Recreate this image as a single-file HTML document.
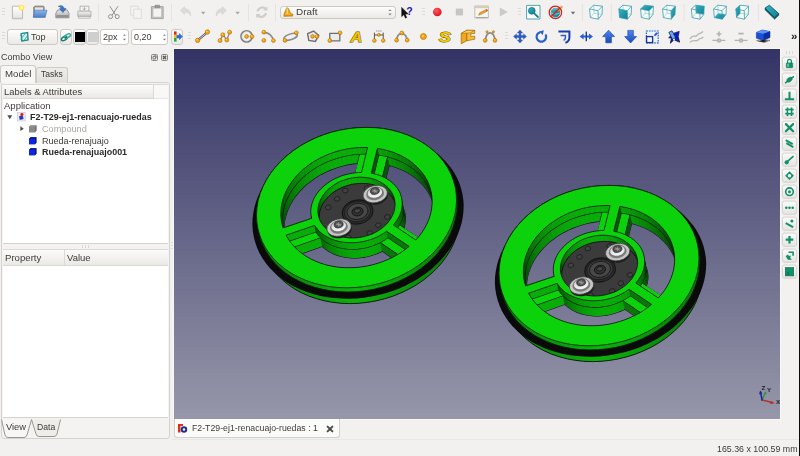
<!DOCTYPE html><html><head><meta charset="utf-8"><title>FreeCAD</title><style>
*{box-sizing:border-box;margin:0;padding:0}
html,body{width:800px;height:456px;overflow:hidden;background:#f2f1f0;font-family:"Liberation Sans", "DejaVu Sans", sans-serif;font-size:11px;color:#3c3c3c}
.abs{position:absolute}
#root{position:relative;width:800px;height:456px;background:#f2f1f0;overflow:hidden}
.t{position:absolute;white-space:nowrap;line-height:14px;font-size:11px;color:#3c3b37;filter:blur(.28px)}
.btn{position:absolute;border:1px solid #cdc9c3;border-radius:3px;background:linear-gradient(#fdfdfc,#ebe9e6)}
.field{position:absolute;border:1px solid #cdc9c3;border-radius:3px;background:#fff}
.hdl{position:absolute;width:3px}
.hdl i{display:block;width:3px;height:1px;background:#dedbd7;margin-bottom:2px}
.vhdl{position:absolute;height:3px;display:flex}
.vhdl i{display:block;width:1px;height:3px;background:#dcd9d5;margin-right:2px}
</style></head><body><div id="root">
<div class="hdl" style="left:2px;top:8px"><i></i><i></i><i></i></div>
<div class="hdl" style="left:421.5px;top:8px"><i></i><i></i><i></i></div>
<div class="hdl" style="left:518px;top:8px"><i></i><i></i><i></i></div>
<div class="hdl" style="left:2px;top:32px"><i></i><i></i><i></i></div>
<div class="hdl" style="left:187.5px;top:32px"><i></i><i></i><i></i></div>
<div class="hdl" style="left:505px;top:32px"><i></i><i></i><i></i></div>
<div class="abs" style="left:98px;top:4px;width:1px;height:17px;background:#e6e3df"></div>
<div class="abs" style="left:171px;top:4px;width:1px;height:17px;background:#e6e3df"></div>
<div class="abs" style="left:248px;top:4px;width:1px;height:17px;background:#e6e3df"></div>
<div class="btn" style="left:280px;top:5.500px;width:115.500px;height:13.200px;"></div>
<svg class="abs" style="left:0;top:0" width="800" height="26" viewBox="0 0 800 26">
<defs>
<linearGradient id="tealg" x1="0" y1="0" x2="1" y2="1"><stop offset="0" stop-color="#35b3c4"/><stop offset="1" stop-color="#0f7f92"/></linearGradient>
<linearGradient id="blueg" x1="0" y1="0" x2="0" y2="1"><stop offset="0" stop-color="#8db6e8"/><stop offset="1" stop-color="#4a7ec6"/></linearGradient>
<linearGradient id="grayg" x1="0" y1="0" x2="0" y2="1"><stop offset="0" stop-color="#e8e8e8"/><stop offset="1" stop-color="#a8a8a8"/></linearGradient>
<linearGradient id="lgrayg" x1="0" y1="0" x2="0" y2="1"><stop offset="0" stop-color="#f4f4f3"/><stop offset="1" stop-color="#c4c4c2"/></linearGradient>
<linearGradient id="pageg" x1="0" y1="0" x2="0" y2="1"><stop offset="0" stop-color="#ffffff"/><stop offset="1" stop-color="#e4e4e2"/></linearGradient>
<radialGradient id="redg" cx=".4" cy=".35" r=".7"><stop offset="0" stop-color="#ff5a5a"/><stop offset="1" stop-color="#d80f1f"/></radialGradient>
</defs>
<path d="M12.4 6.2h10.2v12.2h-10.2z" fill="url(#pageg)" stroke="#a9a9a6" stroke-width=".8"/><path d="M12.5 18.9h10.2" stroke="#c9c9c6" stroke-width=".8"/>
<circle cx="21.6" cy="7.6" r="2.9" fill="#ffe94a"/><circle cx="21.6" cy="7.6" r="1.5" fill="#fff9b0"/>
<path d="M33.6 7.2l1.2-1.2h8.6l.8 1v9.6h-10.6z" fill="#9b9b98" stroke="#6e6e6c" stroke-width=".6"/><path d="M35 7.4h8v6h-8z" fill="#e6e6e4"/>
<path d="M33.2 17.4l1.6-7.2h12.2l-1.8 7.2z" fill="url(#blueg)" stroke="#4673b4" stroke-width=".6"/>
<path d="M55.8 13.4l1.8-3.4h9.6l1.8 3.4v4.4h-13.2z" fill="url(#grayg)" stroke="#77777a" stroke-width=".7"/><path d="M56.6 15.2h11.6v1.6h-11.6z" fill="#8a8a8c"/>
<path d="M58.2 6.4c3-1.6 5.4-.6 6 2.2h1.9l-3.2 4-3.4-4h1.9c-.3-1.4-1.6-2-3.2-2.200z" fill="#3a76c8" stroke="#24509a" stroke-width=".5"/>
<path d="M80 6.2h8.8v5h-8.800z" fill="#f4f4f2" stroke="#9a9a98" stroke-width=".7"/><path d="M84.400 7.200v2.600m-1.300-1.200l1.300 1.400 1.300-1.400" stroke="#8a8a8a" stroke-width=".7" fill="none"/>
<path d="M77.8 11.2h13.200v5.200h-13.200z" fill="url(#lgrayg)" stroke="#a2a2a0" stroke-width=".7"/><path d="M78.600 16.400h11.600v1.800h-11.600z" fill="#f2f2f0" stroke="#9a9a98" stroke-width=".6"/>
<g stroke="#8a8a88" fill="none" stroke-width=".95"><path d="M109.800 6.200l5.800 8.800M118 6.200l-5.800 8.800"/><circle cx="110.600" cy="16.600" r="2"/><circle cx="117.200" cy="16.600" r="2"/></g>
<g stroke="#d9d8d5" fill="#f4f3f1" stroke-width=".8"><path d="M130.600 6.200h7.400v9h-7.400z"/><path d="M133.600 9.200h7.800v9.200h-7.800z"/></g>
<path d="M151.400 6.600h11.800v12h-11.800z" fill="#c6c6c3" stroke="#989895" stroke-width=".8"/><path d="M153 8.200h8.600v9h-8.600z" fill="#f3f3f1" stroke="#a5a5a2" stroke-width=".5"/><path d="M155 5.200h4.600v2.400h-4.600z" fill="#9a9a98" stroke="#7a7a78" stroke-width=".5"/>
<path d="M180.400 10.400l4.200-4v2.400c4 0 6.200 2.200 6 7.400-1-3-2.800-4-6-4v2.400z" fill="#dcdbd8" stroke="#d0cfcc" stroke-width=".5"/>
<path d="M201 11.8 l4.4 0 l-2.2 2.8z" fill="#a9a7a3"/>
<path d="M226.400 10.400l-4.200-4v2.400c-4 0-6.200 2.200-6 7.400 1-3 2.800-4 6-4v2.400z" fill="#dcdbd8" stroke="#d0cfcc" stroke-width=".5"/>
<path d="M235.4 11.8 l4.4 0 l-2.2 2.8z" fill="#a9a7a3"/>
<g fill="none" stroke="#cfcecb" stroke-width="2.2"><path d="M257.600 11.400a4.800 4.800 0 0 1 8-2.600"/><path d="M266 13a4.800 4.800 0 0 1-8 2.600"/></g><path d="M267.400 6.200v4.200h-4.200z M256.200 18.200v-4.200h4.200z" fill="#cfcecb"/>
<path d="M275.500 4v17" stroke="#e6e3df" stroke-width="1"/>
<path d="M284 14.600l2.600-6.800 1.600.4 2.600 5.600 2 .4v1.400l-8.800.6z" fill="#f2b01c" stroke="#8a5c00" stroke-width=".6"/><path d="M283.600 15.200h9.400v1.200h-9.400z" fill="#d88a10"/><path d="M287 8l.4 6" stroke="#fff0a0" stroke-width=".8"/>
<path d="M401.600 7.200l0 9.600 2.200-2 1.600 3.400 1.500-.7-1.600-3.300 3-.2z" fill="#111" stroke="#000" stroke-width=".3"/>
<text x="406.200" y="15.200" font-family="'Liberation Sans',sans-serif" font-weight="bold" font-size="10.500" fill="#1a22b8">?</text>
<circle cx="437.300" cy="12" r="4.300" fill="url(#redg)"/>
<rect x="455.800" y="8.600" width="7.200" height="6.800" fill="#c6c5c2"/>
<path d="M474.800 6h13.600v12h-13.600z" fill="#f6f5f1" stroke="#b4b2aa" stroke-width=".8"/><path d="M474.800 6h13.600v2.200h-13.600z" fill="#d6cfae"/><path d="M476 17.600h11.600" stroke="#9c9a94" stroke-width=".9"/><path d="M478.600 15.200l1-2.400 6.800-3.400 1 1.600-6.800 3.600z" fill="#f0a030" stroke="#a86414" stroke-width=".5"/><path d="M486.400 9.400l1 1.600" stroke="#d83a3a" stroke-width="1.2"/>
<path d="M499.800 7.600v9l8-4.500z" fill="#cbcac7"/>
<path d="M526.600 5.400h11l2.400 0v13.600h-13.400z" fill="#fbfdfd" stroke="#2e8f9c" stroke-width=".8"/><circle cx="531.800" cy="10.800" r="3.400" fill="url(#tealg)" stroke="#11707e" stroke-width=".7"/><path d="M534.200 13.400l3.800 3.600" stroke="#1a7f8e" stroke-width="1.800" stroke-linecap="round"/>
<circle cx="555.400" cy="12.600" r="4.800" fill="url(#tealg)"/><path d="M552.600 9.600c1.800-1 3.800-1 5.600 0M551 13c3 1.400 6 1.400 8.800 0" stroke="#9fe0e8" stroke-width=".7" fill="none"/><path d="M556.800 10.600l4.800-4.600 1 1-4.600 4.800z" fill="#f4b030" stroke="#a87010" stroke-width=".4"/><circle cx="555.400" cy="12.400" r="6.200" fill="none" stroke="#d8201c" stroke-width="1.300"/><path d="M551 16.800l8.800-8.800" stroke="#d8201c" stroke-width="1.300"/>
<path d="M570.8 11.8 l4.4 0 l-2.2 2.8z" fill="#6e6c68"/>
<path d="M582.400 4v17M611.300 4v17M684.200 4v17M758.400 4v17" stroke="#e6e3df" stroke-width="1"/>
<g transform="translate(589.6,5.2)" stroke="#2f98a8" stroke-width=".75" fill="none" stroke-linejoin="round"><path d="M0 3.7 L4.1 0 L12.8 1 L12.4 9.2 L8.7 14 L0.8 12.4Z" fill="#f7fbfc" stroke="none"/><path d="M4.1 0 L4.5 8.1 L12.4 9.2 M4.5 8.1 L0.8 12.4" stroke="#7fc2cc" stroke-width=".6"/><path d="M0 3.7 L8.4 5.5 L8.7 14 L0.8 12.4Z M0 3.7 L4.1 0 L12.8 1 L8.4 5.5 M12.8 1 L12.4 9.2 L8.7 14"/></g>
<g transform="translate(618.8,5.2)" stroke="#2f98a8" stroke-width=".75" fill="none" stroke-linejoin="round"><path d="M0 3.7 L4.1 0 L12.8 1 L12.4 9.2 L8.7 14 L0.8 12.4Z" fill="#f7fbfc" stroke="none"/><path d="M4.1 0 L4.5 8.1 L12.4 9.2 M4.5 8.1 L0.8 12.4" stroke="#7fc2cc" stroke-width=".6"/><path d="M0 3.7 L8.4 5.5 L8.7 14 L0.8 12.4Z" fill="url(#tealg)" stroke="none"/><path d="M0 3.7 L8.4 5.5 L8.7 14 L0.8 12.4Z M0 3.7 L4.1 0 L12.8 1 L8.4 5.5 M12.8 1 L12.4 9.2 L8.7 14"/></g>
<g transform="translate(640.6,5.2)" stroke="#2f98a8" stroke-width=".75" fill="none" stroke-linejoin="round"><path d="M0 3.7 L4.1 0 L12.8 1 L12.4 9.2 L8.7 14 L0.8 12.4Z" fill="#f7fbfc" stroke="none"/><path d="M4.1 0 L4.5 8.1 L12.4 9.2 M4.5 8.1 L0.8 12.4" stroke="#7fc2cc" stroke-width=".6"/><path d="M0 3.7 L8.4 5.5 L12.8 1 L4.1 0Z" fill="url(#tealg)" stroke="none"/><path d="M0 3.7 L8.4 5.5 L8.7 14 L0.8 12.4Z M0 3.7 L4.1 0 L12.8 1 L8.4 5.5 M12.8 1 L12.4 9.2 L8.7 14"/></g>
<g transform="translate(662.6,5.2)" stroke="#2f98a8" stroke-width=".75" fill="none" stroke-linejoin="round"><path d="M0 3.7 L4.1 0 L12.8 1 L12.4 9.2 L8.7 14 L0.8 12.4Z" fill="#f7fbfc" stroke="none"/><path d="M4.1 0 L4.5 8.1 L12.4 9.2 M4.5 8.1 L0.8 12.4" stroke="#7fc2cc" stroke-width=".6"/><path d="M8.4 5.5 L12.8 1 L12.4 9.2 L8.7 14Z" fill="url(#tealg)" stroke="none"/><path d="M0 3.7 L8.4 5.5 L8.7 14 L0.8 12.4Z M0 3.7 L4.1 0 L12.8 1 L8.4 5.5 M12.8 1 L12.4 9.2 L8.7 14"/></g>
<g transform="translate(691.4,5.2)" stroke="#2f98a8" stroke-width=".75" fill="none" stroke-linejoin="round"><path d="M0 3.7 L4.1 0 L12.8 1 L12.4 9.2 L8.7 14 L0.8 12.4Z" fill="#f7fbfc" stroke="none"/><path d="M4.1 0 L12.8 1 L12.4 9.2 L4.5 8.1Z" fill="url(#tealg)" stroke="none"/><path d="M4.1 0 L4.5 8.1 L12.4 9.2 M4.5 8.1 L0.8 12.4" stroke="#7fc2cc" stroke-width=".6"/><path d="M0 3.7 L8.4 5.5 L8.7 14 L0.8 12.4Z M0 3.7 L4.1 0 L12.8 1 L8.4 5.5 M12.8 1 L12.4 9.2 L8.7 14"/></g>
<g transform="translate(713.6,5.2)" stroke="#2f98a8" stroke-width=".75" fill="none" stroke-linejoin="round"><path d="M0 3.7 L4.1 0 L12.8 1 L12.4 9.2 L8.7 14 L0.8 12.4Z" fill="#f7fbfc" stroke="none"/><path d="M0.8 12.4 L8.7 14 L12.4 9.2 L4.5 8.1Z" fill="url(#tealg)" stroke="none"/><path d="M4.1 0 L4.5 8.1 L12.4 9.2 M4.5 8.1 L0.8 12.4" stroke="#7fc2cc" stroke-width=".6"/><path d="M0 3.7 L8.4 5.5 L8.7 14 L0.8 12.4Z M0 3.7 L4.1 0 L12.8 1 L8.4 5.5 M12.8 1 L12.4 9.2 L8.7 14"/></g>
<g transform="translate(735.8,5.2)" stroke="#2f98a8" stroke-width=".75" fill="none" stroke-linejoin="round"><path d="M0 3.7 L4.1 0 L12.8 1 L12.4 9.2 L8.7 14 L0.8 12.4Z" fill="#f7fbfc" stroke="none"/><path d="M0 3.7 L4.1 0 L4.5 8.1 L0.8 12.4Z" fill="url(#tealg)" stroke="none"/><path d="M4.1 0 L4.5 8.1 L12.4 9.2 M4.5 8.1 L0.8 12.4" stroke="#7fc2cc" stroke-width=".6"/><path d="M0 3.7 L8.4 5.5 L8.7 14 L0.8 12.4Z M0 3.7 L4.1 0 L12.8 1 L8.4 5.5 M12.8 1 L12.4 9.2 L8.7 14"/></g>
<path d="M765 8l4.400-2.800 9.400 8.400-4.200 4z" fill="url(#tealg)" stroke="#0c5060" stroke-width=".8" stroke-linejoin="round"/><path d="M765 8l0 1.800 9.600 9.400 4.200-4 0-1.600-4.200 4z" fill="#0b5c6c" stroke="#0a4858" stroke-width=".5" stroke-linejoin="round"/>
</svg>
<div class="t" style="left:295.7px;top:5.04px;font-size:9.7px;color:#3c3b37;transform-origin:0 0;transform:scaleX(1.0229);">Draft</div>
<svg class="abs" style="left:385.500px;top:6px" width="8" height="13" viewBox="0 0 8 13"><path d="M2.300 5 L4 3.200 L5.700 5 Z M2.300 7.600 L4 9.400 L5.700 7.600 Z" fill="#8a8884"/></svg>
<div class="btn" style="left:7px;top:29px;width:51px;height:16px;"></div>
<div class="t" style="left:31px;top:29.94px;font-size:9.7px;color:#3c3b37;transform-origin:0 0;transform:scaleX(0.9336);">Top</div>
<div class="btn" style="left:60px;top:29px;width:12px;height:16px;"></div>
<div class="btn" style="left:73px;top:29px;width:13px;height:16px;"></div><div class="abs" style="left:74.5px;top:32px;width:10px;height:10px;background:#000"></div>
<div class="btn" style="left:86px;top:29px;width:13px;height:16px;"></div><div class="abs" style="left:87.5px;top:32px;width:10px;height:10px;background:#cfcfcf"></div>
<div class="field" style="left:100px;top:29px;width:29px;height:16px;"></div>
<div class="t" style="left:103.3px;top:30.14px;font-size:9.7px;color:#3c3b37;transform-origin:0 0;transform:scaleX(0.9272);">2px</div>
<div class="field" style="left:130.500px;top:29px;width:37.500px;height:16px;"></div>
<div class="t" style="left:134.3px;top:30.14px;font-size:9.7px;color:#3c3b37;transform-origin:0 0;transform:scaleX(0.9270);">0,20</div>
<svg class="abs" style="left:121px;top:31px" width="7" height="12" viewBox="0 0 7 12"><path d="M2 4.800 L3.500 3.200 L5 4.800 Z M2 7.800 L3.500 9.400 L5 7.800 Z" fill="#77756f"/></svg>
<svg class="abs" style="left:160.5px;top:31px" width="7" height="12" viewBox="0 0 7 12"><path d="M2 4.800 L3.500 3.200 L5 4.800 Z M2 7.800 L3.500 9.400 L5 7.800 Z" fill="#77756f"/></svg>
<div class="btn" style="left:170.500px;top:29px;width:12.500px;height:15.500px;"></div>
<svg class="abs" style="left:0;top:26px" width="800" height="24" viewBox="0 26 800 24">
<g><path d="M21.200 33.600l6.400-1 .4 7.400-6.200 1z" fill="#d9eef0" stroke="#1f8d8a" stroke-width="1.400"/><path d="M20.200 36l2.600-3.400M20.600 39.600l5-6.600M23.200 41.400l4.800-6.400M26.400 41.200l2-2.800" stroke="#26a39c" stroke-width=".8"/></g>
<g fill="none"><ellipse cx="64.400" cy="38.400" rx="3.300" ry="1.700" transform="rotate(-32 64.400 38.400)" stroke="#14806e" stroke-width="1.500"/><ellipse cx="67.600" cy="36" rx="3.300" ry="1.700" transform="rotate(-32 67.600 36)" stroke="#35a898" stroke-width="1.400" fill="#dff3ef"/><path d="M64.800 38.200l2.400-1.800" stroke="#0e6a5a" stroke-width="1.400"/></g>
<rect x="174" y="31.400" width="2.600" height="3.400" fill="#e02818"/><rect x="174" y="34.800" width="2.600" height="3.200" fill="#f0c020"/><rect x="174" y="38" width="2.600" height="3.600" fill="#28a838"/><path d="M176.800 35.200h2.600v-1.800l3 3.200-3 3.200v-1.800h-2.600z" fill="#2a6fe0" stroke="#1848a8" stroke-width=".4"/>
<path d="M197.600 40.400l10-8.400" stroke="#4a4a4a" stroke-width="2.200"/><path d="M197.600 40.400l10-8.400" stroke="#d8d8d8" stroke-width="1"/><circle cx="197.6" cy="40.4" r="2.2" fill="#f6a40c" stroke="#a96b00" stroke-width=".6"/><circle cx="197.1" cy="39.8" r="0.77" fill="#ffd774"/><circle cx="207.4" cy="32" r="2.2" fill="#f6a40c" stroke="#a96b00" stroke-width=".6"/><circle cx="206.9" cy="31.4" r="0.77" fill="#ffd774"/>
<path d="M220 40.600l3-5.800 3.800 5.200 3-8" stroke="#8d8d8d" stroke-width="1.300" fill="none"/><circle cx="220" cy="40.6" r="2" fill="#f6a40c" stroke="#a96b00" stroke-width=".6"/><circle cx="219.5" cy="40.0" r="0.70" fill="#ffd774"/><circle cx="222.8" cy="34.8" r="2" fill="#f6a40c" stroke="#a96b00" stroke-width=".6"/><circle cx="222.3" cy="34.199999999999996" r="0.70" fill="#ffd774"/><circle cx="226.8" cy="40" r="2" fill="#f6a40c" stroke="#a96b00" stroke-width=".6"/><circle cx="226.3" cy="39.4" r="0.70" fill="#ffd774"/><circle cx="229.6" cy="32.2" r="2" fill="#f6a40c" stroke="#a96b00" stroke-width=".6"/><circle cx="229.1" cy="31.6" r="0.70" fill="#ffd774"/>
<circle cx="246.600" cy="36.400" r="5.600" fill="none" stroke="#7e7e7e" stroke-width="1.600"/><circle cx="246.600" cy="36.400" r="4.600" fill="none" stroke="#d6d6d6" stroke-width=".6"/><circle cx="246.6" cy="36.4" r="1.9" fill="#f6a40c" stroke="#a96b00" stroke-width=".6"/><circle cx="246.1" cy="35.8" r="0.66" fill="#ffd774"/><circle cx="252" cy="36.6" r="1.9" fill="#f6a40c" stroke="#a96b00" stroke-width=".6"/><circle cx="251.5" cy="36.0" r="0.66" fill="#ffd774"/>
<path d="M263.600 32.600c5-.4 9 3 9.600 8" stroke="#8d8d8d" stroke-width="1.800" fill="none"/><circle cx="263.8" cy="32.2" r="1.9" fill="#f6a40c" stroke="#a96b00" stroke-width=".6"/><circle cx="263.3" cy="31.6" r="0.66" fill="#ffd774"/><circle cx="263.8" cy="40.4" r="1.9" fill="#f6a40c" stroke="#a96b00" stroke-width=".6"/><circle cx="263.3" cy="39.8" r="0.66" fill="#ffd774"/><circle cx="273.4" cy="40.6" r="1.9" fill="#f6a40c" stroke="#a96b00" stroke-width=".6"/><circle cx="272.9" cy="40.0" r="0.66" fill="#ffd774"/>
<ellipse cx="290.600" cy="36.800" rx="7" ry="2.800" transform="rotate(-18 290.600 36.800)" fill="none" stroke="#8d8d8d" stroke-width="1.500"/><circle cx="285" cy="40.4" r="1.9" fill="#f6a40c" stroke="#a96b00" stroke-width=".6"/><circle cx="284.5" cy="39.8" r="0.66" fill="#ffd774"/><circle cx="296.4" cy="32.8" r="1.9" fill="#f6a40c" stroke="#a96b00" stroke-width=".6"/><circle cx="295.9" cy="32.199999999999996" r="0.66" fill="#ffd774"/>
<path d="M307.600 33.600l6-2.600 5.200 4.400-3.400 6-6.600-1z" fill="#e8e8e8" stroke="#707070" stroke-width="1.400"/><circle cx="312.6" cy="36.4" r="1.8" fill="#f6a40c" stroke="#a96b00" stroke-width=".6"/><circle cx="312.1" cy="35.8" r="0.63" fill="#ffd774"/><circle cx="317" cy="36.6" r="1.8" fill="#f6a40c" stroke="#a96b00" stroke-width=".6"/><circle cx="316.5" cy="36.0" r="0.63" fill="#ffd774"/>
<path d="M329.800 33.400h10v7.400h-10z" fill="#ececec" stroke="#707070" stroke-width="1.300"/><circle cx="329.8" cy="40.6" r="1.9" fill="#f6a40c" stroke="#a96b00" stroke-width=".6"/><circle cx="329.3" cy="40.0" r="0.66" fill="#ffd774"/><circle cx="340" cy="32.8" r="1.9" fill="#f6a40c" stroke="#a96b00" stroke-width=".6"/><circle cx="339.5" cy="32.199999999999996" r="0.66" fill="#ffd774"/>
<text x="350.600" y="42" font-family="'Liberation Sans',sans-serif" font-weight="bold" font-style="italic" font-size="14.500" fill="#f2c400" stroke="#6a5000" stroke-width=".9" paint-order="stroke" transform="translate(350.600 0) scale(1.12 1) translate(-350.600 0)">A</text>
<path d="M374.400 32.600v8M383.200 32.600v8M374.400 35h8.800" stroke="#555" stroke-width="1" fill="none"/><path d="M376.400 31h5" stroke="#999" stroke-width="1.400" stroke-dasharray="1 1"/><circle cx="374.4" cy="40.6" r="1.8" fill="#f6a40c" stroke="#a96b00" stroke-width=".6"/><circle cx="373.9" cy="40.0" r="0.63" fill="#ffd774"/><circle cx="383.2" cy="40.6" r="1.8" fill="#f6a40c" stroke="#a96b00" stroke-width=".6"/><circle cx="382.7" cy="40.0" r="0.63" fill="#ffd774"/><circle cx="378.8" cy="34.8" r="1.5" fill="#f6a40c" stroke="#a96b00" stroke-width=".6"/><circle cx="378.3" cy="34.199999999999996" r="0.52" fill="#ffd774"/>
<path d="M396.600 40.400c.6-9 9.400-9 10.600 0" stroke="#8d8d8d" stroke-width="1.800" fill="none"/><circle cx="396.6" cy="40.2" r="1.9" fill="#f6a40c" stroke="#a96b00" stroke-width=".6"/><circle cx="396.1" cy="39.6" r="0.66" fill="#ffd774"/><circle cx="401.8" cy="33" r="1.9" fill="#f6a40c" stroke="#a96b00" stroke-width=".6"/><circle cx="401.3" cy="32.4" r="0.66" fill="#ffd774"/><circle cx="407.2" cy="40.2" r="1.9" fill="#f6a40c" stroke="#a96b00" stroke-width=".6"/><circle cx="406.7" cy="39.6" r="0.66" fill="#ffd774"/>
<circle cx="423.4" cy="36.5" r="3" fill="#f6a40c" stroke="#a96b00" stroke-width=".6"/><circle cx="422.9" cy="35.9" r="1.05" fill="#ffd774"/>
<text x="438.800" y="42" font-family="'Liberation Sans',sans-serif" font-weight="bold" font-style="italic" font-size="14" fill="#f2cc00" stroke="#6a5000" stroke-width=".9" paint-order="stroke" transform="translate(438.800 0) scale(1.3 1) translate(-438.800 0)">S</text>
<path d="M461.200 33.400l5.600-3.200v10.600l-5.600 3z" fill="#f5a818" stroke="#8a5a00" stroke-width=".6"/><path d="M466.800 30.200l8 .2v3l-4 .4v2.600l4-.2v3l-8 1.600z" fill="#f8bc3c" stroke="#8a5a00" stroke-width=".6"/><path d="M461.200 33.400l5.600-3.200 8 .2-5 2.600z" fill="#fdd060" stroke="#8a5a00" stroke-width=".5"/>
<path d="M485.400 40.400c1-10 8.400-10 9.600 0" stroke="#8d8d8d" stroke-width="1.800" fill="none"/><circle cx="485.2" cy="40.4" r="1.9" fill="#f6a40c" stroke="#a96b00" stroke-width=".6"/><circle cx="484.7" cy="39.8" r="0.66" fill="#ffd774"/><circle cx="495" cy="40.4" r="1.9" fill="#f6a40c" stroke="#a96b00" stroke-width=".6"/><circle cx="494.5" cy="39.8" r="0.66" fill="#ffd774"/><circle cx="487" cy="31.8" r="1.1" fill="#f6a40c" stroke="#a96b00" stroke-width=".6"/><circle cx="486.5" cy="31.2" r="0.39" fill="#ffd774"/><circle cx="493.4" cy="31.8" r="1.1" fill="#f6a40c" stroke="#a96b00" stroke-width=".6"/><circle cx="492.9" cy="31.2" r="0.39" fill="#ffd774"/>
<g fill="#2a5fd0" stroke="#183c98" stroke-width=".4"><path d="M520 30l2.600 3h-1.700v2.600h2.600v-1.700l3 2.600-3 2.600v-1.700h-2.600v2.600h1.700l-2.600 3-2.600-3h1.700v-2.600h-2.600v1.700l-3-2.600 3-2.600v1.700h2.600v-2.600h-1.700z"/></g>
<path d="M545.600 34.600a4.800 4.800 0 1 1-5.400-2.400" fill="none" stroke="#2a5fd0" stroke-width="2.200"/><path d="M543.800 30.200l-4.600 1.400 3.600 3.400z" fill="#2a5fd0"/>
<path d="M558.400 31.400h11v6c0 2.400-1.400 4.400-4 5.400" fill="none" stroke="#1a3fa8" stroke-width="2"/><path d="M560.600 35.400h4.800v2.400c0 1.200-.6 2-1.800 2.600" fill="none" stroke="#2a5fd0" stroke-width="1.500"/>
<g fill="#2a5fd0"><path d="M579.600 36.400l4-3v2h2.400v2h-2.400v2z"/><path d="M593 36.400l-4-3v2h-2.400v2h2.400v2z"/><rect x="585.600" y="31.600" width="1.400" height="9.600" fill="#183c98"/></g>
<path d="M608.600 30.200l6 6.400h-3.200v6.200h-5.600v-6.200h-3.200z" fill="url(#blueg2)" stroke="#183c98" stroke-width=".6"/>
<path d="M630.600 43l6-6.400h-3.200v-6.200h-5.600v6.200h-3.200z" fill="url(#blueg2)" stroke="#183c98" stroke-width=".6"/>
<defs><linearGradient id="blueg2" x1="0" y1="0" x2="0" y2="1"><stop offset="0" stop-color="#4a8af0"/><stop offset="1" stop-color="#1a48c0"/></linearGradient></defs>
<rect x="646.400" y="31" width="11.800" height="11.800" fill="#eef2fc" stroke="#2a5fd0" stroke-width="1.200" stroke-dasharray="1.600 1"/><rect x="646.600" y="36.600" width="6" height="6" fill="#fff" stroke="#1a3a90" stroke-width="1.400"/><path d="M653.800 35l2.600-2.800 1.600 1.400-2.800 2.600z" fill="#2a5fd0"/>
<path d="M668.600 37.800l4.600-4.400 6-2 -1 5.200 1.400 5.600-5.600-2.400-3.600 3.400 1-5.200z" fill="#0a1ed0" stroke="#04083a" stroke-width=".7" stroke-linejoin="round"/><path d="M668.800 32.400l3.200-1.600 3.600 6.800-3.200 1.600z" fill="#6aa8e8" stroke="#0a1850" stroke-width=".7"/><circle cx="674" cy="39.400" r="1" fill="#fff"/>
<g fill="none" stroke="#b9b8b5" stroke-width="1.400"><path d="M690 39c3-6 5-.6 7-3.600s3.600-1 6-4"/><path d="M690 42.400c3-4 6 0 8-2.400s3-1 5.400-3"/></g>
<g stroke="#b4b3b0" stroke-width="1.300" fill="#c4c3c0"><path d="M712.400 40.400h13"/><circle cx="719" cy="40.400" r="1.600"/><path d="M719 31.600v4.800M716.600 34h4.800" stroke-width="1.600"/></g>
<g stroke="#b4b3b0" stroke-width="1.300" fill="#c4c3c0"><path d="M734.600 40.400h13"/><circle cx="741" cy="40.400" r="1.600"/><path d="M738.400 33.600h5.200" stroke-width="1.800"/></g>
<path d="M756.600 40.600l5.400-1.600 8 1.400-5.600 2z" fill="#f4f4f4" stroke="#555" stroke-width=".6"/><path d="M757.800 41.200l5-1.400 5.600 1-4.600 1.400z" fill="#222"/>
<path d="M756.400 32.400l6-2.400 7.600 1.600v6l-6.400 2.400-7.200-1.800z" fill="#1a50d8" stroke="#0a2070" stroke-width=".5"/><path d="M756.400 32.400l6-2.400 7.600 1.600-6.400 2.200z" fill="#5a94f4"/><path d="M763.600 33.800l6.400-2.200v6l-6.400 2.400z" fill="#0c30a0"/>
</svg>
<div class="t" style="left:790.500px;top:28.500px;font-size:11px;font-weight:bold;color:#1a1a1a;transform-origin:0 0;transform:scaleX(1.05)">»</div>
<div class="t" style="left:1.3px;top:50.39px;font-size:9.7px;color:#3c3b37;transform-origin:0 0;transform:scaleX(0.9359);">Combo View</div>
<svg class="abs" style="left:151px;top:53.500px" width="20" height="8" viewBox="0 0 20 8"><rect x=".5" y=".5" width="6" height="6" rx="1" fill="#e4e2de" stroke="#8a8884"/><path d="M2 2.500h2.500v2.500h-2.500z M3.200 1.800h2v2" stroke="#666" stroke-width=".7" fill="none"/><rect x="10.5" y=".5" width="6" height="6" rx="1" fill="#e4e2de" stroke="#8a8884"/><path d="M12 2 l3 3 M15 2 l-3 3" stroke="#555" stroke-width="1.2"/></svg>
<div class="abs" style="left:0.800px;top:82.300px;width:169.400px;height:357px;border:1.800px solid #d6d3cf;border-bottom-width:1px;border-top-width:1px;border-radius:3px;background:#f4f3f2"></div>
<div class="abs" style="left:36px;top:66.500px;width:31.600px;height:16px;border:1px solid #cfccc6;border-bottom:none;border-radius:3px 3px 0 0;background:linear-gradient(#efedea,#e3e0dc)"></div>
<div class="abs" style="left:0px;top:65px;width:36px;height:18px;border:1px solid #cfccc6;border-bottom:none;border-radius:3px 3px 0 0;background:#f7f6f5"></div>
<div class="t" style="left:5.2px;top:66.64px;font-size:9.7px;color:#3c3b37;transform-origin:0 0;transform:scaleX(0.9956);">Model</div>
<div class="t" style="left:41px;top:67.14px;font-size:9.7px;color:#3c3b37;transform-origin:0 0;transform:scaleX(0.8792);">Tasks</div>
<div class="abs" style="left:2.600px;top:84px;width:165.800px;height:160px;border-top:1px solid #dcd9d5;border-bottom:1px solid #d6d3ce;background:#fff"></div>
<div class="abs" style="left:2.5px;top:85px;width:151px;height:14px;background:linear-gradient(#fbfbfa,#ebe9e6);border-right:1px solid #dcd9d4;border-bottom:1px solid #dcd9d4"></div>
<div class="abs" style="left:153.500px;top:85px;width:14px;height:14px;background:#f9f8f7;border-bottom:1px solid #e6e4e0"></div>
<div class="t" style="left:4.4px;top:85.39px;font-size:9.7px;color:#3c3b37;transform-origin:0 0;transform:scaleX(0.9669);">Labels &amp; Attributes</div>
<div class="t" style="left:3.8px;top:98.64px;font-size:9.7px;color:#3c3b37;transform-origin:0 0;transform:scaleX(0.9821);">Application</div>
<svg class="abs" style="left:6.500px;top:114.800px" width="6" height="5" viewBox="0 0 6 5"><path d="M0.300 0.300 L5.300 0.300 L2.800 4.200 Z" fill="#4e4e4c"/></svg>
<div class="t" style="left:29.8px;top:110.39px;font-size:9.7px;color:#2a2a28;transform-origin:0 0;transform:scaleX(0.9223);font-weight:bold;">F2-T29-ej1-renacuajo-ruedas</div>
<svg class="abs" style="left:19.600px;top:126.300px" width="5" height="6" viewBox="0 0 5 6"><path d="M0.300 0.300 L0.300 5 L3.800 2.650 Z" fill="#4e4e4c"/></svg>
<div class="t" style="left:41.8px;top:121.89px;font-size:9.7px;color:#a9a7a3;transform-origin:0 0;transform:scaleX(0.9442);">Compound</div>
<div class="t" style="left:41.8px;top:133.64px;font-size:9.7px;color:#3c3b37;transform-origin:0 0;transform:scaleX(0.9314);">Rueda-renajuajo</div>
<div class="t" style="left:41.8px;top:145.39px;font-size:9.7px;color:#2a2a28;transform-origin:0 0;transform:scaleX(0.9243);font-weight:bold;">Rueda-renajuajo001</div>
<svg class="abs" style="left:16.500px;top:112px" width="9" height="10" viewBox="0 0 9 10"><rect x=".6" y=".6" width="7.600" height="8.400" fill="#ececf6" stroke="#c4c4d4" stroke-width=".6"/><path d="M2 4.200 L5.800 3.600 L6.600 7 L2.800 8 Z" fill="#2438c0"/><path d="M3.400 2.400 a1.600 1.500 0 0 1 3.200 .2 L5.800 3.800 L3.600 4 Z" fill="#e01c10"/></svg>
<svg class="abs" style="left:29.2px;top:124.7px" width="8" height="8" viewBox="0 0 8 8"><path d="M0.200 1.600 L1.600 0.200 L7.600 0.200 L7.600 5.600 L6.200 7.200 L0.200 7.200 Z" fill="#6a6a6a"/><path d="M0.200 1.600 L6.200 1.600 L6.200 7.200 L0.200 7.200 Z" fill="#8a8a8a"/><path d="M0.200 1.600 L1.600 0.200 L7.600 0.200 L6.200 1.600Z" fill="#a8a8a8"/></svg>
<svg class="abs" style="left:29.2px;top:136.5px" width="8" height="8" viewBox="0 0 8 8"><path d="M0.200 1.600 L1.600 0.200 L7.600 0.200 L7.600 5.600 L6.200 7.200 L0.200 7.200 Z" fill="#06127a"/><path d="M0.200 1.600 L6.200 1.600 L6.200 7.200 L0.200 7.200 Z" fill="#0c24e8"/><path d="M0.200 1.600 L1.600 0.200 L7.600 0.200 L6.200 1.600Z" fill="#0a1a9a"/></svg>
<svg class="abs" style="left:29.2px;top:148.4px" width="8" height="8" viewBox="0 0 8 8"><path d="M0.200 1.600 L1.600 0.200 L7.600 0.200 L7.600 5.600 L6.200 7.200 L0.200 7.200 Z" fill="#06127a"/><path d="M0.200 1.600 L6.200 1.600 L6.200 7.200 L0.200 7.200 Z" fill="#0c24e8"/><path d="M0.200 1.600 L1.600 0.200 L7.600 0.200 L6.200 1.600Z" fill="#0a1a9a"/></svg>
<div class="vhdl" style="left:82px;top:245px"><i></i><i></i><i></i></div>
<div class="hdl" style="left:170.800px;top:241.500px;width:2.400px"><i style="width:2.400px"></i><i style="width:2.400px"></i><i style="width:2.400px"></i></div>
<div class="abs" style="left:2.600px;top:249px;width:165.800px;height:169px;border-top:1px solid #dcd9d5;border-bottom:1px solid #d6d3ce;background:#fff"></div>
<div class="abs" style="left:2.500px;top:250px;width:62px;height:15.500px;background:linear-gradient(#fbfbfa,#ebe9e6);border-right:1px solid #dcd9d4;border-bottom:1px solid #dcd9d4"></div>
<div class="abs" style="left:64.500px;top:250px;width:103px;height:15.500px;background:linear-gradient(#fbfbfa,#ebe9e6);border-bottom:1px solid #dcd9d4"></div>
<div class="t" style="left:5.4px;top:250.89px;font-size:9.7px;color:#3c3b37;transform-origin:0 0;transform:scaleX(0.9930);">Property</div>
<div class="t" style="left:66.8px;top:250.89px;font-size:9.7px;color:#3c3b37;transform-origin:0 0;transform:scaleX(0.9797);">Value</div>
<svg class="abs" style="left:0px;top:418px" width="70" height="22" viewBox="0 0 70 22"><path d="M31.5 1.5 L36 16 Q36.8 18.5 39 18.5 L54 18.5 Q56.2 18.5 57 16 L60.5 1.5" fill="#efedea" stroke="#8f8c86" stroke-width=".9"/><path d="M1.5 1.5 L5 17 Q5.8 19.5 8 19.5 L24 19.5 Q26.2 19.5 27 17 L31.5 1.5" fill="#f7f6f5" stroke="#8f8c86" stroke-width=".9"/></svg>
<div class="t" style="left:6.4px;top:420.24px;font-size:9.7px;color:#3c3b37;transform-origin:0 0;transform:scaleX(0.9593);">View</div>
<div class="t" style="left:36.9px;top:420.14px;font-size:9.7px;color:#3c3b37;transform-origin:0 0;transform:scaleX(0.8932);">Data</div>
<div class="abs" style="left:174px;top:49px;width:606px;height:370px;background:linear-gradient(#333366,#9797aa);box-shadow:0 0 0 1px #f8f8f7"></div>
<svg class="abs" style="left:174px;top:49px" width="606" height="370" viewBox="174 49 606 370">
<defs><linearGradient id="bgfill" gradientUnits="userSpaceOnUse" x1="0" y1="49" x2="0" y2="419"><stop offset="0" stop-color="#333366"/><stop offset="1" stop-color="#9797aa"/></linearGradient>
<linearGradient id="sideA" gradientUnits="userSpaceOnUse" x1="-100" y1="0" x2="100" y2="0"><stop offset="0" stop-color="rgb(10,120,10)"/><stop offset=".5" stop-color="rgb(11,178,11)"/><stop offset="1" stop-color="rgb(10,120,10)"/></linearGradient>
<linearGradient id="sideB" gradientUnits="userSpaceOnUse" x1="-100" y1="0" x2="100" y2="0"><stop offset="0" stop-color="rgb(10,120,10)"/><stop offset=".5" stop-color="rgb(11,178,11)"/><stop offset="1" stop-color="rgb(10,120,10)"/></linearGradient>
<linearGradient id="domeA" x1="0" y1="0" x2="0" y2="1"><stop offset="0" stop-color="#bdbdbd"/><stop offset=".55" stop-color="#e6e6e6"/><stop offset="1" stop-color="#f6f6f6"/></linearGradient>
<linearGradient id="domeB" x1="0" y1="0" x2="0" y2="1"><stop offset="0" stop-color="#bdbdbd"/><stop offset=".55" stop-color="#e6e6e6"/><stop offset="1" stop-color="#f6f6f6"/></linearGradient>
</defs>
<g transform="translate(356.5,207.6)" stroke-linejoin="round">
<path d="M-97.8,17.0 L-97.4,10.0 L-96.1,3.0 L-94.1,-3.9 L-91.4,-10.7 L-88.0,-17.4 L-83.8,-23.8 L-79.0,-30.0 L-73.7,-35.9 L-67.7,-41.5 L-61.2,-46.6 L-54.2,-51.3 L-46.8,-55.6 L-39.0,-59.3 L-30.9,-62.5 L-22.5,-65.2 L-14.0,-67.3 L-5.3,-68.8 L3.4,-69.7 L12.1,-69.9 L20.7,-69.6 L29.2,-68.7 L37.5,-67.1 L45.5,-65.0 L53.2,-62.3 L60.5,-59.1 L67.4,-55.3 L73.7,-51.0 L79.5,-46.3 L84.8,-41.1 L89.4,-35.5 L93.3,-29.6 L96.5,-23.4 L99.0,-16.9 L100.8,-10.2 L102.0,-4.8 L103.0,2.1 L103.3,9.0 L102.8,16.0 L101.5,23.0 L99.5,29.9 L96.8,36.8 L93.4,43.4 L89.2,49.9 L84.5,56.1 L79.1,62.0 L73.1,67.5 L66.6,72.7 L59.6,77.4 L52.2,81.6 L44.4,85.3 L36.3,88.6 L27.9,91.2 L19.4,93.3 L10.7,94.8 L2.0,95.7 L-6.7,96.0 L-15.3,95.7 L-23.8,94.7 L-32.1,93.2 L-40.1,91.0 L-47.8,88.4 L-55.1,85.1 L-62.0,81.3 L-68.3,77.0 L-74.1,72.3 L-79.3,67.1 L-83.9,61.6 L-87.9,55.7 L-91.1,49.4 L-93.6,43.0 L-95.4,36.3 L-96.5,30.8 L-97.6,24.0Z" fill="url(#sideA)" stroke="#0a1a0a" stroke-width="1"/>
<path d="M102.4,-13.5 L103.3,-8.1 L103.7,-2.6 L103.5,3.0 L102.9,8.6 L101.8,14.2 L100.2,19.8 L98.2,25.2 L95.6,30.7 L92.6,36.0 L89.2,41.1 L85.3,46.1 L81.0,50.9 L76.3,55.5 L71.3,59.9 L65.9,64.0 L60.2,67.8 L54.3,71.3 L48.0,74.6 L41.6,77.5 L34.9,80.0 L28.1,82.2 L21.2,84.0 L14.1,85.5 L7.0,86.6 L-0.1,87.3 L-7.2,87.6 L-14.3,87.5 L-21.3,87.0 L-28.2,86.2 L-34.9,84.9 L-41.5,83.3 L-47.9,81.3 L-54.0,79.0 L-59.8,76.3 L-65.4,73.3 L-70.6,69.9 L-75.5,66.2 L-79.9,62.3 L-84.0,58.1 L-87.7,53.6 L-91.0,48.9 L-93.8,44.1 L-96.1,39.0 L-97.9,33.8 L-99.3,28.4 L-100.2,23.0 L-100.6,17.4 L-100.5,11.9 L-99.8,6.3 L-98.7,0.7 L-97.1,-4.9 L-95.1,-10.4 L-92.5,-15.8 L-89.5,-21.1 L-86.1,-26.2 L-82.2,-31.2 L-77.9,-36.0 L-73.2,-40.6 L-68.2,-45.0 L-62.8,-49.1 L-57.1,-52.9 L-51.2,-56.5 L-44.9,-59.7 L-38.5,-62.6 L-31.8,-65.1 L-25.0,-67.3 L-18.1,-69.2 L-11.0,-70.6 L-3.9,-71.7 L3.2,-72.4 L10.3,-72.7 L17.4,-72.6 L24.4,-72.2 L31.3,-71.3 L38.0,-70.1 L44.6,-68.4 L51.0,-66.5 L57.1,-64.1 L62.9,-61.4 L68.5,-58.4 L73.7,-55.0 L78.6,-51.4 L83.0,-47.4 L87.1,-43.2 L90.8,-38.7 L94.1,-34.1 L96.9,-29.2 L99.2,-24.1 L101.0,-18.9Z" fill="none" stroke="#0a0a0a" stroke-width="7"/>
<path d="M-100.0,6.8 L-99.5,-0.2 L-98.2,-7.2 L-96.3,-14.2 L-93.5,-21.0 L-90.1,-27.7 L-86.0,-34.1 L-81.2,-40.3 L-75.8,-46.2 L-69.8,-51.7 L-63.3,-56.9 L-56.3,-61.6 L-48.9,-65.8 L-41.1,-69.6 L-33.0,-72.8 L-24.7,-75.5 L-16.1,-77.5 L-7.5,-79.0 L1.2,-79.9 L10.0,-80.2 L18.6,-79.9 L27.1,-79.0 L35.4,-77.4 L43.4,-75.3 L51.1,-72.6 L58.4,-69.3 L65.2,-65.6 L71.6,-61.3 L77.4,-56.5 L82.6,-51.4 L87.2,-45.8 L91.2,-39.9 L94.4,-33.7 L96.9,-27.2 L98.7,-20.5 L99.6,-16.3 L100.6,-9.5 L100.9,-2.5 L100.4,4.5 L99.1,11.4 L97.1,18.4 L94.4,25.2 L91.0,31.9 L86.8,38.3 L82.1,44.5 L76.7,50.4 L70.7,56.0 L64.2,61.1 L57.2,65.8 L49.8,70.0 L42.0,73.8 L33.9,77.0 L25.5,79.7 L17.0,81.8 L8.3,83.2 L-0.4,84.1 L-9.1,84.4 L-17.7,84.1 L-26.2,83.2 L-34.5,81.6 L-42.5,79.5 L-50.2,76.8 L-57.5,73.5 L-64.4,69.8 L-70.7,65.5 L-76.5,60.8 L-81.8,55.6 L-86.3,50.0 L-90.3,44.1 L-93.5,37.9 L-96.0,31.4 L-97.8,24.7 L-98.7,20.5 L-99.7,13.7Z" fill="url(#sideA)" stroke="#0a1a0a" stroke-width="1"/>
<path d="M98.7,-20.5 L99.7,-13.7 L100.0,-6.8 L99.5,0.2 L98.3,7.2 L96.3,14.2 L93.5,21.0 L90.1,27.7 L86.0,34.1 L81.2,40.3 L75.8,46.2 L69.8,51.7 L63.3,56.9 L56.3,61.6 L48.9,65.8 L41.1,69.6 L33.0,72.8 L24.7,75.5 L16.1,77.5 L7.5,79.0 L-1.3,79.9 L-10.0,80.2 L-18.6,79.9 L-27.1,79.0 L-35.4,77.4 L-43.4,75.3 L-51.1,72.6 L-58.4,69.3 L-65.2,65.6 L-71.6,61.3 L-77.4,56.5 L-82.6,51.4 L-87.2,45.8 L-91.2,39.9 L-94.4,33.7 L-96.9,27.2 L-98.7,20.5 L-99.7,13.7 L-100.0,6.8 L-99.5,-0.2 L-98.3,-7.2 L-96.3,-14.2 L-93.5,-21.0 L-90.1,-27.7 L-86.0,-34.1 L-81.2,-40.3 L-75.8,-46.2 L-69.8,-51.7 L-63.3,-56.9 L-56.3,-61.6 L-48.9,-65.8 L-41.1,-69.6 L-33.0,-72.8 L-24.7,-75.5 L-16.1,-77.5 L-7.5,-79.0 L1.3,-79.9 L10.0,-80.2 L18.6,-79.9 L27.1,-79.0 L35.4,-77.4 L43.4,-75.3 L51.1,-72.6 L58.4,-69.3 L65.2,-65.6 L71.6,-61.3 L77.4,-56.5 L82.6,-51.4 L87.2,-45.8 L91.2,-39.9 L94.4,-33.7 L96.9,-27.2Z" fill="rgb(11,210,11)" stroke="#0a1a0a" stroke-width=".8"/>
<clipPath id="cA_0a"><path d="M20.9,-59.2 L25.9,-58.3 L30.8,-57.1 L35.6,-55.7 L40.2,-53.9 L44.6,-51.9 L48.7,-49.7 L52.7,-47.2 L56.3,-44.5 L59.7,-41.5 L62.8,-38.4 L65.6,-35.0 L68.1,-31.5 L70.3,-27.9 L72.1,-24.1 L73.5,-20.1 L74.6,-16.1 L75.3,-12.0 L75.6,-7.9 L75.6,-3.7 L75.2,0.5 L74.5,4.8 L73.3,8.9 L71.8,13.1 L70.0,17.2 L67.8,21.2 L65.3,25.1 L62.4,28.8 L59.3,32.4 L36.8,17.4 L38.6,15.3 L40.1,13.1 L41.5,10.9 L42.7,8.7 L43.7,6.4 L44.5,4.0 L45.1,1.7 L45.5,-0.7 L45.7,-3.0 L45.7,-5.3 L45.4,-7.7 L45.0,-9.9 L44.4,-12.2 L43.6,-14.4 L42.6,-16.5 L41.4,-18.5 L40.0,-20.5 L38.4,-22.3 L36.7,-24.1 L34.7,-25.8 L32.7,-27.3 L30.5,-28.7 L28.1,-30.0 L25.7,-31.2 L23.1,-32.2 L20.4,-33.1 L17.6,-33.8 L14.7,-34.4Z"/></clipPath>
<clipPath id="cA_0b"><path d="M22.2,-52.8 L27.2,-51.9 L32.1,-50.8 L36.9,-49.3 L41.5,-47.6 L45.9,-45.6 L50.1,-43.3 L54.0,-40.8 L57.7,-38.1 L61.1,-35.2 L64.2,-32.0 L67.0,-28.7 L69.4,-25.2 L71.6,-21.5 L73.4,-17.7 L74.8,-13.8 L75.9,-9.8 L76.6,-5.7 L77.0,-1.5 L76.9,2.7 L76.5,6.9 L75.8,11.1 L74.6,15.3 L73.2,19.5 L71.3,23.5 L69.1,27.5 L66.6,31.4 L63.8,35.2 L60.6,38.8 L38.2,23.7 L39.9,21.7 L41.5,19.5 L42.8,17.3 L44.0,15.0 L45.0,12.7 L45.8,10.4 L46.4,8.1 L46.8,5.7 L47.0,3.4 L47.0,1.0 L46.8,-1.3 L46.4,-3.6 L45.7,-5.8 L44.9,-8.0 L43.9,-10.1 L42.7,-12.1 L41.3,-14.1 L39.7,-16.0 L38.0,-17.7 L36.1,-19.4 L34.0,-20.9 L31.8,-22.4 L29.5,-23.7 L27.0,-24.8 L24.4,-25.8 L21.7,-26.7 L18.9,-27.4 L16.1,-28.0Z"/></clipPath>
<clipPath id="cA_0c"><path d="M30.7,-51.1 L35.0,-49.9 L39.1,-48.5 L43.0,-46.9 L46.8,-45.1 L50.5,-43.1 L53.9,-40.9 L57.2,-38.5 L60.2,-36.0 L63.0,-33.3 L65.6,-30.4 L67.9,-27.4 L70.0,-24.3 L71.8,-21.0 L73.4,-17.7 L74.7,-14.3 L75.7,-10.7 L76.4,-7.2 L76.8,-3.5 L77.0,0.1 L76.9,3.8 L76.5,7.5 L75.8,11.2 L74.8,14.9 L73.5,18.5 L72.0,22.1 L70.2,25.7 L68.1,29.1 L65.8,32.5 L42.8,17.3 L43.8,15.5 L44.6,13.7 L45.3,11.9 L45.9,10.1 L46.4,8.2 L46.7,6.4 L46.9,4.5 L47.0,2.7 L47.0,0.8 L46.8,-1.0 L46.5,-2.8 L46.1,-4.5 L45.6,-6.3 L44.9,-8.0 L44.1,-9.7 L43.2,-11.3 L42.2,-12.9 L41.1,-14.4 L39.8,-15.8 L38.5,-17.2 L37.1,-18.6 L35.5,-19.8 L33.9,-21.0 L32.1,-22.2 L30.3,-23.2 L28.4,-24.2 L26.5,-25.0 L24.4,-25.8Z"/></clipPath>
<clipPath id="cA_0d"><path d="M32.6,-42.3 L36.8,-41.1 L40.9,-39.7 L44.9,-38.1 L48.7,-36.3 L52.3,-34.3 L55.7,-32.1 L59.0,-29.7 L62.0,-27.1 L64.8,-24.4 L67.4,-21.6 L69.7,-18.6 L71.8,-15.5 L73.7,-12.2 L75.2,-8.9 L76.5,-5.4 L77.5,-1.9 L78.2,1.6 L78.7,5.3 L78.8,8.9 L78.7,12.6 L78.3,16.3 L77.6,20.0 L76.6,23.7 L75.4,27.3 L73.8,30.9 L72.0,34.5 L70.0,37.9 L67.6,41.3 L44.7,26.1 L45.6,24.3 L46.4,22.5 L47.2,20.7 L47.7,18.9 L48.2,17.0 L48.5,15.2 L48.8,13.3 L48.9,11.5 L48.8,9.7 L48.6,7.8 L48.4,6.0 L47.9,4.3 L47.4,2.5 L46.7,0.8 L46.0,-0.8 L45.1,-2.5 L44.0,-4.0 L42.9,-5.6 L41.7,-7.0 L40.3,-8.4 L38.9,-9.8 L37.3,-11.0 L35.7,-12.2 L34.0,-13.3 L32.2,-14.4 L30.3,-15.3 L28.3,-16.2 L26.2,-17.0Z"/></clipPath>
<g clip-path="url(#cA_0a)">
<path d="M20.9,-59.2 L25.9,-58.3 L30.8,-57.1 L35.6,-55.7 L40.2,-53.9 L44.6,-51.9 L48.7,-49.7 L52.7,-47.2 L56.3,-44.5 L59.7,-41.5 L62.8,-38.4 L65.6,-35.0 L68.1,-31.5 L70.3,-27.9 L72.1,-24.1 L73.5,-20.1 L74.6,-16.1 L75.3,-12.0 L75.6,-7.9 L75.6,-3.7 L75.2,0.5 L74.5,4.8 L73.3,8.9 L71.8,13.1 L70.0,17.2 L67.8,21.2 L65.3,25.1 L62.4,28.8 L59.3,32.4 L36.8,17.4 L38.6,15.3 L40.1,13.1 L41.5,10.9 L42.7,8.7 L43.7,6.4 L44.5,4.0 L45.1,1.7 L45.5,-0.7 L45.7,-3.0 L45.7,-5.3 L45.4,-7.7 L45.0,-9.9 L44.4,-12.2 L43.6,-14.4 L42.6,-16.5 L41.4,-18.5 L40.0,-20.5 L38.4,-22.3 L36.7,-24.1 L34.7,-25.8 L32.7,-27.3 L30.5,-28.7 L28.1,-30.0 L25.7,-31.2 L23.1,-32.2 L20.4,-33.1 L17.6,-33.8 L14.7,-34.4Z" fill="rgb(10,120,10)"/>
<path d="M20.9,-59.2 L25.9,-58.3 L27.2,-51.9 L22.2,-52.8Z" fill="rgb(10,159,10)" stroke="rgb(10,159,10)" stroke-width=".5"/>
<path d="M25.9,-58.3 L30.8,-57.1 L32.1,-50.8 L27.2,-51.9Z" fill="rgb(10,155,10)" stroke="rgb(10,155,10)" stroke-width=".5"/>
<path d="M30.8,-57.1 L35.6,-55.7 L36.9,-49.3 L32.1,-50.8Z" fill="rgb(10,150,10)" stroke="rgb(10,150,10)" stroke-width=".5"/>
<path d="M35.6,-55.7 L40.2,-53.9 L41.5,-47.6 L36.9,-49.3Z" fill="rgb(9,144,9)" stroke="rgb(9,144,9)" stroke-width=".5"/>
<path d="M40.2,-53.9 L44.6,-51.9 L45.9,-45.6 L41.5,-47.6Z" fill="rgb(9,138,9)" stroke="rgb(9,138,9)" stroke-width=".5"/>
<path d="M44.6,-51.9 L48.7,-49.7 L50.1,-43.3 L45.9,-45.6Z" fill="rgb(9,131,9)" stroke="rgb(9,131,9)" stroke-width=".5"/>
<path d="M48.7,-49.7 L52.7,-47.2 L54.0,-40.8 L50.1,-43.3Z" fill="rgb(9,124,9)" stroke="rgb(9,124,9)" stroke-width=".5"/>
<path d="M52.7,-47.2 L56.3,-44.5 L57.7,-38.1 L54.0,-40.8Z" fill="rgb(9,116,9)" stroke="rgb(9,116,9)" stroke-width=".5"/>
<path d="M56.3,-44.5 L59.7,-41.5 L61.1,-35.2 L57.7,-38.1Z" fill="rgb(9,108,9)" stroke="rgb(9,108,9)" stroke-width=".5"/>
<path d="M59.7,-41.5 L62.8,-38.4 L64.2,-32.0 L61.1,-35.2Z" fill="rgb(9,99,9)" stroke="rgb(9,99,9)" stroke-width=".5"/>
<path d="M62.8,-38.4 L65.6,-35.0 L67.0,-28.7 L64.2,-32.0Z" fill="rgb(8,91,8)" stroke="rgb(8,91,8)" stroke-width=".5"/>
<path d="M65.6,-35.0 L68.1,-31.5 L69.4,-25.2 L67.0,-28.7Z" fill="rgb(8,82,8)" stroke="rgb(8,82,8)" stroke-width=".5"/>
<path d="M68.1,-31.5 L70.3,-27.9 L71.6,-21.5 L69.4,-25.2Z" fill="rgb(8,72,8)" stroke="rgb(8,72,8)" stroke-width=".5"/>
<path d="M70.3,-27.9 L72.1,-24.1 L73.4,-17.7 L71.6,-21.5Z" fill="rgb(8,63,8)" stroke="rgb(8,63,8)" stroke-width=".5"/>
<path d="M72.1,-24.1 L73.5,-20.1 L74.8,-13.8 L73.4,-17.7Z" fill="rgb(8,53,8)" stroke="rgb(8,53,8)" stroke-width=".5"/>
<path d="M73.5,-20.1 L74.6,-16.1 L75.9,-9.8 L74.8,-13.8Z" fill="rgb(8,44,8)" stroke="rgb(8,44,8)" stroke-width=".5"/>
<path d="M36.8,17.4 L38.6,15.3 L39.9,21.7 L38.2,23.7Z" fill="rgb(9,133,9)" stroke="rgb(9,133,9)" stroke-width=".5"/>
<path d="M38.6,15.3 L40.1,13.1 L41.5,19.5 L39.9,21.7Z" fill="rgb(9,127,9)" stroke="rgb(9,127,9)" stroke-width=".5"/>
<path d="M40.1,13.1 L41.5,10.9 L42.8,17.3 L41.5,19.5Z" fill="rgb(9,119,9)" stroke="rgb(9,119,9)" stroke-width=".5"/>
<path d="M41.5,10.9 L42.7,8.7 L44.0,15.0 L42.8,17.3Z" fill="rgb(9,112,9)" stroke="rgb(9,112,9)" stroke-width=".5"/>
<path d="M42.7,8.7 L43.7,6.4 L45.0,12.7 L44.0,15.0Z" fill="rgb(9,104,9)" stroke="rgb(9,104,9)" stroke-width=".5"/>
<path d="M43.7,6.4 L44.5,4.0 L45.8,10.4 L45.0,12.7Z" fill="rgb(9,95,9)" stroke="rgb(9,95,9)" stroke-width=".5"/>
<path d="M44.5,4.0 L45.1,1.7 L46.4,8.1 L45.8,10.4Z" fill="rgb(8,87,8)" stroke="rgb(8,87,8)" stroke-width=".5"/>
<path d="M45.1,1.7 L45.5,-0.7 L46.8,5.7 L46.4,8.1Z" fill="rgb(8,78,8)" stroke="rgb(8,78,8)" stroke-width=".5"/>
<path d="M45.5,-0.7 L45.7,-3.0 L47.0,3.4 L46.8,5.7Z" fill="rgb(8,68,8)" stroke="rgb(8,68,8)" stroke-width=".5"/>
<path d="M45.7,-3.0 L45.7,-5.3 L47.0,1.0 L47.0,3.4Z" fill="rgb(8,59,8)" stroke="rgb(8,59,8)" stroke-width=".5"/>
<path d="M45.7,-5.3 L45.4,-7.7 L46.8,-1.3 L47.0,1.0Z" fill="rgb(8,50,8)" stroke="rgb(8,50,8)" stroke-width=".5"/>
<path d="M45.4,-7.7 L45.0,-9.9 L46.4,-3.6 L46.8,-1.3Z" fill="rgb(8,40,8)" stroke="rgb(8,40,8)" stroke-width=".5"/>
<path d="M14.7,-34.4 L20.9,-59.2 L22.2,-52.8 L16.1,-28.0Z" fill="rgb(8,86,8)" stroke="rgb(8,86,8)" stroke-width=".5"/>
<g clip-path="url(#cA_0b)">
<path d="M22.2,-52.8 L27.2,-51.9 L32.1,-50.8 L36.9,-49.3 L41.5,-47.6 L45.9,-45.6 L50.1,-43.3 L54.0,-40.8 L57.7,-38.1 L61.1,-35.2 L64.2,-32.0 L67.0,-28.7 L69.4,-25.2 L71.6,-21.5 L73.4,-17.7 L74.8,-13.8 L75.9,-9.8 L76.6,-5.7 L77.0,-1.5 L76.9,2.7 L76.5,6.9 L75.8,11.1 L74.6,15.3 L73.2,19.5 L71.3,23.5 L69.1,27.5 L66.6,31.4 L63.8,35.2 L60.6,38.8 L38.2,23.7 L39.9,21.7 L41.5,19.5 L42.8,17.3 L44.0,15.0 L45.0,12.7 L45.8,10.4 L46.4,8.1 L46.8,5.7 L47.0,3.4 L47.0,1.0 L46.8,-1.3 L46.4,-3.6 L45.7,-5.8 L44.9,-8.0 L43.9,-10.1 L42.7,-12.1 L41.3,-14.1 L39.7,-16.0 L38.0,-17.7 L36.1,-19.4 L34.0,-20.9 L31.8,-22.4 L29.5,-23.7 L27.0,-24.8 L24.4,-25.8 L21.7,-26.7 L18.9,-27.4 L16.1,-28.0Z" fill="rgb(11,210,11)" stroke="#0a1a0a" stroke-width="1.2"/>
<g clip-path="url(#cA_0c)">
<path d="M30.7,-51.1 L35.0,-49.9 L39.1,-48.5 L43.0,-46.9 L46.8,-45.1 L50.5,-43.1 L53.9,-40.9 L57.2,-38.5 L60.2,-36.0 L63.0,-33.3 L65.6,-30.4 L67.9,-27.4 L70.0,-24.3 L71.8,-21.0 L73.4,-17.7 L74.7,-14.3 L75.7,-10.7 L76.4,-7.2 L76.8,-3.5 L77.0,0.1 L76.9,3.8 L76.5,7.5 L75.8,11.2 L74.8,14.9 L73.5,18.5 L72.0,22.1 L70.2,25.7 L68.1,29.1 L65.8,32.5 L42.8,17.3 L43.8,15.5 L44.6,13.7 L45.3,11.9 L45.9,10.1 L46.4,8.2 L46.7,6.4 L46.9,4.5 L47.0,2.7 L47.0,0.8 L46.8,-1.0 L46.5,-2.8 L46.1,-4.5 L45.6,-6.3 L44.9,-8.0 L44.1,-9.7 L43.2,-11.3 L42.2,-12.9 L41.1,-14.4 L39.8,-15.8 L38.5,-17.2 L37.1,-18.6 L35.5,-19.8 L33.9,-21.0 L32.1,-22.2 L30.3,-23.2 L28.4,-24.2 L26.5,-25.0 L24.4,-25.8Z" fill="rgb(10,120,10)"/>
<path d="M30.7,-51.1 L35.0,-49.9 L36.8,-41.1 L32.6,-42.3Z" fill="rgb(10,151,10)" stroke="rgb(10,151,10)" stroke-width=".5"/>
<path d="M35.0,-49.9 L39.1,-48.5 L40.9,-39.7 L36.8,-41.1Z" fill="rgb(9,147,9)" stroke="rgb(9,147,9)" stroke-width=".5"/>
<path d="M39.1,-48.5 L43.0,-46.9 L44.9,-38.1 L40.9,-39.7Z" fill="rgb(9,141,9)" stroke="rgb(9,141,9)" stroke-width=".5"/>
<path d="M43.0,-46.9 L46.8,-45.1 L48.7,-36.3 L44.9,-38.1Z" fill="rgb(9,136,9)" stroke="rgb(9,136,9)" stroke-width=".5"/>
<path d="M46.8,-45.1 L50.5,-43.1 L52.3,-34.3 L48.7,-36.3Z" fill="rgb(9,130,9)" stroke="rgb(9,130,9)" stroke-width=".5"/>
<path d="M50.5,-43.1 L53.9,-40.9 L55.7,-32.1 L52.3,-34.3Z" fill="rgb(9,123,9)" stroke="rgb(9,123,9)" stroke-width=".5"/>
<path d="M53.9,-40.9 L57.2,-38.5 L59.0,-29.7 L55.7,-32.1Z" fill="rgb(9,117,9)" stroke="rgb(9,117,9)" stroke-width=".5"/>
<path d="M57.2,-38.5 L60.2,-36.0 L62.0,-27.1 L59.0,-29.7Z" fill="rgb(9,109,9)" stroke="rgb(9,109,9)" stroke-width=".5"/>
<path d="M60.2,-36.0 L63.0,-33.3 L64.8,-24.4 L62.0,-27.1Z" fill="rgb(9,102,9)" stroke="rgb(9,102,9)" stroke-width=".5"/>
<path d="M63.0,-33.3 L65.6,-30.4 L67.4,-21.6 L64.8,-24.4Z" fill="rgb(9,95,9)" stroke="rgb(9,95,9)" stroke-width=".5"/>
<path d="M65.6,-30.4 L67.9,-27.4 L69.7,-18.6 L67.4,-21.6Z" fill="rgb(8,87,8)" stroke="rgb(8,87,8)" stroke-width=".5"/>
<path d="M67.9,-27.4 L70.0,-24.3 L71.8,-15.5 L69.7,-18.6Z" fill="rgb(8,79,8)" stroke="rgb(8,79,8)" stroke-width=".5"/>
<path d="M70.0,-24.3 L71.8,-21.0 L73.7,-12.2 L71.8,-15.5Z" fill="rgb(8,71,8)" stroke="rgb(8,71,8)" stroke-width=".5"/>
<path d="M71.8,-21.0 L73.4,-17.7 L75.2,-8.9 L73.7,-12.2Z" fill="rgb(8,62,8)" stroke="rgb(8,62,8)" stroke-width=".5"/>
<path d="M73.4,-17.7 L74.7,-14.3 L76.5,-5.4 L75.2,-8.9Z" fill="rgb(8,54,8)" stroke="rgb(8,54,8)" stroke-width=".5"/>
<path d="M74.7,-14.3 L75.7,-10.7 L77.5,-1.9 L76.5,-5.4Z" fill="rgb(8,45,8)" stroke="rgb(8,45,8)" stroke-width=".5"/>
<path d="M42.8,17.3 L43.8,15.5 L45.6,24.3 L44.7,26.1Z" fill="rgb(9,113,9)" stroke="rgb(9,113,9)" stroke-width=".5"/>
<path d="M43.8,15.5 L44.6,13.7 L46.4,22.5 L45.6,24.3Z" fill="rgb(9,106,9)" stroke="rgb(9,106,9)" stroke-width=".5"/>
<path d="M44.6,13.7 L45.3,11.9 L47.2,20.7 L46.4,22.5Z" fill="rgb(9,100,9)" stroke="rgb(9,100,9)" stroke-width=".5"/>
<path d="M45.3,11.9 L45.9,10.1 L47.7,18.9 L47.2,20.7Z" fill="rgb(9,93,9)" stroke="rgb(9,93,9)" stroke-width=".5"/>
<path d="M45.9,10.1 L46.4,8.2 L48.2,17.0 L47.7,18.9Z" fill="rgb(8,86,8)" stroke="rgb(8,86,8)" stroke-width=".5"/>
<path d="M46.4,8.2 L46.7,6.4 L48.5,15.2 L48.2,17.0Z" fill="rgb(8,79,8)" stroke="rgb(8,79,8)" stroke-width=".5"/>
<path d="M46.7,6.4 L46.9,4.5 L48.8,13.3 L48.5,15.2Z" fill="rgb(8,72,8)" stroke="rgb(8,72,8)" stroke-width=".5"/>
<path d="M46.9,4.5 L47.0,2.7 L48.9,11.5 L48.8,13.3Z" fill="rgb(8,65,8)" stroke="rgb(8,65,8)" stroke-width=".5"/>
<path d="M47.0,2.7 L47.0,0.8 L48.8,9.7 L48.9,11.5Z" fill="rgb(8,57,8)" stroke="rgb(8,57,8)" stroke-width=".5"/>
<path d="M47.0,0.8 L46.8,-1.0 L48.6,7.8 L48.8,9.7Z" fill="rgb(8,50,8)" stroke="rgb(8,50,8)" stroke-width=".5"/>
<path d="M46.8,-1.0 L46.5,-2.8 L48.4,6.0 L48.6,7.8Z" fill="rgb(8,42,8)" stroke="rgb(8,42,8)" stroke-width=".5"/>
<path d="M24.4,-25.8 L30.7,-51.1 L32.6,-42.3 L26.2,-17.0Z" fill="rgb(8,86,8)" stroke="rgb(8,86,8)" stroke-width=".5"/>
<path d="M30.7,-51.1 L35.0,-49.9 L39.1,-48.5 L43.0,-46.9 L46.8,-45.1 L50.5,-43.1 L53.9,-40.9 L57.2,-38.5 L60.2,-36.0 L63.0,-33.3 L65.6,-30.4 L67.9,-27.4 L70.0,-24.3 L71.8,-21.0 L73.4,-17.7 L74.7,-14.3 L75.7,-10.7 L76.4,-7.2 L76.8,-3.5 L77.0,0.1 L76.9,3.8 L76.5,7.5 L75.8,11.2 L74.8,14.9 L73.5,18.5 L72.0,22.1 L70.2,25.7 L68.1,29.1 L65.8,32.5 L42.8,17.3 L43.8,15.5 L44.6,13.7 L45.3,11.9 L45.9,10.1 L46.4,8.2 L46.7,6.4 L46.9,4.5 L47.0,2.7 L47.0,0.8 L46.8,-1.0 L46.5,-2.8 L46.1,-4.5 L45.6,-6.3 L44.9,-8.0 L44.1,-9.7 L43.2,-11.3 L42.2,-12.9 L41.1,-14.4 L39.8,-15.8 L38.5,-17.2 L37.1,-18.6 L35.5,-19.8 L33.9,-21.0 L32.1,-22.2 L30.3,-23.2 L28.4,-24.2 L26.5,-25.0 L24.4,-25.8Z" fill="none" stroke="#0a1a0a" stroke-width="1.2"/>
<g clip-path="url(#cA_0d)">
<rect x="174" y="49" width="606" height="370" transform="translate(-356.5,-207.6)" fill="url(#bgfill)"/>
<path d="M32.6,-42.3 L36.8,-41.1 L40.9,-39.7 L44.9,-38.1 L48.7,-36.3 L52.3,-34.3 L55.7,-32.1 L59.0,-29.7 L62.0,-27.1 L64.8,-24.4 L67.4,-21.6 L69.7,-18.6 L71.8,-15.5 L73.7,-12.2 L75.2,-8.9 L76.5,-5.4 L77.5,-1.9 L78.2,1.6 L78.7,5.3 L78.8,8.9 L78.7,12.6 L78.3,16.3 L77.6,20.0 L76.6,23.7 L75.4,27.3 L73.8,30.9 L72.0,34.5 L70.0,37.9 L67.6,41.3 L44.7,26.1 L45.6,24.3 L46.4,22.5 L47.2,20.7 L47.7,18.9 L48.2,17.0 L48.5,15.2 L48.8,13.3 L48.9,11.5 L48.8,9.7 L48.6,7.8 L48.4,6.0 L47.9,4.3 L47.4,2.5 L46.7,0.8 L46.0,-0.8 L45.1,-2.5 L44.0,-4.0 L42.9,-5.6 L41.7,-7.0 L40.3,-8.4 L38.9,-9.8 L37.3,-11.0 L35.7,-12.2 L34.0,-13.3 L32.2,-14.4 L30.3,-15.3 L28.3,-16.2 L26.2,-17.0Z" fill="none" stroke="#0a1a0a" stroke-width="1.2"/>
</g></g></g>
</g>
<path d="M20.9,-59.2 L25.9,-58.3 L30.8,-57.1 L35.6,-55.7 L40.2,-53.9 L44.6,-51.9 L48.7,-49.7 L52.7,-47.2 L56.3,-44.5 L59.7,-41.5 L62.8,-38.4 L65.6,-35.0 L68.1,-31.5 L70.3,-27.9 L72.1,-24.1 L73.5,-20.1 L74.6,-16.1 L75.3,-12.0 L75.6,-7.9 L75.6,-3.7 L75.2,0.5 L74.5,4.8 L73.3,8.9 L71.8,13.1 L70.0,17.2 L67.8,21.2 L65.3,25.1 L62.4,28.8 L59.3,32.4 L36.8,17.4 L38.6,15.3 L40.1,13.1 L41.5,10.9 L42.7,8.7 L43.7,6.4 L44.5,4.0 L45.1,1.7 L45.5,-0.7 L45.7,-3.0 L45.7,-5.3 L45.4,-7.7 L45.0,-9.9 L44.4,-12.2 L43.6,-14.4 L42.6,-16.5 L41.4,-18.5 L40.0,-20.5 L38.4,-22.3 L36.7,-24.1 L34.7,-25.8 L32.7,-27.3 L30.5,-28.7 L28.1,-30.0 L25.7,-31.2 L23.1,-32.2 L20.4,-33.1 L17.6,-33.8 L14.7,-34.4Z" fill="none" stroke="#0a1a0a" stroke-width=".8"/>
<clipPath id="cA_1a"><path d="M52.6,38.8 L48.6,42.0 L44.5,44.9 L40.1,47.6 L35.5,50.0 L30.7,52.2 L25.8,54.2 L20.7,55.9 L15.6,57.3 L10.4,58.5 L5.1,59.3 L-0.2,59.9 L-5.5,60.1 L-10.8,60.1 L-16.0,59.8 L-21.1,59.2 L-26.2,58.2 L-31.1,57.1 L-35.8,55.6 L-40.4,53.8 L-44.8,51.8 L-49.0,49.6 L-52.9,47.0 L-56.5,44.3 L-59.9,41.3 L-63.0,38.2 L-65.8,34.8 L-68.3,31.3 L-70.4,27.6 L-41.8,17.8 L-40.5,19.8 L-39.0,21.7 L-37.3,23.5 L-35.5,25.2 L-33.5,26.8 L-31.3,28.2 L-29.0,29.6 L-26.6,30.8 L-24.0,31.8 L-21.4,32.8 L-18.6,33.5 L-15.8,34.2 L-12.9,34.6 L-9.9,35.0 L-6.9,35.1 L-3.9,35.1 L-0.8,35.0 L2.2,34.7 L5.3,34.2 L8.3,33.6 L11.3,32.8 L14.3,31.9 L17.1,30.9 L19.9,29.7 L22.6,28.3 L25.2,26.9 L27.7,25.3 L30.1,23.6Z"/></clipPath>
<clipPath id="cA_1b"><path d="M53.9,45.2 L50.0,48.3 L45.8,51.2 L41.4,53.9 L36.8,56.4 L32.0,58.6 L27.1,60.6 L22.1,62.3 L16.9,63.7 L11.7,64.8 L6.4,65.7 L1.1,66.2 L-4.2,66.5 L-9.5,66.5 L-14.7,66.1 L-19.8,65.5 L-24.9,64.6 L-29.8,63.4 L-34.5,61.9 L-39.1,60.2 L-43.5,58.2 L-47.6,55.9 L-51.6,53.4 L-55.2,50.7 L-58.6,47.7 L-61.7,44.5 L-64.5,41.2 L-66.9,37.7 L-69.1,34.0 L-40.5,24.1 L-39.2,26.1 L-37.7,28.0 L-36.0,29.8 L-34.1,31.5 L-32.1,33.1 L-30.0,34.6 L-27.7,35.9 L-25.2,37.1 L-22.7,38.2 L-20.0,39.1 L-17.3,39.9 L-14.5,40.5 L-11.6,41.0 L-8.6,41.3 L-5.6,41.5 L-2.5,41.5 L0.5,41.4 L3.6,41.0 L6.6,40.6 L9.6,40.0 L12.6,39.2 L15.6,38.3 L18.4,37.2 L21.2,36.0 L24.0,34.7 L26.6,33.2 L29.1,31.7 L31.4,30.0Z"/></clipPath>
<clipPath id="cA_1c"><path d="M47.0,50.4 L43.2,52.9 L39.3,55.1 L35.2,57.2 L30.9,59.1 L26.6,60.8 L22.2,62.2 L17.7,63.5 L13.1,64.5 L8.5,65.4 L3.8,66.0 L-0.8,66.4 L-5.5,66.5 L-10.1,66.4 L-14.7,66.1 L-19.2,65.6 L-23.6,64.9 L-28.0,63.9 L-32.2,62.7 L-36.3,61.3 L-40.3,59.7 L-44.1,57.9 L-47.7,55.9 L-51.2,53.7 L-54.4,51.3 L-57.5,48.8 L-60.3,46.0 L-62.9,43.2 L-65.2,40.2 L-36.0,29.8 L-34.5,31.2 L-33.0,32.5 L-31.4,33.7 L-29.6,34.8 L-27.8,35.8 L-25.9,36.8 L-24.0,37.7 L-21.9,38.5 L-19.8,39.2 L-17.7,39.8 L-15.5,40.3 L-13.2,40.8 L-10.9,41.1 L-8.6,41.3 L-6.2,41.5 L-3.9,41.5 L-1.5,41.5 L0.9,41.3 L3.3,41.1 L5.7,40.7 L8.1,40.3 L10.5,39.8 L12.8,39.1 L15.1,38.4 L17.4,37.6 L19.6,36.7 L21.8,35.8 L23.9,34.7Z"/></clipPath>
<clipPath id="cA_1d"><path d="M48.8,59.2 L45.0,61.7 L41.1,63.9 L37.0,66.0 L32.8,67.9 L28.4,69.6 L24.0,71.0 L19.5,72.3 L14.9,73.4 L10.3,74.2 L5.7,74.8 L1.0,75.2 L-3.7,75.3 L-8.3,75.3 L-12.8,74.9 L-17.4,74.4 L-21.8,73.7 L-26.1,72.7 L-30.4,71.5 L-34.5,70.1 L-38.5,68.5 L-42.3,66.7 L-45.9,64.7 L-49.3,62.5 L-52.6,60.1 L-55.6,57.6 L-58.5,54.9 L-61.0,52.0 L-63.4,49.0 L-34.1,38.7 L-32.7,40.0 L-31.2,41.3 L-29.5,42.5 L-27.8,43.6 L-26.0,44.7 L-24.1,45.6 L-22.1,46.5 L-20.1,47.3 L-18.0,48.0 L-15.9,48.6 L-13.6,49.1 L-11.4,49.6 L-9.1,49.9 L-6.8,50.1 L-4.4,50.3 L-2.0,50.3 L0.4,50.3 L2.8,50.1 L5.2,49.9 L7.6,49.5 L10.0,49.1 L12.3,48.6 L14.7,47.9 L17.0,47.2 L19.2,46.4 L21.5,45.5 L23.6,44.6 L25.8,43.5Z"/></clipPath>
<g clip-path="url(#cA_1a)">
<path d="M52.6,38.8 L48.6,42.0 L44.5,44.9 L40.1,47.6 L35.5,50.0 L30.7,52.2 L25.8,54.2 L20.7,55.9 L15.6,57.3 L10.4,58.5 L5.1,59.3 L-0.2,59.9 L-5.5,60.1 L-10.8,60.1 L-16.0,59.8 L-21.1,59.2 L-26.2,58.2 L-31.1,57.1 L-35.8,55.6 L-40.4,53.8 L-44.8,51.8 L-49.0,49.6 L-52.9,47.0 L-56.5,44.3 L-59.9,41.3 L-63.0,38.2 L-65.8,34.8 L-68.3,31.3 L-70.4,27.6 L-41.8,17.8 L-40.5,19.8 L-39.0,21.7 L-37.3,23.5 L-35.5,25.2 L-33.5,26.8 L-31.3,28.2 L-29.0,29.6 L-26.6,30.8 L-24.0,31.8 L-21.4,32.8 L-18.6,33.5 L-15.8,34.2 L-12.9,34.6 L-9.9,35.0 L-6.9,35.1 L-3.9,35.1 L-0.8,35.0 L2.2,34.7 L5.3,34.2 L8.3,33.6 L11.3,32.8 L14.3,31.9 L17.1,30.9 L19.9,29.7 L22.6,28.3 L25.2,26.9 L27.7,25.3 L30.1,23.6Z" fill="rgb(10,120,10)"/>
<path d="M-70.4,27.6 L-41.8,17.8 L-40.5,24.1 L-69.1,34.0Z" fill="rgb(10,172,10)" stroke="rgb(10,172,10)" stroke-width=".5"/>
<path d="M-41.8,17.8 L-40.5,19.8 L-39.2,26.1 L-40.5,24.1Z" fill="rgb(8,79,8)" stroke="rgb(8,79,8)" stroke-width=".5"/>
<path d="M-40.5,19.8 L-39.0,21.7 L-37.7,28.0 L-39.2,26.1Z" fill="rgb(8,88,8)" stroke="rgb(8,88,8)" stroke-width=".5"/>
<path d="M-39.0,21.7 L-37.3,23.5 L-36.0,29.8 L-37.7,28.0Z" fill="rgb(9,96,9)" stroke="rgb(9,96,9)" stroke-width=".5"/>
<path d="M-37.3,23.5 L-35.5,25.2 L-34.1,31.5 L-36.0,29.8Z" fill="rgb(9,105,9)" stroke="rgb(9,105,9)" stroke-width=".5"/>
<path d="M-35.5,25.2 L-33.5,26.8 L-32.1,33.1 L-34.1,31.5Z" fill="rgb(9,113,9)" stroke="rgb(9,113,9)" stroke-width=".5"/>
<path d="M-33.5,26.8 L-31.3,28.2 L-30.0,34.6 L-32.1,33.1Z" fill="rgb(9,120,9)" stroke="rgb(9,120,9)" stroke-width=".5"/>
<path d="M-31.3,28.2 L-29.0,29.6 L-27.7,35.9 L-30.0,34.6Z" fill="rgb(9,127,9)" stroke="rgb(9,127,9)" stroke-width=".5"/>
<path d="M-29.0,29.6 L-26.6,30.8 L-25.2,37.1 L-27.7,35.9Z" fill="rgb(9,134,9)" stroke="rgb(9,134,9)" stroke-width=".5"/>
<path d="M-26.6,30.8 L-24.0,31.8 L-22.7,38.2 L-25.2,37.1Z" fill="rgb(9,140,9)" stroke="rgb(9,140,9)" stroke-width=".5"/>
<path d="M-24.0,31.8 L-21.4,32.8 L-20.0,39.1 L-22.7,38.2Z" fill="rgb(9,146,9)" stroke="rgb(9,146,9)" stroke-width=".5"/>
<path d="M-21.4,32.8 L-18.6,33.5 L-17.3,39.9 L-20.0,39.1Z" fill="rgb(10,151,10)" stroke="rgb(10,151,10)" stroke-width=".5"/>
<path d="M-18.6,33.5 L-15.8,34.2 L-14.5,40.5 L-17.3,39.9Z" fill="rgb(10,156,10)" stroke="rgb(10,156,10)" stroke-width=".5"/>
<path d="M-15.8,34.2 L-12.9,34.6 L-11.6,41.0 L-14.5,40.5Z" fill="rgb(10,160,10)" stroke="rgb(10,160,10)" stroke-width=".5"/>
<path d="M-12.9,34.6 L-9.9,35.0 L-8.6,41.3 L-11.6,41.0Z" fill="rgb(10,164,10)" stroke="rgb(10,164,10)" stroke-width=".5"/>
<path d="M-9.9,35.0 L-6.9,35.1 L-5.6,41.5 L-8.6,41.3Z" fill="rgb(10,167,10)" stroke="rgb(10,167,10)" stroke-width=".5"/>
<path d="M-6.9,35.1 L-3.9,35.1 L-2.5,41.5 L-5.6,41.5Z" fill="rgb(10,170,10)" stroke="rgb(10,170,10)" stroke-width=".5"/>
<path d="M-3.9,35.1 L-0.8,35.0 L0.5,41.4 L-2.5,41.5Z" fill="rgb(10,172,10)" stroke="rgb(10,172,10)" stroke-width=".5"/>
<path d="M-0.8,35.0 L2.2,34.7 L3.6,41.0 L0.5,41.4Z" fill="rgb(10,173,10)" stroke="rgb(10,173,10)" stroke-width=".5"/>
<path d="M2.2,34.7 L5.3,34.2 L6.6,40.6 L3.6,41.0Z" fill="rgb(10,174,10)" stroke="rgb(10,174,10)" stroke-width=".5"/>
<path d="M5.3,34.2 L8.3,33.6 L9.6,40.0 L6.6,40.6Z" fill="rgb(10,174,10)" stroke="rgb(10,174,10)" stroke-width=".5"/>
<path d="M8.3,33.6 L11.3,32.8 L12.6,39.2 L9.6,40.0Z" fill="rgb(10,174,10)" stroke="rgb(10,174,10)" stroke-width=".5"/>
<path d="M11.3,32.8 L14.3,31.9 L15.6,38.3 L12.6,39.2Z" fill="rgb(10,173,10)" stroke="rgb(10,173,10)" stroke-width=".5"/>
<path d="M14.3,31.9 L17.1,30.9 L18.4,37.2 L15.6,38.3Z" fill="rgb(10,172,10)" stroke="rgb(10,172,10)" stroke-width=".5"/>
<path d="M17.1,30.9 L19.9,29.7 L21.2,36.0 L18.4,37.2Z" fill="rgb(10,170,10)" stroke="rgb(10,170,10)" stroke-width=".5"/>
<path d="M19.9,29.7 L22.6,28.3 L24.0,34.7 L21.2,36.0Z" fill="rgb(10,167,10)" stroke="rgb(10,167,10)" stroke-width=".5"/>
<path d="M22.6,28.3 L25.2,26.9 L26.6,33.2 L24.0,34.7Z" fill="rgb(10,164,10)" stroke="rgb(10,164,10)" stroke-width=".5"/>
<path d="M25.2,26.9 L27.7,25.3 L29.1,31.7 L26.6,33.2Z" fill="rgb(10,161,10)" stroke="rgb(10,161,10)" stroke-width=".5"/>
<path d="M27.7,25.3 L30.1,23.6 L31.4,30.0 L29.1,31.7Z" fill="rgb(10,157,10)" stroke="rgb(10,157,10)" stroke-width=".5"/>
<path d="M30.1,23.6 L52.6,38.8 L53.9,45.2 L31.4,30.0Z" fill="rgb(9,120,9)" stroke="rgb(9,120,9)" stroke-width=".5"/>
<g clip-path="url(#cA_1b)">
<path d="M53.9,45.2 L50.0,48.3 L45.8,51.2 L41.4,53.9 L36.8,56.4 L32.0,58.6 L27.1,60.6 L22.1,62.3 L16.9,63.7 L11.7,64.8 L6.4,65.7 L1.1,66.2 L-4.2,66.5 L-9.5,66.5 L-14.7,66.1 L-19.8,65.5 L-24.9,64.6 L-29.8,63.4 L-34.5,61.9 L-39.1,60.2 L-43.5,58.2 L-47.6,55.9 L-51.6,53.4 L-55.2,50.7 L-58.6,47.7 L-61.7,44.5 L-64.5,41.2 L-66.9,37.7 L-69.1,34.0 L-40.5,24.1 L-39.2,26.1 L-37.7,28.0 L-36.0,29.8 L-34.1,31.5 L-32.1,33.1 L-30.0,34.6 L-27.7,35.9 L-25.2,37.1 L-22.7,38.2 L-20.0,39.1 L-17.3,39.9 L-14.5,40.5 L-11.6,41.0 L-8.6,41.3 L-5.6,41.5 L-2.5,41.5 L0.5,41.4 L3.6,41.0 L6.6,40.6 L9.6,40.0 L12.6,39.2 L15.6,38.3 L18.4,37.2 L21.2,36.0 L24.0,34.7 L26.6,33.2 L29.1,31.7 L31.4,30.0Z" fill="rgb(11,210,11)" stroke="#0a1a0a" stroke-width="1.2"/>
<g clip-path="url(#cA_1c)">
<path d="M47.0,50.4 L43.2,52.9 L39.3,55.1 L35.2,57.2 L30.9,59.1 L26.6,60.8 L22.2,62.2 L17.7,63.5 L13.1,64.5 L8.5,65.4 L3.8,66.0 L-0.8,66.4 L-5.5,66.5 L-10.1,66.4 L-14.7,66.1 L-19.2,65.6 L-23.6,64.9 L-28.0,63.9 L-32.2,62.7 L-36.3,61.3 L-40.3,59.7 L-44.1,57.9 L-47.7,55.9 L-51.2,53.7 L-54.4,51.3 L-57.5,48.8 L-60.3,46.0 L-62.9,43.2 L-65.2,40.2 L-36.0,29.8 L-34.5,31.2 L-33.0,32.5 L-31.4,33.7 L-29.6,34.8 L-27.8,35.8 L-25.9,36.8 L-24.0,37.7 L-21.9,38.5 L-19.8,39.2 L-17.7,39.8 L-15.5,40.3 L-13.2,40.8 L-10.9,41.1 L-8.6,41.3 L-6.2,41.5 L-3.9,41.5 L-1.5,41.5 L0.9,41.3 L3.3,41.1 L5.7,40.7 L8.1,40.3 L10.5,39.8 L12.8,39.1 L15.1,38.4 L17.4,37.6 L19.6,36.7 L21.8,35.8 L23.9,34.7Z" fill="rgb(10,120,10)"/>
<path d="M-65.2,40.2 L-36.0,29.8 L-34.1,38.7 L-63.4,49.0Z" fill="rgb(10,172,10)" stroke="rgb(10,172,10)" stroke-width=".5"/>
<path d="M-36.0,29.8 L-34.5,31.2 L-32.7,40.0 L-34.1,38.7Z" fill="rgb(9,104,9)" stroke="rgb(9,104,9)" stroke-width=".5"/>
<path d="M-34.5,31.2 L-33.0,32.5 L-31.2,41.3 L-32.7,40.0Z" fill="rgb(9,110,9)" stroke="rgb(9,110,9)" stroke-width=".5"/>
<path d="M-33.0,32.5 L-31.4,33.7 L-29.5,42.5 L-31.2,41.3Z" fill="rgb(9,116,9)" stroke="rgb(9,116,9)" stroke-width=".5"/>
<path d="M-31.4,33.7 L-29.6,34.8 L-27.8,43.6 L-29.5,42.5Z" fill="rgb(9,122,9)" stroke="rgb(9,122,9)" stroke-width=".5"/>
<path d="M-29.6,34.8 L-27.8,35.8 L-26.0,44.7 L-27.8,43.6Z" fill="rgb(9,128,9)" stroke="rgb(9,128,9)" stroke-width=".5"/>
<path d="M-27.8,35.8 L-25.9,36.8 L-24.1,45.6 L-26.0,44.7Z" fill="rgb(9,133,9)" stroke="rgb(9,133,9)" stroke-width=".5"/>
<path d="M-25.9,36.8 L-24.0,37.7 L-22.1,46.5 L-24.1,45.6Z" fill="rgb(9,138,9)" stroke="rgb(9,138,9)" stroke-width=".5"/>
<path d="M-24.0,37.7 L-21.9,38.5 L-20.1,47.3 L-22.1,46.5Z" fill="rgb(9,143,9)" stroke="rgb(9,143,9)" stroke-width=".5"/>
<path d="M-21.9,38.5 L-19.8,39.2 L-18.0,48.0 L-20.1,47.3Z" fill="rgb(9,147,9)" stroke="rgb(9,147,9)" stroke-width=".5"/>
<path d="M-19.8,39.2 L-17.7,39.8 L-15.9,48.6 L-18.0,48.0Z" fill="rgb(10,151,10)" stroke="rgb(10,151,10)" stroke-width=".5"/>
<path d="M-17.7,39.8 L-15.5,40.3 L-13.6,49.1 L-15.9,48.6Z" fill="rgb(10,155,10)" stroke="rgb(10,155,10)" stroke-width=".5"/>
<path d="M-15.5,40.3 L-13.2,40.8 L-11.4,49.6 L-13.6,49.1Z" fill="rgb(10,158,10)" stroke="rgb(10,158,10)" stroke-width=".5"/>
<path d="M-13.2,40.8 L-10.9,41.1 L-9.1,49.9 L-11.4,49.6Z" fill="rgb(10,162,10)" stroke="rgb(10,162,10)" stroke-width=".5"/>
<path d="M-10.9,41.1 L-8.6,41.3 L-6.8,50.1 L-9.1,49.9Z" fill="rgb(10,164,10)" stroke="rgb(10,164,10)" stroke-width=".5"/>
<path d="M-8.6,41.3 L-6.2,41.5 L-4.4,50.3 L-6.8,50.1Z" fill="rgb(10,167,10)" stroke="rgb(10,167,10)" stroke-width=".5"/>
<path d="M-6.2,41.5 L-3.9,41.5 L-2.0,50.3 L-4.4,50.3Z" fill="rgb(10,169,10)" stroke="rgb(10,169,10)" stroke-width=".5"/>
<path d="M-3.9,41.5 L-1.5,41.5 L0.4,50.3 L-2.0,50.3Z" fill="rgb(10,171,10)" stroke="rgb(10,171,10)" stroke-width=".5"/>
<path d="M-1.5,41.5 L0.9,41.3 L2.8,50.1 L0.4,50.3Z" fill="rgb(10,172,10)" stroke="rgb(10,172,10)" stroke-width=".5"/>
<path d="M0.9,41.3 L3.3,41.1 L5.2,49.9 L2.8,50.1Z" fill="rgb(10,173,10)" stroke="rgb(10,173,10)" stroke-width=".5"/>
<path d="M3.3,41.1 L5.7,40.7 L7.6,49.5 L5.2,49.9Z" fill="rgb(10,174,10)" stroke="rgb(10,174,10)" stroke-width=".5"/>
<path d="M5.7,40.7 L8.1,40.3 L10.0,49.1 L7.6,49.5Z" fill="rgb(10,174,10)" stroke="rgb(10,174,10)" stroke-width=".5"/>
<path d="M8.1,40.3 L10.5,39.8 L12.3,48.6 L10.0,49.1Z" fill="rgb(10,174,10)" stroke="rgb(10,174,10)" stroke-width=".5"/>
<path d="M10.5,39.8 L12.8,39.1 L14.7,47.9 L12.3,48.6Z" fill="rgb(10,174,10)" stroke="rgb(10,174,10)" stroke-width=".5"/>
<path d="M12.8,39.1 L15.1,38.4 L17.0,47.2 L14.7,47.9Z" fill="rgb(10,173,10)" stroke="rgb(10,173,10)" stroke-width=".5"/>
<path d="M15.1,38.4 L17.4,37.6 L19.2,46.4 L17.0,47.2Z" fill="rgb(10,172,10)" stroke="rgb(10,172,10)" stroke-width=".5"/>
<path d="M17.4,37.6 L19.6,36.7 L21.5,45.5 L19.2,46.4Z" fill="rgb(10,171,10)" stroke="rgb(10,171,10)" stroke-width=".5"/>
<path d="M19.6,36.7 L21.8,35.8 L23.6,44.6 L21.5,45.5Z" fill="rgb(10,169,10)" stroke="rgb(10,169,10)" stroke-width=".5"/>
<path d="M21.8,35.8 L23.9,34.7 L25.8,43.5 L23.6,44.6Z" fill="rgb(10,167,10)" stroke="rgb(10,167,10)" stroke-width=".5"/>
<path d="M23.9,34.7 L47.0,50.4 L48.8,59.2 L25.8,43.5Z" fill="rgb(9,120,9)" stroke="rgb(9,120,9)" stroke-width=".5"/>
<path d="M47.0,50.4 L43.2,52.9 L39.3,55.1 L35.2,57.2 L30.9,59.1 L26.6,60.8 L22.2,62.2 L17.7,63.5 L13.1,64.5 L8.5,65.4 L3.8,66.0 L-0.8,66.4 L-5.5,66.5 L-10.1,66.4 L-14.7,66.1 L-19.2,65.6 L-23.6,64.9 L-28.0,63.9 L-32.2,62.7 L-36.3,61.3 L-40.3,59.7 L-44.1,57.9 L-47.7,55.9 L-51.2,53.7 L-54.4,51.3 L-57.5,48.8 L-60.3,46.0 L-62.9,43.2 L-65.2,40.2 L-36.0,29.8 L-34.5,31.2 L-33.0,32.5 L-31.4,33.7 L-29.6,34.8 L-27.8,35.8 L-25.9,36.8 L-24.0,37.7 L-21.9,38.5 L-19.8,39.2 L-17.7,39.8 L-15.5,40.3 L-13.2,40.8 L-10.9,41.1 L-8.6,41.3 L-6.2,41.5 L-3.9,41.5 L-1.5,41.5 L0.9,41.3 L3.3,41.1 L5.7,40.7 L8.1,40.3 L10.5,39.8 L12.8,39.1 L15.1,38.4 L17.4,37.6 L19.6,36.7 L21.8,35.8 L23.9,34.7Z" fill="none" stroke="#0a1a0a" stroke-width="1.2"/>
<g clip-path="url(#cA_1d)">
<rect x="174" y="49" width="606" height="370" transform="translate(-356.5,-207.6)" fill="url(#bgfill)"/>
<path d="M48.8,59.2 L45.0,61.7 L41.1,63.9 L37.0,66.0 L32.8,67.9 L28.4,69.6 L24.0,71.0 L19.5,72.3 L14.9,73.4 L10.3,74.2 L5.7,74.8 L1.0,75.2 L-3.7,75.3 L-8.3,75.3 L-12.8,74.9 L-17.4,74.4 L-21.8,73.7 L-26.1,72.7 L-30.4,71.5 L-34.5,70.1 L-38.5,68.5 L-42.3,66.7 L-45.9,64.7 L-49.3,62.5 L-52.6,60.1 L-55.6,57.6 L-58.5,54.9 L-61.0,52.0 L-63.4,49.0 L-34.1,38.7 L-32.7,40.0 L-31.2,41.3 L-29.5,42.5 L-27.8,43.6 L-26.0,44.7 L-24.1,45.6 L-22.1,46.5 L-20.1,47.3 L-18.0,48.0 L-15.9,48.6 L-13.6,49.1 L-11.4,49.6 L-9.1,49.9 L-6.8,50.1 L-4.4,50.3 L-2.0,50.3 L0.4,50.3 L2.8,50.1 L5.2,49.9 L7.6,49.5 L10.0,49.1 L12.3,48.6 L14.7,47.9 L17.0,47.2 L19.2,46.4 L21.5,45.5 L23.6,44.6 L25.8,43.5Z" fill="none" stroke="#0a1a0a" stroke-width="1.2"/>
</g></g></g>
</g>
<path d="M52.6,38.8 L48.6,42.0 L44.5,44.9 L40.1,47.6 L35.5,50.0 L30.7,52.2 L25.8,54.2 L20.7,55.9 L15.6,57.3 L10.4,58.5 L5.1,59.3 L-0.2,59.9 L-5.5,60.1 L-10.8,60.1 L-16.0,59.8 L-21.1,59.2 L-26.2,58.2 L-31.1,57.1 L-35.8,55.6 L-40.4,53.8 L-44.8,51.8 L-49.0,49.6 L-52.9,47.0 L-56.5,44.3 L-59.9,41.3 L-63.0,38.2 L-65.8,34.8 L-68.3,31.3 L-70.4,27.6 L-41.8,17.8 L-40.5,19.8 L-39.0,21.7 L-37.3,23.5 L-35.5,25.2 L-33.5,26.8 L-31.3,28.2 L-29.0,29.6 L-26.6,30.8 L-24.0,31.8 L-21.4,32.8 L-18.6,33.5 L-15.8,34.2 L-12.9,34.6 L-9.9,35.0 L-6.9,35.1 L-3.9,35.1 L-0.8,35.0 L2.2,34.7 L5.3,34.2 L8.3,33.6 L11.3,32.8 L14.3,31.9 L17.1,30.9 L19.9,29.7 L22.6,28.3 L25.2,26.9 L27.7,25.3 L30.1,23.6Z" fill="none" stroke="#0a1a0a" stroke-width=".8"/>
<clipPath id="cA_2a"><path d="M-73.4,20.4 L-74.5,16.3 L-75.3,12.3 L-75.6,8.1 L-75.6,3.9 L-75.3,-0.3 L-74.5,-4.5 L-73.4,-8.7 L-71.9,-12.9 L-70.1,-16.9 L-67.9,-20.9 L-65.4,-24.8 L-62.6,-28.6 L-59.5,-32.2 L-56.1,-35.7 L-52.4,-39.0 L-48.4,-42.1 L-44.2,-45.0 L-39.8,-47.7 L-35.2,-50.2 L-30.4,-52.4 L-25.5,-54.3 L-20.4,-56.0 L-15.3,-57.4 L-10.1,-58.5 L-4.8,-59.3 L0.5,-59.9 L5.8,-60.1 L11.1,-60.1 L5.0,-35.2 L1.9,-35.1 L-1.1,-34.8 L-4.2,-34.4 L-7.2,-33.8 L-10.2,-33.1 L-13.2,-32.3 L-16.1,-31.3 L-18.9,-30.1 L-21.7,-28.8 L-24.3,-27.4 L-26.8,-25.9 L-29.2,-24.2 L-31.5,-22.5 L-33.7,-20.6 L-35.7,-18.7 L-37.5,-16.6 L-39.2,-14.5 L-40.7,-12.3 L-42.0,-10.1 L-43.1,-7.8 L-44.0,-5.5 L-44.7,-3.2 L-45.3,-0.8 L-45.6,1.5 L-45.7,3.9 L-45.6,6.2 L-45.3,8.5 L-44.8,10.8Z"/></clipPath>
<clipPath id="cA_2b"><path d="M-72.1,26.7 L-73.2,22.7 L-73.9,18.6 L-74.3,14.5 L-74.3,10.3 L-73.9,6.1 L-73.2,1.8 L-72.1,-2.3 L-70.6,-6.5 L-68.8,-10.6 L-66.6,-14.6 L-64.1,-18.5 L-61.3,-22.2 L-58.2,-25.9 L-54.7,-29.4 L-51.0,-32.7 L-47.1,-35.8 L-42.9,-38.7 L-38.5,-41.4 L-33.9,-43.8 L-29.1,-46.0 L-24.2,-47.9 L-19.1,-49.6 L-14.0,-51.0 L-8.7,-52.1 L-3.5,-53.0 L1.8,-53.5 L7.1,-53.8 L12.4,-53.7 L6.3,-28.8 L3.3,-28.7 L0.2,-28.4 L-2.9,-28.0 L-5.9,-27.5 L-8.9,-26.8 L-11.9,-25.9 L-14.8,-24.9 L-17.6,-23.7 L-20.3,-22.5 L-23.0,-21.1 L-25.5,-19.5 L-27.9,-17.9 L-30.2,-16.1 L-32.4,-14.3 L-34.3,-12.3 L-36.2,-10.3 L-37.8,-8.2 L-39.3,-6.0 L-40.6,-3.7 L-41.8,-1.5 L-42.7,0.8 L-43.4,3.2 L-43.9,5.5 L-44.3,7.9 L-44.4,10.2 L-44.3,12.6 L-44.0,14.9 L-43.5,17.1Z"/></clipPath>
<clipPath id="cA_2c"><path d="M-73.8,19.8 L-74.2,16.2 L-74.4,12.5 L-74.2,8.8 L-73.8,5.1 L-73.1,1.4 L-72.1,-2.3 L-70.8,-5.9 L-69.3,-9.5 L-67.5,-13.0 L-65.4,-16.5 L-63.1,-19.9 L-60.5,-23.1 L-57.8,-26.3 L-54.7,-29.4 L-51.5,-32.3 L-48.1,-35.0 L-44.4,-37.6 L-40.7,-40.1 L-36.7,-42.3 L-32.6,-44.4 L-28.4,-46.3 L-24.1,-48.0 L-19.6,-49.5 L-15.1,-50.7 L-10.5,-51.8 L-5.9,-52.6 L-1.3,-53.2 L3.4,-53.6 L-2.9,-28.0 L-5.3,-27.6 L-7.6,-27.1 L-10.0,-26.5 L-12.3,-25.8 L-14.6,-25.0 L-16.8,-24.1 L-19.0,-23.1 L-21.1,-22.1 L-23.2,-20.9 L-25.2,-19.7 L-27.1,-18.5 L-28.9,-17.1 L-30.7,-15.7 L-32.4,-14.3 L-33.9,-12.7 L-35.4,-11.2 L-36.8,-9.5 L-38.1,-7.9 L-39.2,-6.1 L-40.3,-4.4 L-41.2,-2.6 L-42.0,-0.8 L-42.7,1.0 L-43.3,2.8 L-43.8,4.7 L-44.1,6.5 L-44.3,8.4 L-44.4,10.2Z"/></clipPath>
<clipPath id="cA_2d"><path d="M-71.9,28.6 L-72.4,25.0 L-72.5,21.3 L-72.4,17.6 L-72.0,13.9 L-71.3,10.2 L-70.3,6.6 L-69.0,2.9 L-67.5,-0.7 L-65.7,-4.2 L-63.6,-7.7 L-61.3,-11.1 L-58.7,-14.3 L-55.9,-17.5 L-52.9,-20.5 L-49.7,-23.5 L-46.2,-26.2 L-42.6,-28.8 L-38.8,-31.3 L-34.9,-33.5 L-30.8,-35.6 L-26.6,-37.5 L-22.2,-39.2 L-17.8,-40.7 L-13.3,-41.9 L-8.7,-43.0 L-4.1,-43.8 L0.6,-44.4 L5.2,-44.8 L-1.1,-19.2 L-3.4,-18.8 L-5.8,-18.3 L-8.2,-17.7 L-10.5,-17.0 L-12.7,-16.2 L-15.0,-15.3 L-17.1,-14.3 L-19.3,-13.3 L-21.3,-12.1 L-23.3,-10.9 L-25.2,-9.7 L-27.1,-8.3 L-28.8,-6.9 L-30.5,-5.4 L-32.1,-3.9 L-33.6,-2.3 L-35.0,-0.7 L-36.2,1.0 L-37.4,2.7 L-38.4,4.4 L-39.4,6.2 L-40.2,8.0 L-40.9,9.8 L-41.5,11.6 L-41.9,13.5 L-42.3,15.3 L-42.5,17.2 L-42.5,19.0Z"/></clipPath>
<g clip-path="url(#cA_2a)">
<path d="M-73.4,20.4 L-74.5,16.3 L-75.3,12.3 L-75.6,8.1 L-75.6,3.9 L-75.3,-0.3 L-74.5,-4.5 L-73.4,-8.7 L-71.9,-12.9 L-70.1,-16.9 L-67.9,-20.9 L-65.4,-24.8 L-62.6,-28.6 L-59.5,-32.2 L-56.1,-35.7 L-52.4,-39.0 L-48.4,-42.1 L-44.2,-45.0 L-39.8,-47.7 L-35.2,-50.2 L-30.4,-52.4 L-25.5,-54.3 L-20.4,-56.0 L-15.3,-57.4 L-10.1,-58.5 L-4.8,-59.3 L0.5,-59.9 L5.8,-60.1 L11.1,-60.1 L5.0,-35.2 L1.9,-35.1 L-1.1,-34.8 L-4.2,-34.4 L-7.2,-33.8 L-10.2,-33.1 L-13.2,-32.3 L-16.1,-31.3 L-18.9,-30.1 L-21.7,-28.8 L-24.3,-27.4 L-26.8,-25.9 L-29.2,-24.2 L-31.5,-22.5 L-33.7,-20.6 L-35.7,-18.7 L-37.5,-16.6 L-39.2,-14.5 L-40.7,-12.3 L-42.0,-10.1 L-43.1,-7.8 L-44.0,-5.5 L-44.7,-3.2 L-45.3,-0.8 L-45.6,1.5 L-45.7,3.9 L-45.6,6.2 L-45.3,8.5 L-44.8,10.8Z" fill="rgb(10,120,10)"/>
<path d="M-74.5,16.3 L-75.3,12.3 L-73.9,18.6 L-73.2,22.7Z" fill="rgb(8,40,8)" stroke="rgb(8,40,8)" stroke-width=".5"/>
<path d="M-75.3,12.3 L-75.6,8.1 L-74.3,14.5 L-73.9,18.6Z" fill="rgb(8,50,8)" stroke="rgb(8,50,8)" stroke-width=".5"/>
<path d="M-75.6,8.1 L-75.6,3.9 L-74.3,10.3 L-74.3,14.5Z" fill="rgb(8,60,8)" stroke="rgb(8,60,8)" stroke-width=".5"/>
<path d="M-75.6,3.9 L-75.3,-0.3 L-73.9,6.1 L-74.3,10.3Z" fill="rgb(8,69,8)" stroke="rgb(8,69,8)" stroke-width=".5"/>
<path d="M-75.3,-0.3 L-74.5,-4.5 L-73.2,1.8 L-73.9,6.1Z" fill="rgb(8,78,8)" stroke="rgb(8,78,8)" stroke-width=".5"/>
<path d="M-74.5,-4.5 L-73.4,-8.7 L-72.1,-2.3 L-73.2,1.8Z" fill="rgb(8,88,8)" stroke="rgb(8,88,8)" stroke-width=".5"/>
<path d="M-73.4,-8.7 L-71.9,-12.9 L-70.6,-6.5 L-72.1,-2.3Z" fill="rgb(9,96,9)" stroke="rgb(9,96,9)" stroke-width=".5"/>
<path d="M-71.9,-12.9 L-70.1,-16.9 L-68.8,-10.6 L-70.6,-6.5Z" fill="rgb(9,105,9)" stroke="rgb(9,105,9)" stroke-width=".5"/>
<path d="M-70.1,-16.9 L-67.9,-20.9 L-66.6,-14.6 L-68.8,-10.6Z" fill="rgb(9,113,9)" stroke="rgb(9,113,9)" stroke-width=".5"/>
<path d="M-67.9,-20.9 L-65.4,-24.8 L-64.1,-18.5 L-66.6,-14.6Z" fill="rgb(9,121,9)" stroke="rgb(9,121,9)" stroke-width=".5"/>
<path d="M-65.4,-24.8 L-62.6,-28.6 L-61.3,-22.2 L-64.1,-18.5Z" fill="rgb(9,128,9)" stroke="rgb(9,128,9)" stroke-width=".5"/>
<path d="M-62.6,-28.6 L-59.5,-32.2 L-58.2,-25.9 L-61.3,-22.2Z" fill="rgb(9,135,9)" stroke="rgb(9,135,9)" stroke-width=".5"/>
<path d="M-59.5,-32.2 L-56.1,-35.7 L-54.7,-29.4 L-58.2,-25.9Z" fill="rgb(9,142,9)" stroke="rgb(9,142,9)" stroke-width=".5"/>
<path d="M-56.1,-35.7 L-52.4,-39.0 L-51.0,-32.7 L-54.7,-29.4Z" fill="rgb(9,148,9)" stroke="rgb(9,148,9)" stroke-width=".5"/>
<path d="M-52.4,-39.0 L-48.4,-42.1 L-47.1,-35.8 L-51.0,-32.7Z" fill="rgb(10,153,10)" stroke="rgb(10,153,10)" stroke-width=".5"/>
<path d="M-48.4,-42.1 L-44.2,-45.0 L-42.9,-38.7 L-47.1,-35.8Z" fill="rgb(10,158,10)" stroke="rgb(10,158,10)" stroke-width=".5"/>
<path d="M-44.2,-45.0 L-39.8,-47.7 L-38.5,-41.4 L-42.9,-38.7Z" fill="rgb(10,162,10)" stroke="rgb(10,162,10)" stroke-width=".5"/>
<path d="M-39.8,-47.7 L-35.2,-50.2 L-33.9,-43.8 L-38.5,-41.4Z" fill="rgb(10,166,10)" stroke="rgb(10,166,10)" stroke-width=".5"/>
<path d="M-35.2,-50.2 L-30.4,-52.4 L-29.1,-46.0 L-33.9,-43.8Z" fill="rgb(10,169,10)" stroke="rgb(10,169,10)" stroke-width=".5"/>
<path d="M-30.4,-52.4 L-25.5,-54.3 L-24.2,-47.9 L-29.1,-46.0Z" fill="rgb(10,171,10)" stroke="rgb(10,171,10)" stroke-width=".5"/>
<path d="M-25.5,-54.3 L-20.4,-56.0 L-19.1,-49.6 L-24.2,-47.9Z" fill="rgb(10,173,10)" stroke="rgb(10,173,10)" stroke-width=".5"/>
<path d="M-20.4,-56.0 L-15.3,-57.4 L-14.0,-51.0 L-19.1,-49.6Z" fill="rgb(10,174,10)" stroke="rgb(10,174,10)" stroke-width=".5"/>
<path d="M-15.3,-57.4 L-10.1,-58.5 L-8.7,-52.1 L-14.0,-51.0Z" fill="rgb(10,174,10)" stroke="rgb(10,174,10)" stroke-width=".5"/>
<path d="M-10.1,-58.5 L-4.8,-59.3 L-3.5,-53.0 L-8.7,-52.1Z" fill="rgb(10,174,10)" stroke="rgb(10,174,10)" stroke-width=".5"/>
<path d="M-4.8,-59.3 L0.5,-59.9 L1.8,-53.5 L-3.5,-53.0Z" fill="rgb(10,173,10)" stroke="rgb(10,173,10)" stroke-width=".5"/>
<path d="M0.5,-59.9 L5.8,-60.1 L7.1,-53.8 L1.8,-53.5Z" fill="rgb(10,171,10)" stroke="rgb(10,171,10)" stroke-width=".5"/>
<path d="M5.8,-60.1 L11.1,-60.1 L12.4,-53.7 L7.1,-53.8Z" fill="rgb(10,169,10)" stroke="rgb(10,169,10)" stroke-width=".5"/>
<path d="M-45.3,8.5 L-44.8,10.8 L-43.5,17.1 L-44.0,14.9Z" fill="rgb(8,39,8)" stroke="rgb(8,39,8)" stroke-width=".5"/>
<g clip-path="url(#cA_2b)">
<path d="M-72.1,26.7 L-73.2,22.7 L-73.9,18.6 L-74.3,14.5 L-74.3,10.3 L-73.9,6.1 L-73.2,1.8 L-72.1,-2.3 L-70.6,-6.5 L-68.8,-10.6 L-66.6,-14.6 L-64.1,-18.5 L-61.3,-22.2 L-58.2,-25.9 L-54.7,-29.4 L-51.0,-32.7 L-47.1,-35.8 L-42.9,-38.7 L-38.5,-41.4 L-33.9,-43.8 L-29.1,-46.0 L-24.2,-47.9 L-19.1,-49.6 L-14.0,-51.0 L-8.7,-52.1 L-3.5,-53.0 L1.8,-53.5 L7.1,-53.8 L12.4,-53.7 L6.3,-28.8 L3.3,-28.7 L0.2,-28.4 L-2.9,-28.0 L-5.9,-27.5 L-8.9,-26.8 L-11.9,-25.9 L-14.8,-24.9 L-17.6,-23.7 L-20.3,-22.5 L-23.0,-21.1 L-25.5,-19.5 L-27.9,-17.9 L-30.2,-16.1 L-32.4,-14.3 L-34.3,-12.3 L-36.2,-10.3 L-37.8,-8.2 L-39.3,-6.0 L-40.6,-3.7 L-41.8,-1.5 L-42.7,0.8 L-43.4,3.2 L-43.9,5.5 L-44.3,7.9 L-44.4,10.2 L-44.3,12.6 L-44.0,14.9 L-43.5,17.1Z" fill="rgb(11,210,11)" stroke="#0a1a0a" stroke-width="1.2"/>
<g clip-path="url(#cA_2c)">
<path d="M-73.8,19.8 L-74.2,16.2 L-74.4,12.5 L-74.2,8.8 L-73.8,5.1 L-73.1,1.4 L-72.1,-2.3 L-70.8,-5.9 L-69.3,-9.5 L-67.5,-13.0 L-65.4,-16.5 L-63.1,-19.9 L-60.5,-23.1 L-57.8,-26.3 L-54.7,-29.4 L-51.5,-32.3 L-48.1,-35.0 L-44.4,-37.6 L-40.7,-40.1 L-36.7,-42.3 L-32.6,-44.4 L-28.4,-46.3 L-24.1,-48.0 L-19.6,-49.5 L-15.1,-50.7 L-10.5,-51.8 L-5.9,-52.6 L-1.3,-53.2 L3.4,-53.6 L-2.9,-28.0 L-5.3,-27.6 L-7.6,-27.1 L-10.0,-26.5 L-12.3,-25.8 L-14.6,-25.0 L-16.8,-24.1 L-19.0,-23.1 L-21.1,-22.1 L-23.2,-20.9 L-25.2,-19.7 L-27.1,-18.5 L-28.9,-17.1 L-30.7,-15.7 L-32.4,-14.3 L-33.9,-12.7 L-35.4,-11.2 L-36.8,-9.5 L-38.1,-7.9 L-39.2,-6.1 L-40.3,-4.4 L-41.2,-2.6 L-42.0,-0.8 L-42.7,1.0 L-43.3,2.8 L-43.8,4.7 L-44.1,6.5 L-44.3,8.4 L-44.4,10.2Z" fill="rgb(10,120,10)"/>
<path d="M-73.8,19.8 L-74.2,16.2 L-72.4,25.0 L-71.9,28.6Z" fill="rgb(8,47,8)" stroke="rgb(8,47,8)" stroke-width=".5"/>
<path d="M-74.2,16.2 L-74.4,12.5 L-72.5,21.3 L-72.4,25.0Z" fill="rgb(8,55,8)" stroke="rgb(8,55,8)" stroke-width=".5"/>
<path d="M-74.4,12.5 L-74.2,8.8 L-72.4,17.6 L-72.5,21.3Z" fill="rgb(8,64,8)" stroke="rgb(8,64,8)" stroke-width=".5"/>
<path d="M-74.2,8.8 L-73.8,5.1 L-72.0,13.9 L-72.4,17.6Z" fill="rgb(8,72,8)" stroke="rgb(8,72,8)" stroke-width=".5"/>
<path d="M-73.8,5.1 L-73.1,1.4 L-71.3,10.2 L-72.0,13.9Z" fill="rgb(8,80,8)" stroke="rgb(8,80,8)" stroke-width=".5"/>
<path d="M-73.1,1.4 L-72.1,-2.3 L-70.3,6.6 L-71.3,10.2Z" fill="rgb(8,88,8)" stroke="rgb(8,88,8)" stroke-width=".5"/>
<path d="M-72.1,-2.3 L-70.8,-5.9 L-69.0,2.9 L-70.3,6.6Z" fill="rgb(9,96,9)" stroke="rgb(9,96,9)" stroke-width=".5"/>
<path d="M-70.8,-5.9 L-69.3,-9.5 L-67.5,-0.7 L-69.0,2.9Z" fill="rgb(9,103,9)" stroke="rgb(9,103,9)" stroke-width=".5"/>
<path d="M-69.3,-9.5 L-67.5,-13.0 L-65.7,-4.2 L-67.5,-0.7Z" fill="rgb(9,110,9)" stroke="rgb(9,110,9)" stroke-width=".5"/>
<path d="M-67.5,-13.0 L-65.4,-16.5 L-63.6,-7.7 L-65.7,-4.2Z" fill="rgb(9,117,9)" stroke="rgb(9,117,9)" stroke-width=".5"/>
<path d="M-65.4,-16.5 L-63.1,-19.9 L-61.3,-11.1 L-63.6,-7.7Z" fill="rgb(9,124,9)" stroke="rgb(9,124,9)" stroke-width=".5"/>
<path d="M-63.1,-19.9 L-60.5,-23.1 L-58.7,-14.3 L-61.3,-11.1Z" fill="rgb(9,131,9)" stroke="rgb(9,131,9)" stroke-width=".5"/>
<path d="M-60.5,-23.1 L-57.8,-26.3 L-55.9,-17.5 L-58.7,-14.3Z" fill="rgb(9,137,9)" stroke="rgb(9,137,9)" stroke-width=".5"/>
<path d="M-57.8,-26.3 L-54.7,-29.4 L-52.9,-20.5 L-55.9,-17.5Z" fill="rgb(9,142,9)" stroke="rgb(9,142,9)" stroke-width=".5"/>
<path d="M-54.7,-29.4 L-51.5,-32.3 L-49.7,-23.5 L-52.9,-20.5Z" fill="rgb(9,147,9)" stroke="rgb(9,147,9)" stroke-width=".5"/>
<path d="M-51.5,-32.3 L-48.1,-35.0 L-46.2,-26.2 L-49.7,-23.5Z" fill="rgb(10,152,10)" stroke="rgb(10,152,10)" stroke-width=".5"/>
<path d="M-48.1,-35.0 L-44.4,-37.6 L-42.6,-28.8 L-46.2,-26.2Z" fill="rgb(10,156,10)" stroke="rgb(10,156,10)" stroke-width=".5"/>
<path d="M-44.4,-37.6 L-40.7,-40.1 L-38.8,-31.3 L-42.6,-28.8Z" fill="rgb(10,160,10)" stroke="rgb(10,160,10)" stroke-width=".5"/>
<path d="M-40.7,-40.1 L-36.7,-42.3 L-34.9,-33.5 L-38.8,-31.3Z" fill="rgb(10,164,10)" stroke="rgb(10,164,10)" stroke-width=".5"/>
<path d="M-36.7,-42.3 L-32.6,-44.4 L-30.8,-35.6 L-34.9,-33.5Z" fill="rgb(10,167,10)" stroke="rgb(10,167,10)" stroke-width=".5"/>
<path d="M-32.6,-44.4 L-28.4,-46.3 L-26.6,-37.5 L-30.8,-35.6Z" fill="rgb(10,169,10)" stroke="rgb(10,169,10)" stroke-width=".5"/>
<path d="M-28.4,-46.3 L-24.1,-48.0 L-22.2,-39.2 L-26.6,-37.5Z" fill="rgb(10,171,10)" stroke="rgb(10,171,10)" stroke-width=".5"/>
<path d="M-24.1,-48.0 L-19.6,-49.5 L-17.8,-40.7 L-22.2,-39.2Z" fill="rgb(10,173,10)" stroke="rgb(10,173,10)" stroke-width=".5"/>
<path d="M-19.6,-49.5 L-15.1,-50.7 L-13.3,-41.9 L-17.8,-40.7Z" fill="rgb(10,174,10)" stroke="rgb(10,174,10)" stroke-width=".5"/>
<path d="M-15.1,-50.7 L-10.5,-51.8 L-8.7,-43.0 L-13.3,-41.9Z" fill="rgb(10,174,10)" stroke="rgb(10,174,10)" stroke-width=".5"/>
<path d="M-10.5,-51.8 L-5.9,-52.6 L-4.1,-43.8 L-8.7,-43.0Z" fill="rgb(10,174,10)" stroke="rgb(10,174,10)" stroke-width=".5"/>
<path d="M-5.9,-52.6 L-1.3,-53.2 L0.6,-44.4 L-4.1,-43.8Z" fill="rgb(10,174,10)" stroke="rgb(10,174,10)" stroke-width=".5"/>
<path d="M-1.3,-53.2 L3.4,-53.6 L5.2,-44.8 L0.6,-44.4Z" fill="rgb(10,173,10)" stroke="rgb(10,173,10)" stroke-width=".5"/>
<path d="M-73.8,19.8 L-74.2,16.2 L-74.4,12.5 L-74.2,8.8 L-73.8,5.1 L-73.1,1.4 L-72.1,-2.3 L-70.8,-5.9 L-69.3,-9.5 L-67.5,-13.0 L-65.4,-16.5 L-63.1,-19.9 L-60.5,-23.1 L-57.8,-26.3 L-54.7,-29.4 L-51.5,-32.3 L-48.1,-35.0 L-44.4,-37.6 L-40.7,-40.1 L-36.7,-42.3 L-32.6,-44.4 L-28.4,-46.3 L-24.1,-48.0 L-19.6,-49.5 L-15.1,-50.7 L-10.5,-51.8 L-5.9,-52.6 L-1.3,-53.2 L3.4,-53.6 L-2.9,-28.0 L-5.3,-27.6 L-7.6,-27.1 L-10.0,-26.5 L-12.3,-25.8 L-14.6,-25.0 L-16.8,-24.1 L-19.0,-23.1 L-21.1,-22.1 L-23.2,-20.9 L-25.2,-19.7 L-27.1,-18.5 L-28.9,-17.1 L-30.7,-15.7 L-32.4,-14.3 L-33.9,-12.7 L-35.4,-11.2 L-36.8,-9.5 L-38.1,-7.9 L-39.2,-6.1 L-40.3,-4.4 L-41.2,-2.6 L-42.0,-0.8 L-42.7,1.0 L-43.3,2.8 L-43.8,4.7 L-44.1,6.5 L-44.3,8.4 L-44.4,10.2Z" fill="none" stroke="#0a1a0a" stroke-width="1.2"/>
<g clip-path="url(#cA_2d)">
<rect x="174" y="49" width="606" height="370" transform="translate(-356.5,-207.6)" fill="url(#bgfill)"/>
<path d="M-71.9,28.6 L-72.4,25.0 L-72.5,21.3 L-72.4,17.6 L-72.0,13.9 L-71.3,10.2 L-70.3,6.6 L-69.0,2.9 L-67.5,-0.7 L-65.7,-4.2 L-63.6,-7.7 L-61.3,-11.1 L-58.7,-14.3 L-55.9,-17.5 L-52.9,-20.5 L-49.7,-23.5 L-46.2,-26.2 L-42.6,-28.8 L-38.8,-31.3 L-34.9,-33.5 L-30.8,-35.6 L-26.6,-37.5 L-22.2,-39.2 L-17.8,-40.7 L-13.3,-41.9 L-8.7,-43.0 L-4.1,-43.8 L0.6,-44.4 L5.2,-44.8 L-1.1,-19.2 L-3.4,-18.8 L-5.8,-18.3 L-8.2,-17.7 L-10.5,-17.0 L-12.7,-16.2 L-15.0,-15.3 L-17.1,-14.3 L-19.3,-13.3 L-21.3,-12.1 L-23.3,-10.9 L-25.2,-9.7 L-27.1,-8.3 L-28.8,-6.9 L-30.5,-5.4 L-32.1,-3.9 L-33.6,-2.3 L-35.0,-0.7 L-36.2,1.0 L-37.4,2.7 L-38.4,4.4 L-39.4,6.2 L-40.2,8.0 L-40.9,9.8 L-41.5,11.6 L-41.9,13.5 L-42.3,15.3 L-42.5,17.2 L-42.5,19.0Z" fill="none" stroke="#0a1a0a" stroke-width="1.2"/>
</g></g></g>
</g>
<path d="M-73.4,20.4 L-74.5,16.3 L-75.3,12.3 L-75.6,8.1 L-75.6,3.9 L-75.3,-0.3 L-74.5,-4.5 L-73.4,-8.7 L-71.9,-12.9 L-70.1,-16.9 L-67.9,-20.9 L-65.4,-24.8 L-62.6,-28.6 L-59.5,-32.2 L-56.1,-35.7 L-52.4,-39.0 L-48.4,-42.1 L-44.2,-45.0 L-39.8,-47.7 L-35.2,-50.2 L-30.4,-52.4 L-25.5,-54.3 L-20.4,-56.0 L-15.3,-57.4 L-10.1,-58.5 L-4.8,-59.3 L0.5,-59.9 L5.8,-60.1 L11.1,-60.1 L5.0,-35.2 L1.9,-35.1 L-1.1,-34.8 L-4.2,-34.4 L-7.2,-33.8 L-10.2,-33.1 L-13.2,-32.3 L-16.1,-31.3 L-18.9,-30.1 L-21.7,-28.8 L-24.3,-27.4 L-26.8,-25.9 L-29.2,-24.2 L-31.5,-22.5 L-33.7,-20.6 L-35.7,-18.7 L-37.5,-16.6 L-39.2,-14.5 L-40.7,-12.3 L-42.0,-10.1 L-43.1,-7.8 L-44.0,-5.5 L-44.7,-3.2 L-45.3,-0.8 L-45.6,1.5 L-45.7,3.9 L-45.6,6.2 L-45.3,8.5 L-44.8,10.8Z" fill="none" stroke="#0a1a0a" stroke-width=".8"/>
<clipPath id="hA"><path d="M38.1,-7.9 L38.5,-5.3 L38.6,-2.7 L38.4,-0.1 L37.9,2.6 L37.1,5.2 L36.0,7.8 L34.7,10.3 L33.1,12.8 L31.3,15.1 L29.2,17.4 L26.8,19.5 L24.3,21.4 L21.6,23.2 L18.8,24.9 L15.8,26.3 L12.6,27.5 L9.4,28.5 L6.1,29.3 L2.8,29.9 L-0.6,30.3 L-4.0,30.4 L-7.3,30.3 L-10.6,29.9 L-13.8,29.4 L-16.9,28.6 L-19.8,27.6 L-22.6,26.3 L-25.3,24.9 L-27.7,23.3 L-29.9,21.5 L-31.9,19.6 L-33.7,17.5 L-35.2,15.2 L-36.5,12.9 L-37.4,10.4 L-38.1,7.9 L-38.5,5.3 L-38.6,2.7 L-38.4,0.1 L-37.9,-2.6 L-37.1,-5.2 L-36.0,-7.8 L-34.7,-10.3 L-33.1,-12.8 L-31.3,-15.1 L-29.2,-17.4 L-26.8,-19.5 L-24.3,-21.4 L-21.6,-23.2 L-18.8,-24.9 L-15.8,-26.3 L-12.6,-27.5 L-9.4,-28.5 L-6.1,-29.3 L-2.8,-29.9 L0.6,-30.3 L4.0,-30.4 L7.3,-30.3 L10.6,-29.9 L13.8,-29.4 L16.9,-28.6 L19.8,-27.6 L22.6,-26.3 L25.3,-24.9 L27.7,-23.3 L29.9,-21.5 L31.9,-19.6 L33.7,-17.5 L35.2,-15.2 L36.5,-12.9 L37.4,-10.4Z"/></clipPath>
<g clip-path="url(#hA)">
<path d="M38.1,-7.9 L38.5,-5.3 L38.6,-2.7 L38.4,-0.1 L37.9,2.6 L37.1,5.2 L36.0,7.8 L34.7,10.3 L33.1,12.8 L31.3,15.1 L29.2,17.4 L26.8,19.5 L24.3,21.4 L21.6,23.2 L18.8,24.9 L15.8,26.3 L12.6,27.5 L9.4,28.5 L6.1,29.3 L2.8,29.9 L-0.6,30.3 L-4.0,30.4 L-7.3,30.3 L-10.6,29.9 L-13.8,29.4 L-16.9,28.6 L-19.8,27.6 L-22.6,26.3 L-25.3,24.9 L-27.7,23.3 L-29.9,21.5 L-31.9,19.6 L-33.7,17.5 L-35.2,15.2 L-36.5,12.9 L-37.4,10.4 L-38.1,7.9 L-38.5,5.3 L-38.6,2.7 L-38.4,0.1 L-37.9,-2.6 L-37.1,-5.2 L-36.0,-7.8 L-34.7,-10.3 L-33.1,-12.8 L-31.3,-15.1 L-29.2,-17.4 L-26.8,-19.5 L-24.3,-21.4 L-21.6,-23.2 L-18.8,-24.9 L-15.8,-26.3 L-12.6,-27.5 L-9.4,-28.5 L-6.1,-29.3 L-2.8,-29.9 L0.6,-30.3 L4.0,-30.4 L7.3,-30.3 L10.6,-29.9 L13.8,-29.4 L16.9,-28.6 L19.8,-27.6 L22.6,-26.3 L25.3,-24.9 L27.7,-23.3 L29.9,-21.5 L31.9,-19.6 L33.7,-17.5 L35.2,-15.2 L36.5,-12.9 L37.4,-10.4Z" fill="rgb(10,130,10)"/>
<path d="M-38.1,7.9 L-38.5,5.3 L-37.2,11.5 L-36.8,14.1Z" fill="rgb(8,44,8)" stroke="rgb(8,44,8)" stroke-width=".5"/>
<path d="M-38.5,5.3 L-38.6,2.7 L-37.3,8.9 L-37.2,11.5Z" fill="rgb(8,56,8)" stroke="rgb(8,56,8)" stroke-width=".5"/>
<path d="M-38.6,2.7 L-38.4,0.1 L-37.1,6.2 L-37.3,8.9Z" fill="rgb(8,68,8)" stroke="rgb(8,68,8)" stroke-width=".5"/>
<path d="M-38.4,0.1 L-37.9,-2.6 L-36.6,3.6 L-37.1,6.2Z" fill="rgb(8,79,8)" stroke="rgb(8,79,8)" stroke-width=".5"/>
<path d="M-37.9,-2.6 L-37.1,-5.2 L-35.8,1.0 L-36.6,3.6Z" fill="rgb(8,91,8)" stroke="rgb(8,91,8)" stroke-width=".5"/>
<path d="M-37.1,-5.2 L-36.0,-7.8 L-34.8,-1.6 L-35.8,1.0Z" fill="rgb(9,102,9)" stroke="rgb(9,102,9)" stroke-width=".5"/>
<path d="M-36.0,-7.8 L-34.7,-10.3 L-33.4,-4.2 L-34.8,-1.6Z" fill="rgb(9,112,9)" stroke="rgb(9,112,9)" stroke-width=".5"/>
<path d="M-34.7,-10.3 L-33.1,-12.8 L-31.8,-6.6 L-33.4,-4.2Z" fill="rgb(9,122,9)" stroke="rgb(9,122,9)" stroke-width=".5"/>
<path d="M-33.1,-12.8 L-31.3,-15.1 L-30.0,-9.0 L-31.8,-6.6Z" fill="rgb(9,131,9)" stroke="rgb(9,131,9)" stroke-width=".5"/>
<path d="M-31.3,-15.1 L-29.2,-17.4 L-27.9,-11.2 L-30.0,-9.0Z" fill="rgb(9,139,9)" stroke="rgb(9,139,9)" stroke-width=".5"/>
<path d="M-29.2,-17.4 L-26.8,-19.5 L-25.6,-13.3 L-27.9,-11.2Z" fill="rgb(9,147,9)" stroke="rgb(9,147,9)" stroke-width=".5"/>
<path d="M-26.8,-19.5 L-24.3,-21.4 L-23.0,-15.3 L-25.6,-13.3Z" fill="rgb(10,153,10)" stroke="rgb(10,153,10)" stroke-width=".5"/>
<path d="M-24.3,-21.4 L-21.6,-23.2 L-20.3,-17.1 L-23.0,-15.3Z" fill="rgb(10,159,10)" stroke="rgb(10,159,10)" stroke-width=".5"/>
<path d="M-21.6,-23.2 L-18.8,-24.9 L-17.5,-18.7 L-20.3,-17.1Z" fill="rgb(10,164,10)" stroke="rgb(10,164,10)" stroke-width=".5"/>
<path d="M-18.8,-24.9 L-15.8,-26.3 L-14.5,-20.1 L-17.5,-18.7Z" fill="rgb(10,168,10)" stroke="rgb(10,168,10)" stroke-width=".5"/>
<path d="M-15.8,-26.3 L-12.6,-27.5 L-11.3,-21.3 L-14.5,-20.1Z" fill="rgb(10,171,10)" stroke="rgb(10,171,10)" stroke-width=".5"/>
<path d="M-12.6,-27.5 L-9.4,-28.5 L-8.1,-22.4 L-11.3,-21.3Z" fill="rgb(10,173,10)" stroke="rgb(10,173,10)" stroke-width=".5"/>
<path d="M-9.4,-28.5 L-6.1,-29.3 L-4.8,-23.2 L-8.1,-22.4Z" fill="rgb(10,174,10)" stroke="rgb(10,174,10)" stroke-width=".5"/>
<path d="M-6.1,-29.3 L-2.8,-29.9 L-1.5,-23.7 L-4.8,-23.2Z" fill="rgb(10,174,10)" stroke="rgb(10,174,10)" stroke-width=".5"/>
<path d="M-2.8,-29.9 L0.6,-30.3 L1.9,-24.1 L-1.5,-23.7Z" fill="rgb(10,173,10)" stroke="rgb(10,173,10)" stroke-width=".5"/>
<path d="M0.6,-30.3 L4.0,-30.4 L5.2,-24.2 L1.9,-24.1Z" fill="rgb(10,171,10)" stroke="rgb(10,171,10)" stroke-width=".5"/>
<path d="M4.0,-30.4 L7.3,-30.3 L8.6,-24.1 L5.2,-24.2Z" fill="rgb(10,168,10)" stroke="rgb(10,168,10)" stroke-width=".5"/>
<path d="M7.3,-30.3 L10.6,-29.9 L11.9,-23.8 L8.6,-24.1Z" fill="rgb(10,164,10)" stroke="rgb(10,164,10)" stroke-width=".5"/>
<path d="M10.6,-29.9 L13.8,-29.4 L15.0,-23.2 L11.9,-23.8Z" fill="rgb(10,159,10)" stroke="rgb(10,159,10)" stroke-width=".5"/>
<path d="M13.8,-29.4 L16.9,-28.6 L18.1,-22.4 L15.0,-23.2Z" fill="rgb(10,153,10)" stroke="rgb(10,153,10)" stroke-width=".5"/>
<path d="M16.9,-28.6 L19.8,-27.6 L21.1,-21.4 L18.1,-22.4Z" fill="rgb(9,147,9)" stroke="rgb(9,147,9)" stroke-width=".5"/>
<path d="M19.8,-27.6 L22.6,-26.3 L23.9,-20.2 L21.1,-21.4Z" fill="rgb(9,139,9)" stroke="rgb(9,139,9)" stroke-width=".5"/>
<path d="M22.6,-26.3 L25.3,-24.9 L26.5,-18.8 L23.9,-20.2Z" fill="rgb(9,131,9)" stroke="rgb(9,131,9)" stroke-width=".5"/>
<path d="M25.3,-24.9 L27.7,-23.3 L29.0,-17.1 L26.5,-18.8Z" fill="rgb(9,122,9)" stroke="rgb(9,122,9)" stroke-width=".5"/>
<path d="M27.7,-23.3 L29.9,-21.5 L31.2,-15.4 L29.0,-17.1Z" fill="rgb(9,112,9)" stroke="rgb(9,112,9)" stroke-width=".5"/>
<path d="M29.9,-21.5 L31.9,-19.6 L33.2,-13.4 L31.2,-15.4Z" fill="rgb(9,102,9)" stroke="rgb(9,102,9)" stroke-width=".5"/>
<path d="M31.9,-19.6 L33.7,-17.5 L35.0,-11.3 L33.2,-13.4Z" fill="rgb(8,91,8)" stroke="rgb(8,91,8)" stroke-width=".5"/>
<path d="M33.7,-17.5 L35.2,-15.2 L36.5,-9.1 L35.0,-11.3Z" fill="rgb(8,79,8)" stroke="rgb(8,79,8)" stroke-width=".5"/>
<path d="M35.2,-15.2 L36.5,-12.9 L37.7,-6.7 L36.5,-9.1Z" fill="rgb(8,68,8)" stroke="rgb(8,68,8)" stroke-width=".5"/>
<path d="M36.5,-12.9 L37.4,-10.4 L38.7,-4.3 L37.7,-6.7Z" fill="rgb(8,56,8)" stroke="rgb(8,56,8)" stroke-width=".5"/>
<path d="M37.4,-10.4 L38.1,-7.9 L39.4,-1.8 L38.7,-4.3Z" fill="rgb(8,44,8)" stroke="rgb(8,44,8)" stroke-width=".5"/>
<path d="M39.4,-1.8 L39.8,0.8 L39.9,3.5 L39.7,6.1 L39.2,8.8 L38.4,11.4 L37.3,14.0 L36.0,16.5 L34.4,19.0 L32.5,21.3 L30.4,23.5 L28.1,25.7 L25.6,27.6 L22.9,29.4 L20.0,31.0 L17.0,32.4 L13.9,33.7 L10.7,34.7 L7.4,35.5 L4.0,36.1 L0.7,36.4 L-2.7,36.6 L-6.0,36.4 L-9.3,36.1 L-12.5,35.5 L-15.6,34.7 L-18.5,33.7 L-21.3,32.5 L-24.0,31.1 L-26.4,29.5 L-28.7,27.7 L-30.7,25.7 L-32.4,23.6 L-33.9,21.4 L-35.2,19.1 L-36.1,16.6 L-36.8,14.1 L-37.2,11.5 L-37.3,8.9 L-37.1,6.2 L-36.6,3.6 L-35.8,1.0 L-34.8,-1.6 L-33.4,-4.2 L-31.8,-6.6 L-30.0,-9.0 L-27.9,-11.2 L-25.6,-13.3 L-23.0,-15.3 L-20.3,-17.1 L-17.5,-18.7 L-14.5,-20.1 L-11.3,-21.3 L-8.1,-22.4 L-4.8,-23.2 L-1.5,-23.7 L1.9,-24.1 L5.2,-24.2 L8.6,-24.1 L11.9,-23.8 L15.0,-23.2 L18.1,-22.4 L21.1,-21.4 L23.9,-20.2 L26.5,-18.8 L29.0,-17.1 L31.2,-15.4 L33.2,-13.4 L35.0,-11.3 L36.5,-9.1 L37.7,-6.7 L38.7,-4.3Z" fill="#3b3b3b" stroke="#141414" stroke-width="1"/>
<ellipse cx="-11.2" cy="-17.0" rx="2.8" ry="2.3" transform="rotate(-11.75 -11.2 -17.0)" fill="#424242" stroke="#202020" stroke-width=".9"/>
<ellipse cx="-19.4" cy="-8.7" rx="2.8" ry="2.3" transform="rotate(-11.75 -19.4 -8.7)" fill="#424242" stroke="#202020" stroke-width=".9"/>
<ellipse cx="-28.2" cy="-0.2" rx="2.8" ry="2.3" transform="rotate(-11.75 -28.2 -0.2)" fill="#424242" stroke="#202020" stroke-width=".9"/>
<ellipse cx="30.9" cy="9.3" rx="2.8" ry="2.3" transform="rotate(-11.75 30.9 9.3)" fill="#424242" stroke="#202020" stroke-width=".9"/>
<ellipse cx="21.8" cy="17.6" rx="2.8" ry="2.3" transform="rotate(-11.75 21.8 17.6)" fill="#424242" stroke="#202020" stroke-width=".9"/>
<ellipse cx="13.2" cy="25.5" rx="2.8" ry="2.3" transform="rotate(-11.75 13.2 25.5)" fill="#424242" stroke="#202020" stroke-width=".9"/>
<ellipse cx="10.5" cy="-19.5" rx="2.8" ry="2.3" transform="rotate(-11.75 10.5 -19.5)" fill="#424242" stroke="#202020" stroke-width=".9"/>
<ellipse cx="-8.5" cy="29.5" rx="2.8" ry="2.3" transform="rotate(-11.75 -8.5 29.5)" fill="#424242" stroke="#202020" stroke-width=".9"/>
<ellipse cx="1.0" cy="4.4" rx="15.4" ry="11.9" transform="rotate(-11.75 1.0 3.8)" fill="#2b2b2b" stroke="#151515" stroke-width="1.1"/>
<ellipse cx="1.0" cy="4.0" rx="13.2" ry="10.0" transform="rotate(-11.75 1.0 3.8)" fill="#3a3a3a" stroke="#151515" stroke-width="0.7"/>
<ellipse cx="1.0" cy="3.8" rx="10.6" ry="8.0" transform="rotate(-11.75 1.0 3.8)" fill="#484848" stroke="#151515" stroke-width="0.8"/>
<ellipse cx="1.0" cy="4.0" rx="5.6" ry="4.3" transform="rotate(-11.75 1.0 3.8)" fill="#333333" stroke="#151515" stroke-width="0.9"/>
<ellipse cx="1.0" cy="3.2" rx="3.3" ry="2.2" transform="rotate(-11.75 1.0 3.8)" fill="#444444" stroke="#151515" stroke-width="0.8"/>
</g>
<path d="M38.1,-7.9 L38.5,-5.3 L38.6,-2.7 L38.4,-0.1 L37.9,2.6 L37.1,5.2 L36.0,7.8 L34.7,10.3 L33.1,12.8 L31.3,15.1 L29.2,17.4 L26.8,19.5 L24.3,21.4 L21.6,23.2 L18.8,24.9 L15.8,26.3 L12.6,27.5 L9.4,28.5 L6.1,29.3 L2.8,29.9 L-0.6,30.3 L-4.0,30.4 L-7.3,30.3 L-10.6,29.9 L-13.8,29.4 L-16.9,28.6 L-19.8,27.6 L-22.6,26.3 L-25.3,24.9 L-27.7,23.3 L-29.9,21.5 L-31.9,19.6 L-33.7,17.5 L-35.2,15.2 L-36.5,12.9 L-37.4,10.4 L-38.1,7.9 L-38.5,5.3 L-38.6,2.7 L-38.4,0.1 L-37.9,-2.6 L-37.1,-5.2 L-36.0,-7.8 L-34.7,-10.3 L-33.1,-12.8 L-31.3,-15.1 L-29.2,-17.4 L-26.8,-19.5 L-24.3,-21.4 L-21.6,-23.2 L-18.8,-24.9 L-15.8,-26.3 L-12.6,-27.5 L-9.4,-28.5 L-6.1,-29.3 L-2.8,-29.9 L0.6,-30.3 L4.0,-30.4 L7.3,-30.3 L10.6,-29.9 L13.8,-29.4 L16.9,-28.6 L19.8,-27.6 L22.6,-26.3 L25.3,-24.9 L27.7,-23.3 L29.9,-21.5 L31.9,-19.6 L33.7,-17.5 L35.2,-15.2 L36.5,-12.9 L37.4,-10.4Z" fill="none" stroke="#0a1a0a" stroke-width=".8"/>
<g transform="translate(18.7,-13.5) rotate(-11.75)">
<ellipse cx="0.3" cy="1.7" rx="12.3" ry="8.9" fill="#1c1c1c"/>
<ellipse cx="0" cy="0" rx="12.3" ry="8.6" fill="#c6c6c6" stroke="#3a3a3a" stroke-width=".7"/>
<ellipse cx="0" cy="-0.3" rx="9" ry="6.300" fill="#7c7c7c"/>
<ellipse cx="0" cy="-1.500" rx="7.800" ry="5.500" fill="url(#domeA)" stroke="#5a5a5a" stroke-width=".6"/>
<ellipse cx="0.3" cy="-3.100" rx="4.500" ry="3.300" fill="#505050" stroke="#2a2a2a" stroke-width=".7"/>
<path d="M-2.400 -3.400 L3 -2.800 M0.800 -5.400 L-0.200 -0.900 M-1.600 -4.800 L2.200 -1.400" stroke="#a8a8a8" stroke-width=".7"/>
</g>
<g transform="translate(-17.5,20.0) rotate(-11.75)">
<ellipse cx="0.3" cy="1.7" rx="12.3" ry="8.9" fill="#1c1c1c"/>
<ellipse cx="0" cy="0" rx="12.3" ry="8.6" fill="#c6c6c6" stroke="#3a3a3a" stroke-width=".7"/>
<ellipse cx="0" cy="-0.3" rx="9" ry="6.300" fill="#7c7c7c"/>
<ellipse cx="0" cy="-1.500" rx="7.800" ry="5.500" fill="url(#domeA)" stroke="#5a5a5a" stroke-width=".6"/>
<ellipse cx="0.3" cy="-3.100" rx="4.500" ry="3.300" fill="#505050" stroke="#2a2a2a" stroke-width=".7"/>
<path d="M-2.400 -3.400 L3 -2.800 M0.800 -5.400 L-0.200 -0.900 M-1.600 -4.800 L2.200 -1.400" stroke="#a8a8a8" stroke-width=".7"/>
</g>
</g>
<g transform="translate(599,265.6)" stroke-linejoin="round">
<path d="M-97.8,17.0 L-97.4,10.0 L-96.1,3.0 L-94.1,-3.9 L-91.4,-10.7 L-88.0,-17.4 L-83.8,-23.8 L-79.0,-30.0 L-73.7,-35.9 L-67.7,-41.5 L-61.2,-46.6 L-54.2,-51.3 L-46.8,-55.6 L-39.0,-59.3 L-30.9,-62.5 L-22.5,-65.2 L-14.0,-67.3 L-5.3,-68.8 L3.4,-69.7 L12.1,-69.9 L20.7,-69.6 L29.2,-68.7 L37.5,-67.1 L45.5,-65.0 L53.2,-62.3 L60.5,-59.1 L67.4,-55.3 L73.7,-51.0 L79.5,-46.3 L84.8,-41.1 L89.4,-35.5 L93.3,-29.6 L96.5,-23.4 L99.0,-16.9 L100.8,-10.2 L102.0,-4.8 L103.0,2.1 L103.3,9.0 L102.8,16.0 L101.5,23.0 L99.5,29.9 L96.8,36.8 L93.4,43.4 L89.2,49.9 L84.5,56.1 L79.1,62.0 L73.1,67.5 L66.6,72.7 L59.6,77.4 L52.2,81.6 L44.4,85.3 L36.3,88.6 L27.9,91.2 L19.4,93.3 L10.7,94.8 L2.0,95.7 L-6.7,96.0 L-15.3,95.7 L-23.8,94.7 L-32.1,93.2 L-40.1,91.0 L-47.8,88.4 L-55.1,85.1 L-62.0,81.3 L-68.3,77.0 L-74.1,72.3 L-79.3,67.1 L-83.9,61.6 L-87.9,55.7 L-91.1,49.4 L-93.6,43.0 L-95.4,36.3 L-96.5,30.8 L-97.6,24.0Z" fill="url(#sideB)" stroke="#0a1a0a" stroke-width="1"/>
<path d="M102.4,-13.5 L103.3,-8.1 L103.7,-2.6 L103.5,3.0 L102.9,8.6 L101.8,14.2 L100.2,19.8 L98.2,25.2 L95.6,30.7 L92.6,36.0 L89.2,41.1 L85.3,46.1 L81.0,50.9 L76.3,55.5 L71.3,59.9 L65.9,64.0 L60.2,67.8 L54.3,71.3 L48.0,74.6 L41.6,77.5 L34.9,80.0 L28.1,82.2 L21.2,84.0 L14.1,85.5 L7.0,86.6 L-0.1,87.3 L-7.2,87.6 L-14.3,87.5 L-21.3,87.0 L-28.2,86.2 L-34.9,84.9 L-41.5,83.3 L-47.9,81.3 L-54.0,79.0 L-59.8,76.3 L-65.4,73.3 L-70.6,69.9 L-75.5,66.2 L-79.9,62.3 L-84.0,58.1 L-87.7,53.6 L-91.0,48.9 L-93.8,44.1 L-96.1,39.0 L-97.9,33.8 L-99.3,28.4 L-100.2,23.0 L-100.6,17.4 L-100.5,11.9 L-99.8,6.3 L-98.7,0.7 L-97.1,-4.9 L-95.1,-10.4 L-92.5,-15.8 L-89.5,-21.1 L-86.1,-26.2 L-82.2,-31.2 L-77.9,-36.0 L-73.2,-40.6 L-68.2,-45.0 L-62.8,-49.1 L-57.1,-52.9 L-51.2,-56.5 L-44.9,-59.7 L-38.5,-62.6 L-31.8,-65.1 L-25.0,-67.3 L-18.1,-69.2 L-11.0,-70.6 L-3.9,-71.7 L3.2,-72.4 L10.3,-72.7 L17.4,-72.6 L24.4,-72.2 L31.3,-71.3 L38.0,-70.1 L44.6,-68.4 L51.0,-66.5 L57.1,-64.1 L62.9,-61.4 L68.5,-58.4 L73.7,-55.0 L78.6,-51.4 L83.0,-47.4 L87.1,-43.2 L90.8,-38.7 L94.1,-34.1 L96.9,-29.2 L99.2,-24.1 L101.0,-18.9Z" fill="none" stroke="#0a0a0a" stroke-width="7"/>
<path d="M-100.0,6.8 L-99.5,-0.2 L-98.2,-7.2 L-96.3,-14.2 L-93.5,-21.0 L-90.1,-27.7 L-86.0,-34.1 L-81.2,-40.3 L-75.8,-46.2 L-69.8,-51.7 L-63.3,-56.9 L-56.3,-61.6 L-48.9,-65.8 L-41.1,-69.6 L-33.0,-72.8 L-24.7,-75.5 L-16.1,-77.5 L-7.5,-79.0 L1.2,-79.9 L10.0,-80.2 L18.6,-79.9 L27.1,-79.0 L35.4,-77.4 L43.4,-75.3 L51.1,-72.6 L58.4,-69.3 L65.2,-65.6 L71.6,-61.3 L77.4,-56.5 L82.6,-51.4 L87.2,-45.8 L91.2,-39.9 L94.4,-33.7 L96.9,-27.2 L98.7,-20.5 L99.6,-16.3 L100.6,-9.5 L100.9,-2.5 L100.4,4.5 L99.1,11.4 L97.1,18.4 L94.4,25.2 L91.0,31.9 L86.8,38.3 L82.1,44.5 L76.7,50.4 L70.7,56.0 L64.2,61.1 L57.2,65.8 L49.8,70.0 L42.0,73.8 L33.9,77.0 L25.5,79.7 L17.0,81.8 L8.3,83.2 L-0.4,84.1 L-9.1,84.4 L-17.7,84.1 L-26.2,83.2 L-34.5,81.6 L-42.5,79.5 L-50.2,76.8 L-57.5,73.5 L-64.4,69.8 L-70.7,65.5 L-76.5,60.8 L-81.8,55.6 L-86.3,50.0 L-90.3,44.1 L-93.5,37.9 L-96.0,31.4 L-97.8,24.7 L-98.7,20.5 L-99.7,13.7Z" fill="url(#sideB)" stroke="#0a1a0a" stroke-width="1"/>
<path d="M98.7,-20.5 L99.7,-13.7 L100.0,-6.8 L99.5,0.2 L98.3,7.2 L96.3,14.2 L93.5,21.0 L90.1,27.7 L86.0,34.1 L81.2,40.3 L75.8,46.2 L69.8,51.7 L63.3,56.9 L56.3,61.6 L48.9,65.8 L41.1,69.6 L33.0,72.8 L24.7,75.5 L16.1,77.5 L7.5,79.0 L-1.3,79.9 L-10.0,80.2 L-18.6,79.9 L-27.1,79.0 L-35.4,77.4 L-43.4,75.3 L-51.1,72.6 L-58.4,69.3 L-65.2,65.6 L-71.6,61.3 L-77.4,56.5 L-82.6,51.4 L-87.2,45.8 L-91.2,39.9 L-94.4,33.7 L-96.9,27.2 L-98.7,20.5 L-99.7,13.7 L-100.0,6.8 L-99.5,-0.2 L-98.3,-7.2 L-96.3,-14.2 L-93.5,-21.0 L-90.1,-27.7 L-86.0,-34.1 L-81.2,-40.3 L-75.8,-46.2 L-69.8,-51.7 L-63.3,-56.9 L-56.3,-61.6 L-48.9,-65.8 L-41.1,-69.6 L-33.0,-72.8 L-24.7,-75.5 L-16.1,-77.5 L-7.5,-79.0 L1.3,-79.9 L10.0,-80.2 L18.6,-79.9 L27.1,-79.0 L35.4,-77.4 L43.4,-75.3 L51.1,-72.6 L58.4,-69.3 L65.2,-65.6 L71.6,-61.3 L77.4,-56.5 L82.6,-51.4 L87.2,-45.8 L91.2,-39.9 L94.4,-33.7 L96.9,-27.2Z" fill="rgb(11,210,11)" stroke="#0a1a0a" stroke-width=".8"/>
<clipPath id="cB_0a"><path d="M20.9,-59.2 L25.9,-58.3 L30.8,-57.1 L35.6,-55.7 L40.2,-53.9 L44.6,-51.9 L48.7,-49.7 L52.7,-47.2 L56.3,-44.5 L59.7,-41.5 L62.8,-38.4 L65.6,-35.0 L68.1,-31.5 L70.3,-27.9 L72.1,-24.1 L73.5,-20.1 L74.6,-16.1 L75.3,-12.0 L75.6,-7.9 L75.6,-3.7 L75.2,0.5 L74.5,4.8 L73.3,8.9 L71.8,13.1 L70.0,17.2 L67.8,21.2 L65.3,25.1 L62.4,28.8 L59.3,32.4 L36.8,17.4 L38.6,15.3 L40.1,13.1 L41.5,10.9 L42.7,8.7 L43.7,6.4 L44.5,4.0 L45.1,1.7 L45.5,-0.7 L45.7,-3.0 L45.7,-5.3 L45.4,-7.7 L45.0,-9.9 L44.4,-12.2 L43.6,-14.4 L42.6,-16.5 L41.4,-18.5 L40.0,-20.5 L38.4,-22.3 L36.7,-24.1 L34.7,-25.8 L32.7,-27.3 L30.5,-28.7 L28.1,-30.0 L25.7,-31.2 L23.1,-32.2 L20.4,-33.1 L17.6,-33.8 L14.7,-34.4Z"/></clipPath>
<clipPath id="cB_0b"><path d="M22.2,-52.8 L27.2,-51.9 L32.1,-50.8 L36.9,-49.3 L41.5,-47.6 L45.9,-45.6 L50.1,-43.3 L54.0,-40.8 L57.7,-38.1 L61.1,-35.2 L64.2,-32.0 L67.0,-28.7 L69.4,-25.2 L71.6,-21.5 L73.4,-17.7 L74.8,-13.8 L75.9,-9.8 L76.6,-5.7 L77.0,-1.5 L76.9,2.7 L76.5,6.9 L75.8,11.1 L74.6,15.3 L73.2,19.5 L71.3,23.5 L69.1,27.5 L66.6,31.4 L63.8,35.2 L60.6,38.8 L38.2,23.7 L39.9,21.7 L41.5,19.5 L42.8,17.3 L44.0,15.0 L45.0,12.7 L45.8,10.4 L46.4,8.1 L46.8,5.7 L47.0,3.4 L47.0,1.0 L46.8,-1.3 L46.4,-3.6 L45.7,-5.8 L44.9,-8.0 L43.9,-10.1 L42.7,-12.1 L41.3,-14.1 L39.7,-16.0 L38.0,-17.7 L36.1,-19.4 L34.0,-20.9 L31.8,-22.4 L29.5,-23.7 L27.0,-24.8 L24.4,-25.8 L21.7,-26.7 L18.9,-27.4 L16.1,-28.0Z"/></clipPath>
<clipPath id="cB_0c"><path d="M30.7,-51.1 L35.0,-49.9 L39.1,-48.5 L43.0,-46.9 L46.8,-45.1 L50.5,-43.1 L53.9,-40.9 L57.2,-38.5 L60.2,-36.0 L63.0,-33.3 L65.6,-30.4 L67.9,-27.4 L70.0,-24.3 L71.8,-21.0 L73.4,-17.7 L74.7,-14.3 L75.7,-10.7 L76.4,-7.2 L76.8,-3.5 L77.0,0.1 L76.9,3.8 L76.5,7.5 L75.8,11.2 L74.8,14.9 L73.5,18.5 L72.0,22.1 L70.2,25.7 L68.1,29.1 L65.8,32.5 L42.8,17.3 L43.8,15.5 L44.6,13.7 L45.3,11.9 L45.9,10.1 L46.4,8.2 L46.7,6.4 L46.9,4.5 L47.0,2.7 L47.0,0.8 L46.8,-1.0 L46.5,-2.8 L46.1,-4.5 L45.6,-6.3 L44.9,-8.0 L44.1,-9.7 L43.2,-11.3 L42.2,-12.9 L41.1,-14.4 L39.8,-15.8 L38.5,-17.2 L37.1,-18.6 L35.5,-19.8 L33.9,-21.0 L32.1,-22.2 L30.3,-23.2 L28.4,-24.2 L26.5,-25.0 L24.4,-25.8Z"/></clipPath>
<clipPath id="cB_0d"><path d="M32.6,-42.3 L36.8,-41.1 L40.9,-39.7 L44.9,-38.1 L48.7,-36.3 L52.3,-34.3 L55.7,-32.1 L59.0,-29.7 L62.0,-27.1 L64.8,-24.4 L67.4,-21.6 L69.7,-18.6 L71.8,-15.5 L73.7,-12.2 L75.2,-8.9 L76.5,-5.4 L77.5,-1.9 L78.2,1.6 L78.7,5.3 L78.8,8.9 L78.7,12.6 L78.3,16.3 L77.6,20.0 L76.6,23.7 L75.4,27.3 L73.8,30.9 L72.0,34.5 L70.0,37.9 L67.6,41.3 L44.7,26.1 L45.6,24.3 L46.4,22.5 L47.2,20.7 L47.7,18.9 L48.2,17.0 L48.5,15.2 L48.8,13.3 L48.9,11.5 L48.8,9.7 L48.6,7.8 L48.4,6.0 L47.9,4.3 L47.4,2.5 L46.7,0.8 L46.0,-0.8 L45.1,-2.5 L44.0,-4.0 L42.9,-5.6 L41.7,-7.0 L40.3,-8.4 L38.9,-9.8 L37.3,-11.0 L35.7,-12.2 L34.0,-13.3 L32.2,-14.4 L30.3,-15.3 L28.3,-16.2 L26.2,-17.0Z"/></clipPath>
<g clip-path="url(#cB_0a)">
<path d="M20.9,-59.2 L25.9,-58.3 L30.8,-57.1 L35.6,-55.7 L40.2,-53.9 L44.6,-51.9 L48.7,-49.7 L52.7,-47.2 L56.3,-44.5 L59.7,-41.5 L62.8,-38.4 L65.6,-35.0 L68.1,-31.5 L70.3,-27.9 L72.1,-24.1 L73.5,-20.1 L74.6,-16.1 L75.3,-12.0 L75.6,-7.9 L75.6,-3.7 L75.2,0.5 L74.5,4.8 L73.3,8.9 L71.8,13.1 L70.0,17.2 L67.8,21.2 L65.3,25.1 L62.4,28.8 L59.3,32.4 L36.8,17.4 L38.6,15.3 L40.1,13.1 L41.5,10.9 L42.7,8.7 L43.7,6.4 L44.5,4.0 L45.1,1.7 L45.5,-0.7 L45.7,-3.0 L45.7,-5.3 L45.4,-7.7 L45.0,-9.9 L44.4,-12.2 L43.6,-14.4 L42.6,-16.5 L41.4,-18.5 L40.0,-20.5 L38.4,-22.3 L36.7,-24.1 L34.7,-25.8 L32.7,-27.3 L30.5,-28.7 L28.1,-30.0 L25.7,-31.2 L23.1,-32.2 L20.4,-33.1 L17.6,-33.8 L14.7,-34.4Z" fill="rgb(10,120,10)"/>
<path d="M20.9,-59.2 L25.9,-58.3 L27.2,-51.9 L22.2,-52.8Z" fill="rgb(10,159,10)" stroke="rgb(10,159,10)" stroke-width=".5"/>
<path d="M25.9,-58.3 L30.8,-57.1 L32.1,-50.8 L27.2,-51.9Z" fill="rgb(10,155,10)" stroke="rgb(10,155,10)" stroke-width=".5"/>
<path d="M30.8,-57.1 L35.6,-55.7 L36.9,-49.3 L32.1,-50.8Z" fill="rgb(10,150,10)" stroke="rgb(10,150,10)" stroke-width=".5"/>
<path d="M35.6,-55.7 L40.2,-53.9 L41.5,-47.6 L36.9,-49.3Z" fill="rgb(9,144,9)" stroke="rgb(9,144,9)" stroke-width=".5"/>
<path d="M40.2,-53.9 L44.6,-51.9 L45.9,-45.6 L41.5,-47.6Z" fill="rgb(9,138,9)" stroke="rgb(9,138,9)" stroke-width=".5"/>
<path d="M44.6,-51.9 L48.7,-49.7 L50.1,-43.3 L45.9,-45.6Z" fill="rgb(9,131,9)" stroke="rgb(9,131,9)" stroke-width=".5"/>
<path d="M48.7,-49.7 L52.7,-47.2 L54.0,-40.8 L50.1,-43.3Z" fill="rgb(9,124,9)" stroke="rgb(9,124,9)" stroke-width=".5"/>
<path d="M52.7,-47.2 L56.3,-44.5 L57.7,-38.1 L54.0,-40.8Z" fill="rgb(9,116,9)" stroke="rgb(9,116,9)" stroke-width=".5"/>
<path d="M56.3,-44.5 L59.7,-41.5 L61.1,-35.2 L57.7,-38.1Z" fill="rgb(9,108,9)" stroke="rgb(9,108,9)" stroke-width=".5"/>
<path d="M59.7,-41.5 L62.8,-38.4 L64.2,-32.0 L61.1,-35.2Z" fill="rgb(9,99,9)" stroke="rgb(9,99,9)" stroke-width=".5"/>
<path d="M62.8,-38.4 L65.6,-35.0 L67.0,-28.7 L64.2,-32.0Z" fill="rgb(8,91,8)" stroke="rgb(8,91,8)" stroke-width=".5"/>
<path d="M65.6,-35.0 L68.1,-31.5 L69.4,-25.2 L67.0,-28.7Z" fill="rgb(8,82,8)" stroke="rgb(8,82,8)" stroke-width=".5"/>
<path d="M68.1,-31.5 L70.3,-27.9 L71.6,-21.5 L69.4,-25.2Z" fill="rgb(8,72,8)" stroke="rgb(8,72,8)" stroke-width=".5"/>
<path d="M70.3,-27.9 L72.1,-24.1 L73.4,-17.7 L71.6,-21.5Z" fill="rgb(8,63,8)" stroke="rgb(8,63,8)" stroke-width=".5"/>
<path d="M72.1,-24.1 L73.5,-20.1 L74.8,-13.8 L73.4,-17.7Z" fill="rgb(8,53,8)" stroke="rgb(8,53,8)" stroke-width=".5"/>
<path d="M73.5,-20.1 L74.6,-16.1 L75.9,-9.8 L74.8,-13.8Z" fill="rgb(8,44,8)" stroke="rgb(8,44,8)" stroke-width=".5"/>
<path d="M36.8,17.4 L38.6,15.3 L39.9,21.7 L38.2,23.7Z" fill="rgb(9,133,9)" stroke="rgb(9,133,9)" stroke-width=".5"/>
<path d="M38.6,15.3 L40.1,13.1 L41.5,19.5 L39.9,21.7Z" fill="rgb(9,127,9)" stroke="rgb(9,127,9)" stroke-width=".5"/>
<path d="M40.1,13.1 L41.5,10.9 L42.8,17.3 L41.5,19.5Z" fill="rgb(9,119,9)" stroke="rgb(9,119,9)" stroke-width=".5"/>
<path d="M41.5,10.9 L42.7,8.7 L44.0,15.0 L42.8,17.3Z" fill="rgb(9,112,9)" stroke="rgb(9,112,9)" stroke-width=".5"/>
<path d="M42.7,8.7 L43.7,6.4 L45.0,12.7 L44.0,15.0Z" fill="rgb(9,104,9)" stroke="rgb(9,104,9)" stroke-width=".5"/>
<path d="M43.7,6.4 L44.5,4.0 L45.8,10.4 L45.0,12.7Z" fill="rgb(9,95,9)" stroke="rgb(9,95,9)" stroke-width=".5"/>
<path d="M44.5,4.0 L45.1,1.7 L46.4,8.1 L45.8,10.4Z" fill="rgb(8,87,8)" stroke="rgb(8,87,8)" stroke-width=".5"/>
<path d="M45.1,1.7 L45.5,-0.7 L46.8,5.7 L46.4,8.1Z" fill="rgb(8,78,8)" stroke="rgb(8,78,8)" stroke-width=".5"/>
<path d="M45.5,-0.7 L45.7,-3.0 L47.0,3.4 L46.8,5.7Z" fill="rgb(8,68,8)" stroke="rgb(8,68,8)" stroke-width=".5"/>
<path d="M45.7,-3.0 L45.7,-5.3 L47.0,1.0 L47.0,3.4Z" fill="rgb(8,59,8)" stroke="rgb(8,59,8)" stroke-width=".5"/>
<path d="M45.7,-5.3 L45.4,-7.7 L46.8,-1.3 L47.0,1.0Z" fill="rgb(8,50,8)" stroke="rgb(8,50,8)" stroke-width=".5"/>
<path d="M45.4,-7.7 L45.0,-9.9 L46.4,-3.6 L46.8,-1.3Z" fill="rgb(8,40,8)" stroke="rgb(8,40,8)" stroke-width=".5"/>
<path d="M14.7,-34.4 L20.9,-59.2 L22.2,-52.8 L16.1,-28.0Z" fill="rgb(8,86,8)" stroke="rgb(8,86,8)" stroke-width=".5"/>
<g clip-path="url(#cB_0b)">
<path d="M22.2,-52.8 L27.2,-51.9 L32.1,-50.8 L36.9,-49.3 L41.5,-47.6 L45.9,-45.6 L50.1,-43.3 L54.0,-40.8 L57.7,-38.1 L61.1,-35.2 L64.2,-32.0 L67.0,-28.7 L69.4,-25.2 L71.6,-21.5 L73.4,-17.7 L74.8,-13.8 L75.9,-9.8 L76.6,-5.7 L77.0,-1.5 L76.9,2.7 L76.5,6.9 L75.8,11.1 L74.6,15.3 L73.2,19.5 L71.3,23.5 L69.1,27.5 L66.6,31.4 L63.8,35.2 L60.6,38.8 L38.2,23.7 L39.9,21.7 L41.5,19.5 L42.8,17.3 L44.0,15.0 L45.0,12.7 L45.8,10.4 L46.4,8.1 L46.8,5.7 L47.0,3.4 L47.0,1.0 L46.8,-1.3 L46.4,-3.6 L45.7,-5.8 L44.9,-8.0 L43.9,-10.1 L42.7,-12.1 L41.3,-14.1 L39.7,-16.0 L38.0,-17.7 L36.1,-19.4 L34.0,-20.9 L31.8,-22.4 L29.5,-23.7 L27.0,-24.8 L24.4,-25.8 L21.7,-26.7 L18.9,-27.4 L16.1,-28.0Z" fill="rgb(11,210,11)" stroke="#0a1a0a" stroke-width="1.2"/>
<g clip-path="url(#cB_0c)">
<path d="M30.7,-51.1 L35.0,-49.9 L39.1,-48.5 L43.0,-46.9 L46.8,-45.1 L50.5,-43.1 L53.9,-40.9 L57.2,-38.5 L60.2,-36.0 L63.0,-33.3 L65.6,-30.4 L67.9,-27.4 L70.0,-24.3 L71.8,-21.0 L73.4,-17.7 L74.7,-14.3 L75.7,-10.7 L76.4,-7.2 L76.8,-3.5 L77.0,0.1 L76.9,3.8 L76.5,7.5 L75.8,11.2 L74.8,14.9 L73.5,18.5 L72.0,22.1 L70.2,25.7 L68.1,29.1 L65.8,32.5 L42.8,17.3 L43.8,15.5 L44.6,13.7 L45.3,11.9 L45.9,10.1 L46.4,8.2 L46.7,6.4 L46.9,4.5 L47.0,2.7 L47.0,0.8 L46.8,-1.0 L46.5,-2.8 L46.1,-4.5 L45.6,-6.3 L44.9,-8.0 L44.1,-9.7 L43.2,-11.3 L42.2,-12.9 L41.1,-14.4 L39.8,-15.8 L38.5,-17.2 L37.1,-18.6 L35.5,-19.8 L33.9,-21.0 L32.1,-22.2 L30.3,-23.2 L28.4,-24.2 L26.5,-25.0 L24.4,-25.8Z" fill="rgb(10,120,10)"/>
<path d="M30.7,-51.1 L35.0,-49.9 L36.8,-41.1 L32.6,-42.3Z" fill="rgb(10,151,10)" stroke="rgb(10,151,10)" stroke-width=".5"/>
<path d="M35.0,-49.9 L39.1,-48.5 L40.9,-39.7 L36.8,-41.1Z" fill="rgb(9,147,9)" stroke="rgb(9,147,9)" stroke-width=".5"/>
<path d="M39.1,-48.5 L43.0,-46.9 L44.9,-38.1 L40.9,-39.7Z" fill="rgb(9,141,9)" stroke="rgb(9,141,9)" stroke-width=".5"/>
<path d="M43.0,-46.9 L46.8,-45.1 L48.7,-36.3 L44.9,-38.1Z" fill="rgb(9,136,9)" stroke="rgb(9,136,9)" stroke-width=".5"/>
<path d="M46.8,-45.1 L50.5,-43.1 L52.3,-34.3 L48.7,-36.3Z" fill="rgb(9,130,9)" stroke="rgb(9,130,9)" stroke-width=".5"/>
<path d="M50.5,-43.1 L53.9,-40.9 L55.7,-32.1 L52.3,-34.3Z" fill="rgb(9,123,9)" stroke="rgb(9,123,9)" stroke-width=".5"/>
<path d="M53.9,-40.9 L57.2,-38.5 L59.0,-29.7 L55.7,-32.1Z" fill="rgb(9,117,9)" stroke="rgb(9,117,9)" stroke-width=".5"/>
<path d="M57.2,-38.5 L60.2,-36.0 L62.0,-27.1 L59.0,-29.7Z" fill="rgb(9,109,9)" stroke="rgb(9,109,9)" stroke-width=".5"/>
<path d="M60.2,-36.0 L63.0,-33.3 L64.8,-24.4 L62.0,-27.1Z" fill="rgb(9,102,9)" stroke="rgb(9,102,9)" stroke-width=".5"/>
<path d="M63.0,-33.3 L65.6,-30.4 L67.4,-21.6 L64.8,-24.4Z" fill="rgb(9,95,9)" stroke="rgb(9,95,9)" stroke-width=".5"/>
<path d="M65.6,-30.4 L67.9,-27.4 L69.7,-18.6 L67.4,-21.6Z" fill="rgb(8,87,8)" stroke="rgb(8,87,8)" stroke-width=".5"/>
<path d="M67.9,-27.4 L70.0,-24.3 L71.8,-15.5 L69.7,-18.6Z" fill="rgb(8,79,8)" stroke="rgb(8,79,8)" stroke-width=".5"/>
<path d="M70.0,-24.3 L71.8,-21.0 L73.7,-12.2 L71.8,-15.5Z" fill="rgb(8,71,8)" stroke="rgb(8,71,8)" stroke-width=".5"/>
<path d="M71.8,-21.0 L73.4,-17.7 L75.2,-8.9 L73.7,-12.2Z" fill="rgb(8,62,8)" stroke="rgb(8,62,8)" stroke-width=".5"/>
<path d="M73.4,-17.7 L74.7,-14.3 L76.5,-5.4 L75.2,-8.9Z" fill="rgb(8,54,8)" stroke="rgb(8,54,8)" stroke-width=".5"/>
<path d="M74.7,-14.3 L75.7,-10.7 L77.5,-1.9 L76.5,-5.4Z" fill="rgb(8,45,8)" stroke="rgb(8,45,8)" stroke-width=".5"/>
<path d="M42.8,17.3 L43.8,15.5 L45.6,24.3 L44.7,26.1Z" fill="rgb(9,113,9)" stroke="rgb(9,113,9)" stroke-width=".5"/>
<path d="M43.8,15.5 L44.6,13.7 L46.4,22.5 L45.6,24.3Z" fill="rgb(9,106,9)" stroke="rgb(9,106,9)" stroke-width=".5"/>
<path d="M44.6,13.7 L45.3,11.9 L47.2,20.7 L46.4,22.5Z" fill="rgb(9,100,9)" stroke="rgb(9,100,9)" stroke-width=".5"/>
<path d="M45.3,11.9 L45.9,10.1 L47.7,18.9 L47.2,20.7Z" fill="rgb(9,93,9)" stroke="rgb(9,93,9)" stroke-width=".5"/>
<path d="M45.9,10.1 L46.4,8.2 L48.2,17.0 L47.7,18.9Z" fill="rgb(8,86,8)" stroke="rgb(8,86,8)" stroke-width=".5"/>
<path d="M46.4,8.2 L46.7,6.4 L48.5,15.2 L48.2,17.0Z" fill="rgb(8,79,8)" stroke="rgb(8,79,8)" stroke-width=".5"/>
<path d="M46.7,6.4 L46.9,4.5 L48.8,13.3 L48.5,15.2Z" fill="rgb(8,72,8)" stroke="rgb(8,72,8)" stroke-width=".5"/>
<path d="M46.9,4.5 L47.0,2.7 L48.9,11.5 L48.8,13.3Z" fill="rgb(8,65,8)" stroke="rgb(8,65,8)" stroke-width=".5"/>
<path d="M47.0,2.7 L47.0,0.8 L48.8,9.7 L48.9,11.5Z" fill="rgb(8,57,8)" stroke="rgb(8,57,8)" stroke-width=".5"/>
<path d="M47.0,0.8 L46.8,-1.0 L48.6,7.8 L48.8,9.7Z" fill="rgb(8,50,8)" stroke="rgb(8,50,8)" stroke-width=".5"/>
<path d="M46.8,-1.0 L46.5,-2.8 L48.4,6.0 L48.6,7.8Z" fill="rgb(8,42,8)" stroke="rgb(8,42,8)" stroke-width=".5"/>
<path d="M24.4,-25.8 L30.7,-51.1 L32.6,-42.3 L26.2,-17.0Z" fill="rgb(8,86,8)" stroke="rgb(8,86,8)" stroke-width=".5"/>
<path d="M30.7,-51.1 L35.0,-49.9 L39.1,-48.5 L43.0,-46.9 L46.8,-45.1 L50.5,-43.1 L53.9,-40.9 L57.2,-38.5 L60.2,-36.0 L63.0,-33.3 L65.6,-30.4 L67.9,-27.4 L70.0,-24.3 L71.8,-21.0 L73.4,-17.7 L74.7,-14.3 L75.7,-10.7 L76.4,-7.2 L76.8,-3.5 L77.0,0.1 L76.9,3.8 L76.5,7.5 L75.8,11.2 L74.8,14.9 L73.5,18.5 L72.0,22.1 L70.2,25.7 L68.1,29.1 L65.8,32.5 L42.8,17.3 L43.8,15.5 L44.6,13.7 L45.3,11.9 L45.9,10.1 L46.4,8.2 L46.7,6.4 L46.9,4.5 L47.0,2.7 L47.0,0.8 L46.8,-1.0 L46.5,-2.8 L46.1,-4.5 L45.6,-6.3 L44.9,-8.0 L44.1,-9.7 L43.2,-11.3 L42.2,-12.9 L41.1,-14.4 L39.8,-15.8 L38.5,-17.2 L37.1,-18.6 L35.5,-19.8 L33.9,-21.0 L32.1,-22.2 L30.3,-23.2 L28.4,-24.2 L26.5,-25.0 L24.4,-25.8Z" fill="none" stroke="#0a1a0a" stroke-width="1.2"/>
<g clip-path="url(#cB_0d)">
<rect x="174" y="49" width="606" height="370" transform="translate(-599,-265.6)" fill="url(#bgfill)"/>
<path d="M32.6,-42.3 L36.8,-41.1 L40.9,-39.7 L44.9,-38.1 L48.7,-36.3 L52.3,-34.3 L55.7,-32.1 L59.0,-29.7 L62.0,-27.1 L64.8,-24.4 L67.4,-21.6 L69.7,-18.6 L71.8,-15.5 L73.7,-12.2 L75.2,-8.9 L76.5,-5.4 L77.5,-1.9 L78.2,1.6 L78.7,5.3 L78.8,8.9 L78.7,12.6 L78.3,16.3 L77.6,20.0 L76.6,23.7 L75.4,27.3 L73.8,30.9 L72.0,34.5 L70.0,37.9 L67.6,41.3 L44.7,26.1 L45.6,24.3 L46.4,22.5 L47.2,20.7 L47.7,18.9 L48.2,17.0 L48.5,15.2 L48.8,13.3 L48.9,11.5 L48.8,9.7 L48.6,7.8 L48.4,6.0 L47.9,4.3 L47.4,2.5 L46.7,0.8 L46.0,-0.8 L45.1,-2.5 L44.0,-4.0 L42.9,-5.6 L41.7,-7.0 L40.3,-8.4 L38.9,-9.8 L37.3,-11.0 L35.7,-12.2 L34.0,-13.3 L32.2,-14.4 L30.3,-15.3 L28.3,-16.2 L26.2,-17.0Z" fill="none" stroke="#0a1a0a" stroke-width="1.2"/>
</g></g></g>
</g>
<path d="M20.9,-59.2 L25.9,-58.3 L30.8,-57.1 L35.6,-55.7 L40.2,-53.9 L44.6,-51.9 L48.7,-49.7 L52.7,-47.2 L56.3,-44.5 L59.7,-41.5 L62.8,-38.4 L65.6,-35.0 L68.1,-31.5 L70.3,-27.9 L72.1,-24.1 L73.5,-20.1 L74.6,-16.1 L75.3,-12.0 L75.6,-7.9 L75.6,-3.7 L75.2,0.5 L74.5,4.8 L73.3,8.9 L71.8,13.1 L70.0,17.2 L67.8,21.2 L65.3,25.1 L62.4,28.8 L59.3,32.4 L36.8,17.4 L38.6,15.3 L40.1,13.1 L41.5,10.9 L42.7,8.7 L43.7,6.4 L44.5,4.0 L45.1,1.7 L45.5,-0.7 L45.7,-3.0 L45.7,-5.3 L45.4,-7.7 L45.0,-9.9 L44.4,-12.2 L43.6,-14.4 L42.6,-16.5 L41.4,-18.5 L40.0,-20.5 L38.4,-22.3 L36.7,-24.1 L34.7,-25.8 L32.7,-27.3 L30.5,-28.7 L28.1,-30.0 L25.7,-31.2 L23.1,-32.2 L20.4,-33.1 L17.6,-33.8 L14.7,-34.4Z" fill="none" stroke="#0a1a0a" stroke-width=".8"/>
<clipPath id="cB_1a"><path d="M52.6,38.8 L48.6,42.0 L44.5,44.9 L40.1,47.6 L35.5,50.0 L30.7,52.2 L25.8,54.2 L20.7,55.9 L15.6,57.3 L10.4,58.5 L5.1,59.3 L-0.2,59.9 L-5.5,60.1 L-10.8,60.1 L-16.0,59.8 L-21.1,59.2 L-26.2,58.2 L-31.1,57.1 L-35.8,55.6 L-40.4,53.8 L-44.8,51.8 L-49.0,49.6 L-52.9,47.0 L-56.5,44.3 L-59.9,41.3 L-63.0,38.2 L-65.8,34.8 L-68.3,31.3 L-70.4,27.6 L-41.8,17.8 L-40.5,19.8 L-39.0,21.7 L-37.3,23.5 L-35.5,25.2 L-33.5,26.8 L-31.3,28.2 L-29.0,29.6 L-26.6,30.8 L-24.0,31.8 L-21.4,32.8 L-18.6,33.5 L-15.8,34.2 L-12.9,34.6 L-9.9,35.0 L-6.9,35.1 L-3.9,35.1 L-0.8,35.0 L2.2,34.7 L5.3,34.2 L8.3,33.6 L11.3,32.8 L14.3,31.9 L17.1,30.9 L19.9,29.7 L22.6,28.3 L25.2,26.9 L27.7,25.3 L30.1,23.6Z"/></clipPath>
<clipPath id="cB_1b"><path d="M53.9,45.2 L50.0,48.3 L45.8,51.2 L41.4,53.9 L36.8,56.4 L32.0,58.6 L27.1,60.6 L22.1,62.3 L16.9,63.7 L11.7,64.8 L6.4,65.7 L1.1,66.2 L-4.2,66.5 L-9.5,66.5 L-14.7,66.1 L-19.8,65.5 L-24.9,64.6 L-29.8,63.4 L-34.5,61.9 L-39.1,60.2 L-43.5,58.2 L-47.6,55.9 L-51.6,53.4 L-55.2,50.7 L-58.6,47.7 L-61.7,44.5 L-64.5,41.2 L-66.9,37.7 L-69.1,34.0 L-40.5,24.1 L-39.2,26.1 L-37.7,28.0 L-36.0,29.8 L-34.1,31.5 L-32.1,33.1 L-30.0,34.6 L-27.7,35.9 L-25.2,37.1 L-22.7,38.2 L-20.0,39.1 L-17.3,39.9 L-14.5,40.5 L-11.6,41.0 L-8.6,41.3 L-5.6,41.5 L-2.5,41.5 L0.5,41.4 L3.6,41.0 L6.6,40.6 L9.6,40.0 L12.6,39.2 L15.6,38.3 L18.4,37.2 L21.2,36.0 L24.0,34.7 L26.6,33.2 L29.1,31.7 L31.4,30.0Z"/></clipPath>
<clipPath id="cB_1c"><path d="M47.0,50.4 L43.2,52.9 L39.3,55.1 L35.2,57.2 L30.9,59.1 L26.6,60.8 L22.2,62.2 L17.7,63.5 L13.1,64.5 L8.5,65.4 L3.8,66.0 L-0.8,66.4 L-5.5,66.5 L-10.1,66.4 L-14.7,66.1 L-19.2,65.6 L-23.6,64.9 L-28.0,63.9 L-32.2,62.7 L-36.3,61.3 L-40.3,59.7 L-44.1,57.9 L-47.7,55.9 L-51.2,53.7 L-54.4,51.3 L-57.5,48.8 L-60.3,46.0 L-62.9,43.2 L-65.2,40.2 L-36.0,29.8 L-34.5,31.2 L-33.0,32.5 L-31.4,33.7 L-29.6,34.8 L-27.8,35.8 L-25.9,36.8 L-24.0,37.7 L-21.9,38.5 L-19.8,39.2 L-17.7,39.8 L-15.5,40.3 L-13.2,40.8 L-10.9,41.1 L-8.6,41.3 L-6.2,41.5 L-3.9,41.5 L-1.5,41.5 L0.9,41.3 L3.3,41.1 L5.7,40.7 L8.1,40.3 L10.5,39.8 L12.8,39.1 L15.1,38.4 L17.4,37.6 L19.6,36.7 L21.8,35.8 L23.9,34.7Z"/></clipPath>
<clipPath id="cB_1d"><path d="M48.8,59.2 L45.0,61.7 L41.1,63.9 L37.0,66.0 L32.8,67.9 L28.4,69.6 L24.0,71.0 L19.5,72.3 L14.9,73.4 L10.3,74.2 L5.7,74.8 L1.0,75.2 L-3.7,75.3 L-8.3,75.3 L-12.8,74.9 L-17.4,74.4 L-21.8,73.7 L-26.1,72.7 L-30.4,71.5 L-34.5,70.1 L-38.5,68.5 L-42.3,66.7 L-45.9,64.7 L-49.3,62.5 L-52.6,60.1 L-55.6,57.6 L-58.5,54.9 L-61.0,52.0 L-63.4,49.0 L-34.1,38.7 L-32.7,40.0 L-31.2,41.3 L-29.5,42.5 L-27.8,43.6 L-26.0,44.7 L-24.1,45.6 L-22.1,46.5 L-20.1,47.3 L-18.0,48.0 L-15.9,48.6 L-13.6,49.1 L-11.4,49.6 L-9.1,49.9 L-6.8,50.1 L-4.4,50.3 L-2.0,50.3 L0.4,50.3 L2.8,50.1 L5.2,49.9 L7.6,49.5 L10.0,49.1 L12.3,48.6 L14.7,47.9 L17.0,47.2 L19.2,46.4 L21.5,45.5 L23.6,44.6 L25.8,43.5Z"/></clipPath>
<g clip-path="url(#cB_1a)">
<path d="M52.6,38.8 L48.6,42.0 L44.5,44.9 L40.1,47.6 L35.5,50.0 L30.7,52.2 L25.8,54.2 L20.7,55.9 L15.6,57.3 L10.4,58.5 L5.1,59.3 L-0.2,59.9 L-5.5,60.1 L-10.8,60.1 L-16.0,59.8 L-21.1,59.2 L-26.2,58.2 L-31.1,57.1 L-35.8,55.6 L-40.4,53.8 L-44.8,51.8 L-49.0,49.6 L-52.9,47.0 L-56.5,44.3 L-59.9,41.3 L-63.0,38.2 L-65.8,34.8 L-68.3,31.3 L-70.4,27.6 L-41.8,17.8 L-40.5,19.8 L-39.0,21.7 L-37.3,23.5 L-35.5,25.2 L-33.5,26.8 L-31.3,28.2 L-29.0,29.6 L-26.6,30.8 L-24.0,31.8 L-21.4,32.8 L-18.6,33.5 L-15.8,34.2 L-12.9,34.6 L-9.9,35.0 L-6.9,35.1 L-3.9,35.1 L-0.8,35.0 L2.2,34.7 L5.3,34.2 L8.3,33.6 L11.3,32.8 L14.3,31.9 L17.1,30.9 L19.9,29.7 L22.6,28.3 L25.2,26.9 L27.7,25.3 L30.1,23.6Z" fill="rgb(10,120,10)"/>
<path d="M-70.4,27.6 L-41.8,17.8 L-40.5,24.1 L-69.1,34.0Z" fill="rgb(10,172,10)" stroke="rgb(10,172,10)" stroke-width=".5"/>
<path d="M-41.8,17.8 L-40.5,19.8 L-39.2,26.1 L-40.5,24.1Z" fill="rgb(8,79,8)" stroke="rgb(8,79,8)" stroke-width=".5"/>
<path d="M-40.5,19.8 L-39.0,21.7 L-37.7,28.0 L-39.2,26.1Z" fill="rgb(8,88,8)" stroke="rgb(8,88,8)" stroke-width=".5"/>
<path d="M-39.0,21.7 L-37.3,23.5 L-36.0,29.8 L-37.7,28.0Z" fill="rgb(9,96,9)" stroke="rgb(9,96,9)" stroke-width=".5"/>
<path d="M-37.3,23.5 L-35.5,25.2 L-34.1,31.5 L-36.0,29.8Z" fill="rgb(9,105,9)" stroke="rgb(9,105,9)" stroke-width=".5"/>
<path d="M-35.5,25.2 L-33.5,26.8 L-32.1,33.1 L-34.1,31.5Z" fill="rgb(9,113,9)" stroke="rgb(9,113,9)" stroke-width=".5"/>
<path d="M-33.5,26.8 L-31.3,28.2 L-30.0,34.6 L-32.1,33.1Z" fill="rgb(9,120,9)" stroke="rgb(9,120,9)" stroke-width=".5"/>
<path d="M-31.3,28.2 L-29.0,29.6 L-27.7,35.9 L-30.0,34.6Z" fill="rgb(9,127,9)" stroke="rgb(9,127,9)" stroke-width=".5"/>
<path d="M-29.0,29.6 L-26.6,30.8 L-25.2,37.1 L-27.7,35.9Z" fill="rgb(9,134,9)" stroke="rgb(9,134,9)" stroke-width=".5"/>
<path d="M-26.6,30.8 L-24.0,31.8 L-22.7,38.2 L-25.2,37.1Z" fill="rgb(9,140,9)" stroke="rgb(9,140,9)" stroke-width=".5"/>
<path d="M-24.0,31.8 L-21.4,32.8 L-20.0,39.1 L-22.7,38.2Z" fill="rgb(9,146,9)" stroke="rgb(9,146,9)" stroke-width=".5"/>
<path d="M-21.4,32.8 L-18.6,33.5 L-17.3,39.9 L-20.0,39.1Z" fill="rgb(10,151,10)" stroke="rgb(10,151,10)" stroke-width=".5"/>
<path d="M-18.6,33.5 L-15.8,34.2 L-14.5,40.5 L-17.3,39.9Z" fill="rgb(10,156,10)" stroke="rgb(10,156,10)" stroke-width=".5"/>
<path d="M-15.8,34.2 L-12.9,34.6 L-11.6,41.0 L-14.5,40.5Z" fill="rgb(10,160,10)" stroke="rgb(10,160,10)" stroke-width=".5"/>
<path d="M-12.9,34.6 L-9.9,35.0 L-8.6,41.3 L-11.6,41.0Z" fill="rgb(10,164,10)" stroke="rgb(10,164,10)" stroke-width=".5"/>
<path d="M-9.9,35.0 L-6.9,35.1 L-5.6,41.5 L-8.6,41.3Z" fill="rgb(10,167,10)" stroke="rgb(10,167,10)" stroke-width=".5"/>
<path d="M-6.9,35.1 L-3.9,35.1 L-2.5,41.5 L-5.6,41.5Z" fill="rgb(10,170,10)" stroke="rgb(10,170,10)" stroke-width=".5"/>
<path d="M-3.9,35.1 L-0.8,35.0 L0.5,41.4 L-2.5,41.5Z" fill="rgb(10,172,10)" stroke="rgb(10,172,10)" stroke-width=".5"/>
<path d="M-0.8,35.0 L2.2,34.7 L3.6,41.0 L0.5,41.4Z" fill="rgb(10,173,10)" stroke="rgb(10,173,10)" stroke-width=".5"/>
<path d="M2.2,34.7 L5.3,34.2 L6.6,40.6 L3.6,41.0Z" fill="rgb(10,174,10)" stroke="rgb(10,174,10)" stroke-width=".5"/>
<path d="M5.3,34.2 L8.3,33.6 L9.6,40.0 L6.6,40.6Z" fill="rgb(10,174,10)" stroke="rgb(10,174,10)" stroke-width=".5"/>
<path d="M8.3,33.6 L11.3,32.8 L12.6,39.2 L9.6,40.0Z" fill="rgb(10,174,10)" stroke="rgb(10,174,10)" stroke-width=".5"/>
<path d="M11.3,32.8 L14.3,31.9 L15.6,38.3 L12.6,39.2Z" fill="rgb(10,173,10)" stroke="rgb(10,173,10)" stroke-width=".5"/>
<path d="M14.3,31.9 L17.1,30.9 L18.4,37.2 L15.6,38.3Z" fill="rgb(10,172,10)" stroke="rgb(10,172,10)" stroke-width=".5"/>
<path d="M17.1,30.9 L19.9,29.7 L21.2,36.0 L18.4,37.2Z" fill="rgb(10,170,10)" stroke="rgb(10,170,10)" stroke-width=".5"/>
<path d="M19.9,29.7 L22.6,28.3 L24.0,34.7 L21.2,36.0Z" fill="rgb(10,167,10)" stroke="rgb(10,167,10)" stroke-width=".5"/>
<path d="M22.6,28.3 L25.2,26.9 L26.6,33.2 L24.0,34.7Z" fill="rgb(10,164,10)" stroke="rgb(10,164,10)" stroke-width=".5"/>
<path d="M25.2,26.9 L27.7,25.3 L29.1,31.7 L26.6,33.2Z" fill="rgb(10,161,10)" stroke="rgb(10,161,10)" stroke-width=".5"/>
<path d="M27.7,25.3 L30.1,23.6 L31.4,30.0 L29.1,31.7Z" fill="rgb(10,157,10)" stroke="rgb(10,157,10)" stroke-width=".5"/>
<path d="M30.1,23.6 L52.6,38.8 L53.9,45.2 L31.4,30.0Z" fill="rgb(9,120,9)" stroke="rgb(9,120,9)" stroke-width=".5"/>
<g clip-path="url(#cB_1b)">
<path d="M53.9,45.2 L50.0,48.3 L45.8,51.2 L41.4,53.9 L36.8,56.4 L32.0,58.6 L27.1,60.6 L22.1,62.3 L16.9,63.7 L11.7,64.8 L6.4,65.7 L1.1,66.2 L-4.2,66.5 L-9.5,66.5 L-14.7,66.1 L-19.8,65.5 L-24.9,64.6 L-29.8,63.4 L-34.5,61.9 L-39.1,60.2 L-43.5,58.2 L-47.6,55.9 L-51.6,53.4 L-55.2,50.7 L-58.6,47.7 L-61.7,44.5 L-64.5,41.2 L-66.9,37.7 L-69.1,34.0 L-40.5,24.1 L-39.2,26.1 L-37.7,28.0 L-36.0,29.8 L-34.1,31.5 L-32.1,33.1 L-30.0,34.6 L-27.7,35.9 L-25.2,37.1 L-22.7,38.2 L-20.0,39.1 L-17.3,39.9 L-14.5,40.5 L-11.6,41.0 L-8.6,41.3 L-5.6,41.5 L-2.5,41.5 L0.5,41.4 L3.6,41.0 L6.6,40.6 L9.6,40.0 L12.6,39.2 L15.6,38.3 L18.4,37.2 L21.2,36.0 L24.0,34.7 L26.6,33.2 L29.1,31.7 L31.4,30.0Z" fill="rgb(11,210,11)" stroke="#0a1a0a" stroke-width="1.2"/>
<g clip-path="url(#cB_1c)">
<path d="M47.0,50.4 L43.2,52.9 L39.3,55.1 L35.2,57.2 L30.9,59.1 L26.6,60.8 L22.2,62.2 L17.7,63.5 L13.1,64.5 L8.5,65.4 L3.8,66.0 L-0.8,66.4 L-5.5,66.5 L-10.1,66.4 L-14.7,66.1 L-19.2,65.6 L-23.6,64.9 L-28.0,63.9 L-32.2,62.7 L-36.3,61.3 L-40.3,59.7 L-44.1,57.9 L-47.7,55.9 L-51.2,53.7 L-54.4,51.3 L-57.5,48.8 L-60.3,46.0 L-62.9,43.2 L-65.2,40.2 L-36.0,29.8 L-34.5,31.2 L-33.0,32.5 L-31.4,33.7 L-29.6,34.8 L-27.8,35.8 L-25.9,36.8 L-24.0,37.7 L-21.9,38.5 L-19.8,39.2 L-17.7,39.8 L-15.5,40.3 L-13.2,40.8 L-10.9,41.1 L-8.6,41.3 L-6.2,41.5 L-3.9,41.5 L-1.5,41.5 L0.9,41.3 L3.3,41.1 L5.7,40.7 L8.1,40.3 L10.5,39.8 L12.8,39.1 L15.1,38.4 L17.4,37.6 L19.6,36.7 L21.8,35.8 L23.9,34.7Z" fill="rgb(10,120,10)"/>
<path d="M-65.2,40.2 L-36.0,29.8 L-34.1,38.7 L-63.4,49.0Z" fill="rgb(10,172,10)" stroke="rgb(10,172,10)" stroke-width=".5"/>
<path d="M-36.0,29.8 L-34.5,31.2 L-32.7,40.0 L-34.1,38.7Z" fill="rgb(9,104,9)" stroke="rgb(9,104,9)" stroke-width=".5"/>
<path d="M-34.5,31.2 L-33.0,32.5 L-31.2,41.3 L-32.7,40.0Z" fill="rgb(9,110,9)" stroke="rgb(9,110,9)" stroke-width=".5"/>
<path d="M-33.0,32.5 L-31.4,33.7 L-29.5,42.5 L-31.2,41.3Z" fill="rgb(9,116,9)" stroke="rgb(9,116,9)" stroke-width=".5"/>
<path d="M-31.4,33.7 L-29.6,34.8 L-27.8,43.6 L-29.5,42.5Z" fill="rgb(9,122,9)" stroke="rgb(9,122,9)" stroke-width=".5"/>
<path d="M-29.6,34.8 L-27.8,35.8 L-26.0,44.7 L-27.8,43.6Z" fill="rgb(9,128,9)" stroke="rgb(9,128,9)" stroke-width=".5"/>
<path d="M-27.8,35.8 L-25.9,36.8 L-24.1,45.6 L-26.0,44.7Z" fill="rgb(9,133,9)" stroke="rgb(9,133,9)" stroke-width=".5"/>
<path d="M-25.9,36.8 L-24.0,37.7 L-22.1,46.5 L-24.1,45.6Z" fill="rgb(9,138,9)" stroke="rgb(9,138,9)" stroke-width=".5"/>
<path d="M-24.0,37.7 L-21.9,38.5 L-20.1,47.3 L-22.1,46.5Z" fill="rgb(9,143,9)" stroke="rgb(9,143,9)" stroke-width=".5"/>
<path d="M-21.9,38.5 L-19.8,39.2 L-18.0,48.0 L-20.1,47.3Z" fill="rgb(9,147,9)" stroke="rgb(9,147,9)" stroke-width=".5"/>
<path d="M-19.8,39.2 L-17.7,39.8 L-15.9,48.6 L-18.0,48.0Z" fill="rgb(10,151,10)" stroke="rgb(10,151,10)" stroke-width=".5"/>
<path d="M-17.7,39.8 L-15.5,40.3 L-13.6,49.1 L-15.9,48.6Z" fill="rgb(10,155,10)" stroke="rgb(10,155,10)" stroke-width=".5"/>
<path d="M-15.5,40.3 L-13.2,40.8 L-11.4,49.6 L-13.6,49.1Z" fill="rgb(10,158,10)" stroke="rgb(10,158,10)" stroke-width=".5"/>
<path d="M-13.2,40.8 L-10.9,41.1 L-9.1,49.9 L-11.4,49.6Z" fill="rgb(10,162,10)" stroke="rgb(10,162,10)" stroke-width=".5"/>
<path d="M-10.9,41.1 L-8.6,41.3 L-6.8,50.1 L-9.1,49.9Z" fill="rgb(10,164,10)" stroke="rgb(10,164,10)" stroke-width=".5"/>
<path d="M-8.6,41.3 L-6.2,41.5 L-4.4,50.3 L-6.8,50.1Z" fill="rgb(10,167,10)" stroke="rgb(10,167,10)" stroke-width=".5"/>
<path d="M-6.2,41.5 L-3.9,41.5 L-2.0,50.3 L-4.4,50.3Z" fill="rgb(10,169,10)" stroke="rgb(10,169,10)" stroke-width=".5"/>
<path d="M-3.9,41.5 L-1.5,41.5 L0.4,50.3 L-2.0,50.3Z" fill="rgb(10,171,10)" stroke="rgb(10,171,10)" stroke-width=".5"/>
<path d="M-1.5,41.5 L0.9,41.3 L2.8,50.1 L0.4,50.3Z" fill="rgb(10,172,10)" stroke="rgb(10,172,10)" stroke-width=".5"/>
<path d="M0.9,41.3 L3.3,41.1 L5.2,49.9 L2.8,50.1Z" fill="rgb(10,173,10)" stroke="rgb(10,173,10)" stroke-width=".5"/>
<path d="M3.3,41.1 L5.7,40.7 L7.6,49.5 L5.2,49.9Z" fill="rgb(10,174,10)" stroke="rgb(10,174,10)" stroke-width=".5"/>
<path d="M5.7,40.7 L8.1,40.3 L10.0,49.1 L7.6,49.5Z" fill="rgb(10,174,10)" stroke="rgb(10,174,10)" stroke-width=".5"/>
<path d="M8.1,40.3 L10.5,39.8 L12.3,48.6 L10.0,49.1Z" fill="rgb(10,174,10)" stroke="rgb(10,174,10)" stroke-width=".5"/>
<path d="M10.5,39.8 L12.8,39.1 L14.7,47.9 L12.3,48.6Z" fill="rgb(10,174,10)" stroke="rgb(10,174,10)" stroke-width=".5"/>
<path d="M12.8,39.1 L15.1,38.4 L17.0,47.2 L14.7,47.9Z" fill="rgb(10,173,10)" stroke="rgb(10,173,10)" stroke-width=".5"/>
<path d="M15.1,38.4 L17.4,37.6 L19.2,46.4 L17.0,47.2Z" fill="rgb(10,172,10)" stroke="rgb(10,172,10)" stroke-width=".5"/>
<path d="M17.4,37.6 L19.6,36.7 L21.5,45.5 L19.2,46.4Z" fill="rgb(10,171,10)" stroke="rgb(10,171,10)" stroke-width=".5"/>
<path d="M19.6,36.7 L21.8,35.8 L23.6,44.6 L21.5,45.5Z" fill="rgb(10,169,10)" stroke="rgb(10,169,10)" stroke-width=".5"/>
<path d="M21.8,35.8 L23.9,34.7 L25.8,43.5 L23.6,44.6Z" fill="rgb(10,167,10)" stroke="rgb(10,167,10)" stroke-width=".5"/>
<path d="M23.9,34.7 L47.0,50.4 L48.8,59.2 L25.8,43.5Z" fill="rgb(9,120,9)" stroke="rgb(9,120,9)" stroke-width=".5"/>
<path d="M47.0,50.4 L43.2,52.9 L39.3,55.1 L35.2,57.2 L30.9,59.1 L26.6,60.8 L22.2,62.2 L17.7,63.5 L13.1,64.5 L8.5,65.4 L3.8,66.0 L-0.8,66.4 L-5.5,66.5 L-10.1,66.4 L-14.7,66.1 L-19.2,65.6 L-23.6,64.9 L-28.0,63.9 L-32.2,62.7 L-36.3,61.3 L-40.3,59.7 L-44.1,57.9 L-47.7,55.9 L-51.2,53.7 L-54.4,51.3 L-57.5,48.8 L-60.3,46.0 L-62.9,43.2 L-65.2,40.2 L-36.0,29.8 L-34.5,31.2 L-33.0,32.5 L-31.4,33.7 L-29.6,34.8 L-27.8,35.8 L-25.9,36.8 L-24.0,37.7 L-21.9,38.5 L-19.8,39.2 L-17.7,39.8 L-15.5,40.3 L-13.2,40.8 L-10.9,41.1 L-8.6,41.3 L-6.2,41.5 L-3.9,41.5 L-1.5,41.5 L0.9,41.3 L3.3,41.1 L5.7,40.7 L8.1,40.3 L10.5,39.8 L12.8,39.1 L15.1,38.4 L17.4,37.6 L19.6,36.7 L21.8,35.8 L23.9,34.7Z" fill="none" stroke="#0a1a0a" stroke-width="1.2"/>
<g clip-path="url(#cB_1d)">
<rect x="174" y="49" width="606" height="370" transform="translate(-599,-265.6)" fill="url(#bgfill)"/>
<path d="M48.8,59.2 L45.0,61.7 L41.1,63.9 L37.0,66.0 L32.8,67.9 L28.4,69.6 L24.0,71.0 L19.5,72.3 L14.9,73.4 L10.3,74.2 L5.7,74.8 L1.0,75.2 L-3.7,75.3 L-8.3,75.3 L-12.8,74.9 L-17.4,74.4 L-21.8,73.7 L-26.1,72.7 L-30.4,71.5 L-34.5,70.1 L-38.5,68.5 L-42.3,66.7 L-45.9,64.7 L-49.3,62.5 L-52.6,60.1 L-55.6,57.6 L-58.5,54.9 L-61.0,52.0 L-63.4,49.0 L-34.1,38.7 L-32.7,40.0 L-31.2,41.3 L-29.5,42.5 L-27.8,43.6 L-26.0,44.7 L-24.1,45.6 L-22.1,46.5 L-20.1,47.3 L-18.0,48.0 L-15.9,48.6 L-13.6,49.1 L-11.4,49.6 L-9.1,49.9 L-6.8,50.1 L-4.4,50.3 L-2.0,50.3 L0.4,50.3 L2.8,50.1 L5.2,49.9 L7.6,49.5 L10.0,49.1 L12.3,48.6 L14.7,47.9 L17.0,47.2 L19.2,46.4 L21.5,45.5 L23.6,44.6 L25.8,43.5Z" fill="none" stroke="#0a1a0a" stroke-width="1.2"/>
</g></g></g>
</g>
<path d="M52.6,38.8 L48.6,42.0 L44.5,44.9 L40.1,47.6 L35.5,50.0 L30.7,52.2 L25.8,54.2 L20.7,55.9 L15.6,57.3 L10.4,58.5 L5.1,59.3 L-0.2,59.9 L-5.5,60.1 L-10.8,60.1 L-16.0,59.8 L-21.1,59.2 L-26.2,58.2 L-31.1,57.1 L-35.8,55.6 L-40.4,53.8 L-44.8,51.8 L-49.0,49.6 L-52.9,47.0 L-56.5,44.3 L-59.9,41.3 L-63.0,38.2 L-65.8,34.8 L-68.3,31.3 L-70.4,27.6 L-41.8,17.8 L-40.5,19.8 L-39.0,21.7 L-37.3,23.5 L-35.5,25.2 L-33.5,26.8 L-31.3,28.2 L-29.0,29.6 L-26.6,30.8 L-24.0,31.8 L-21.4,32.8 L-18.6,33.5 L-15.8,34.2 L-12.9,34.6 L-9.9,35.0 L-6.9,35.1 L-3.9,35.1 L-0.8,35.0 L2.2,34.7 L5.3,34.2 L8.3,33.6 L11.3,32.8 L14.3,31.9 L17.1,30.9 L19.9,29.7 L22.6,28.3 L25.2,26.9 L27.7,25.3 L30.1,23.6Z" fill="none" stroke="#0a1a0a" stroke-width=".8"/>
<clipPath id="cB_2a"><path d="M-73.4,20.4 L-74.5,16.3 L-75.3,12.3 L-75.6,8.1 L-75.6,3.9 L-75.3,-0.3 L-74.5,-4.5 L-73.4,-8.7 L-71.9,-12.9 L-70.1,-16.9 L-67.9,-20.9 L-65.4,-24.8 L-62.6,-28.6 L-59.5,-32.2 L-56.1,-35.7 L-52.4,-39.0 L-48.4,-42.1 L-44.2,-45.0 L-39.8,-47.7 L-35.2,-50.2 L-30.4,-52.4 L-25.5,-54.3 L-20.4,-56.0 L-15.3,-57.4 L-10.1,-58.5 L-4.8,-59.3 L0.5,-59.9 L5.8,-60.1 L11.1,-60.1 L5.0,-35.2 L1.9,-35.1 L-1.1,-34.8 L-4.2,-34.4 L-7.2,-33.8 L-10.2,-33.1 L-13.2,-32.3 L-16.1,-31.3 L-18.9,-30.1 L-21.7,-28.8 L-24.3,-27.4 L-26.8,-25.9 L-29.2,-24.2 L-31.5,-22.5 L-33.7,-20.6 L-35.7,-18.7 L-37.5,-16.6 L-39.2,-14.5 L-40.7,-12.3 L-42.0,-10.1 L-43.1,-7.8 L-44.0,-5.5 L-44.7,-3.2 L-45.3,-0.8 L-45.6,1.5 L-45.7,3.9 L-45.6,6.2 L-45.3,8.5 L-44.8,10.8Z"/></clipPath>
<clipPath id="cB_2b"><path d="M-72.1,26.7 L-73.2,22.7 L-73.9,18.6 L-74.3,14.5 L-74.3,10.3 L-73.9,6.1 L-73.2,1.8 L-72.1,-2.3 L-70.6,-6.5 L-68.8,-10.6 L-66.6,-14.6 L-64.1,-18.5 L-61.3,-22.2 L-58.2,-25.9 L-54.7,-29.4 L-51.0,-32.7 L-47.1,-35.8 L-42.9,-38.7 L-38.5,-41.4 L-33.9,-43.8 L-29.1,-46.0 L-24.2,-47.9 L-19.1,-49.6 L-14.0,-51.0 L-8.7,-52.1 L-3.5,-53.0 L1.8,-53.5 L7.1,-53.8 L12.4,-53.7 L6.3,-28.8 L3.3,-28.7 L0.2,-28.4 L-2.9,-28.0 L-5.9,-27.5 L-8.9,-26.8 L-11.9,-25.9 L-14.8,-24.9 L-17.6,-23.7 L-20.3,-22.5 L-23.0,-21.1 L-25.5,-19.5 L-27.9,-17.9 L-30.2,-16.1 L-32.4,-14.3 L-34.3,-12.3 L-36.2,-10.3 L-37.8,-8.2 L-39.3,-6.0 L-40.6,-3.7 L-41.8,-1.5 L-42.7,0.8 L-43.4,3.2 L-43.9,5.5 L-44.3,7.9 L-44.4,10.2 L-44.3,12.6 L-44.0,14.9 L-43.5,17.1Z"/></clipPath>
<clipPath id="cB_2c"><path d="M-73.8,19.8 L-74.2,16.2 L-74.4,12.5 L-74.2,8.8 L-73.8,5.1 L-73.1,1.4 L-72.1,-2.3 L-70.8,-5.9 L-69.3,-9.5 L-67.5,-13.0 L-65.4,-16.5 L-63.1,-19.9 L-60.5,-23.1 L-57.8,-26.3 L-54.7,-29.4 L-51.5,-32.3 L-48.1,-35.0 L-44.4,-37.6 L-40.7,-40.1 L-36.7,-42.3 L-32.6,-44.4 L-28.4,-46.3 L-24.1,-48.0 L-19.6,-49.5 L-15.1,-50.7 L-10.5,-51.8 L-5.9,-52.6 L-1.3,-53.2 L3.4,-53.6 L-2.9,-28.0 L-5.3,-27.6 L-7.6,-27.1 L-10.0,-26.5 L-12.3,-25.8 L-14.6,-25.0 L-16.8,-24.1 L-19.0,-23.1 L-21.1,-22.1 L-23.2,-20.9 L-25.2,-19.7 L-27.1,-18.5 L-28.9,-17.1 L-30.7,-15.7 L-32.4,-14.3 L-33.9,-12.7 L-35.4,-11.2 L-36.8,-9.5 L-38.1,-7.9 L-39.2,-6.1 L-40.3,-4.4 L-41.2,-2.6 L-42.0,-0.8 L-42.7,1.0 L-43.3,2.8 L-43.8,4.7 L-44.1,6.5 L-44.3,8.4 L-44.4,10.2Z"/></clipPath>
<clipPath id="cB_2d"><path d="M-71.9,28.6 L-72.4,25.0 L-72.5,21.3 L-72.4,17.6 L-72.0,13.9 L-71.3,10.2 L-70.3,6.6 L-69.0,2.9 L-67.5,-0.7 L-65.7,-4.2 L-63.6,-7.7 L-61.3,-11.1 L-58.7,-14.3 L-55.9,-17.5 L-52.9,-20.5 L-49.7,-23.5 L-46.2,-26.2 L-42.6,-28.8 L-38.8,-31.3 L-34.9,-33.5 L-30.8,-35.6 L-26.6,-37.5 L-22.2,-39.2 L-17.8,-40.7 L-13.3,-41.9 L-8.7,-43.0 L-4.1,-43.8 L0.6,-44.4 L5.2,-44.8 L-1.1,-19.2 L-3.4,-18.8 L-5.8,-18.3 L-8.2,-17.7 L-10.5,-17.0 L-12.7,-16.2 L-15.0,-15.3 L-17.1,-14.3 L-19.3,-13.3 L-21.3,-12.1 L-23.3,-10.9 L-25.2,-9.7 L-27.1,-8.3 L-28.8,-6.9 L-30.5,-5.4 L-32.1,-3.9 L-33.6,-2.3 L-35.0,-0.7 L-36.2,1.0 L-37.4,2.7 L-38.4,4.4 L-39.4,6.2 L-40.2,8.0 L-40.9,9.8 L-41.5,11.6 L-41.9,13.5 L-42.3,15.3 L-42.5,17.2 L-42.5,19.0Z"/></clipPath>
<g clip-path="url(#cB_2a)">
<path d="M-73.4,20.4 L-74.5,16.3 L-75.3,12.3 L-75.6,8.1 L-75.6,3.9 L-75.3,-0.3 L-74.5,-4.5 L-73.4,-8.7 L-71.9,-12.9 L-70.1,-16.9 L-67.9,-20.9 L-65.4,-24.8 L-62.6,-28.6 L-59.5,-32.2 L-56.1,-35.7 L-52.4,-39.0 L-48.4,-42.1 L-44.2,-45.0 L-39.8,-47.7 L-35.2,-50.2 L-30.4,-52.4 L-25.5,-54.3 L-20.4,-56.0 L-15.3,-57.4 L-10.1,-58.5 L-4.8,-59.3 L0.5,-59.9 L5.8,-60.1 L11.1,-60.1 L5.0,-35.2 L1.9,-35.1 L-1.1,-34.8 L-4.2,-34.4 L-7.2,-33.8 L-10.2,-33.1 L-13.2,-32.3 L-16.1,-31.3 L-18.9,-30.1 L-21.7,-28.8 L-24.3,-27.4 L-26.8,-25.9 L-29.2,-24.2 L-31.5,-22.5 L-33.7,-20.6 L-35.7,-18.7 L-37.5,-16.6 L-39.2,-14.5 L-40.7,-12.3 L-42.0,-10.1 L-43.1,-7.8 L-44.0,-5.5 L-44.7,-3.2 L-45.3,-0.8 L-45.6,1.5 L-45.7,3.9 L-45.6,6.2 L-45.3,8.5 L-44.8,10.8Z" fill="rgb(10,120,10)"/>
<path d="M-74.5,16.3 L-75.3,12.3 L-73.9,18.6 L-73.2,22.7Z" fill="rgb(8,40,8)" stroke="rgb(8,40,8)" stroke-width=".5"/>
<path d="M-75.3,12.3 L-75.6,8.1 L-74.3,14.5 L-73.9,18.6Z" fill="rgb(8,50,8)" stroke="rgb(8,50,8)" stroke-width=".5"/>
<path d="M-75.6,8.1 L-75.6,3.9 L-74.3,10.3 L-74.3,14.5Z" fill="rgb(8,60,8)" stroke="rgb(8,60,8)" stroke-width=".5"/>
<path d="M-75.6,3.9 L-75.3,-0.3 L-73.9,6.1 L-74.3,10.3Z" fill="rgb(8,69,8)" stroke="rgb(8,69,8)" stroke-width=".5"/>
<path d="M-75.3,-0.3 L-74.5,-4.5 L-73.2,1.8 L-73.9,6.1Z" fill="rgb(8,78,8)" stroke="rgb(8,78,8)" stroke-width=".5"/>
<path d="M-74.5,-4.5 L-73.4,-8.7 L-72.1,-2.3 L-73.2,1.8Z" fill="rgb(8,88,8)" stroke="rgb(8,88,8)" stroke-width=".5"/>
<path d="M-73.4,-8.7 L-71.9,-12.9 L-70.6,-6.5 L-72.1,-2.3Z" fill="rgb(9,96,9)" stroke="rgb(9,96,9)" stroke-width=".5"/>
<path d="M-71.9,-12.9 L-70.1,-16.9 L-68.8,-10.6 L-70.6,-6.5Z" fill="rgb(9,105,9)" stroke="rgb(9,105,9)" stroke-width=".5"/>
<path d="M-70.1,-16.9 L-67.9,-20.9 L-66.6,-14.6 L-68.8,-10.6Z" fill="rgb(9,113,9)" stroke="rgb(9,113,9)" stroke-width=".5"/>
<path d="M-67.9,-20.9 L-65.4,-24.8 L-64.1,-18.5 L-66.6,-14.6Z" fill="rgb(9,121,9)" stroke="rgb(9,121,9)" stroke-width=".5"/>
<path d="M-65.4,-24.8 L-62.6,-28.6 L-61.3,-22.2 L-64.1,-18.5Z" fill="rgb(9,128,9)" stroke="rgb(9,128,9)" stroke-width=".5"/>
<path d="M-62.6,-28.6 L-59.5,-32.2 L-58.2,-25.9 L-61.3,-22.2Z" fill="rgb(9,135,9)" stroke="rgb(9,135,9)" stroke-width=".5"/>
<path d="M-59.5,-32.2 L-56.1,-35.7 L-54.7,-29.4 L-58.2,-25.9Z" fill="rgb(9,142,9)" stroke="rgb(9,142,9)" stroke-width=".5"/>
<path d="M-56.1,-35.7 L-52.4,-39.0 L-51.0,-32.7 L-54.7,-29.4Z" fill="rgb(9,148,9)" stroke="rgb(9,148,9)" stroke-width=".5"/>
<path d="M-52.4,-39.0 L-48.4,-42.1 L-47.1,-35.8 L-51.0,-32.7Z" fill="rgb(10,153,10)" stroke="rgb(10,153,10)" stroke-width=".5"/>
<path d="M-48.4,-42.1 L-44.2,-45.0 L-42.9,-38.7 L-47.1,-35.8Z" fill="rgb(10,158,10)" stroke="rgb(10,158,10)" stroke-width=".5"/>
<path d="M-44.2,-45.0 L-39.8,-47.7 L-38.5,-41.4 L-42.9,-38.7Z" fill="rgb(10,162,10)" stroke="rgb(10,162,10)" stroke-width=".5"/>
<path d="M-39.8,-47.7 L-35.2,-50.2 L-33.9,-43.8 L-38.5,-41.4Z" fill="rgb(10,166,10)" stroke="rgb(10,166,10)" stroke-width=".5"/>
<path d="M-35.2,-50.2 L-30.4,-52.4 L-29.1,-46.0 L-33.9,-43.8Z" fill="rgb(10,169,10)" stroke="rgb(10,169,10)" stroke-width=".5"/>
<path d="M-30.4,-52.4 L-25.5,-54.3 L-24.2,-47.9 L-29.1,-46.0Z" fill="rgb(10,171,10)" stroke="rgb(10,171,10)" stroke-width=".5"/>
<path d="M-25.5,-54.3 L-20.4,-56.0 L-19.1,-49.6 L-24.2,-47.9Z" fill="rgb(10,173,10)" stroke="rgb(10,173,10)" stroke-width=".5"/>
<path d="M-20.4,-56.0 L-15.3,-57.4 L-14.0,-51.0 L-19.1,-49.6Z" fill="rgb(10,174,10)" stroke="rgb(10,174,10)" stroke-width=".5"/>
<path d="M-15.3,-57.4 L-10.1,-58.5 L-8.7,-52.1 L-14.0,-51.0Z" fill="rgb(10,174,10)" stroke="rgb(10,174,10)" stroke-width=".5"/>
<path d="M-10.1,-58.5 L-4.8,-59.3 L-3.5,-53.0 L-8.7,-52.1Z" fill="rgb(10,174,10)" stroke="rgb(10,174,10)" stroke-width=".5"/>
<path d="M-4.8,-59.3 L0.5,-59.9 L1.8,-53.5 L-3.5,-53.0Z" fill="rgb(10,173,10)" stroke="rgb(10,173,10)" stroke-width=".5"/>
<path d="M0.5,-59.9 L5.8,-60.1 L7.1,-53.8 L1.8,-53.5Z" fill="rgb(10,171,10)" stroke="rgb(10,171,10)" stroke-width=".5"/>
<path d="M5.8,-60.1 L11.1,-60.1 L12.4,-53.7 L7.1,-53.8Z" fill="rgb(10,169,10)" stroke="rgb(10,169,10)" stroke-width=".5"/>
<path d="M-45.3,8.5 L-44.8,10.8 L-43.5,17.1 L-44.0,14.9Z" fill="rgb(8,39,8)" stroke="rgb(8,39,8)" stroke-width=".5"/>
<g clip-path="url(#cB_2b)">
<path d="M-72.1,26.7 L-73.2,22.7 L-73.9,18.6 L-74.3,14.5 L-74.3,10.3 L-73.9,6.1 L-73.2,1.8 L-72.1,-2.3 L-70.6,-6.5 L-68.8,-10.6 L-66.6,-14.6 L-64.1,-18.5 L-61.3,-22.2 L-58.2,-25.9 L-54.7,-29.4 L-51.0,-32.7 L-47.1,-35.8 L-42.9,-38.7 L-38.5,-41.4 L-33.9,-43.8 L-29.1,-46.0 L-24.2,-47.9 L-19.1,-49.6 L-14.0,-51.0 L-8.7,-52.1 L-3.5,-53.0 L1.8,-53.5 L7.1,-53.8 L12.4,-53.7 L6.3,-28.8 L3.3,-28.7 L0.2,-28.4 L-2.9,-28.0 L-5.9,-27.5 L-8.9,-26.8 L-11.9,-25.9 L-14.8,-24.9 L-17.6,-23.7 L-20.3,-22.5 L-23.0,-21.1 L-25.5,-19.5 L-27.9,-17.9 L-30.2,-16.1 L-32.4,-14.3 L-34.3,-12.3 L-36.2,-10.3 L-37.8,-8.2 L-39.3,-6.0 L-40.6,-3.7 L-41.8,-1.5 L-42.7,0.8 L-43.4,3.2 L-43.9,5.5 L-44.3,7.9 L-44.4,10.2 L-44.3,12.6 L-44.0,14.9 L-43.5,17.1Z" fill="rgb(11,210,11)" stroke="#0a1a0a" stroke-width="1.2"/>
<g clip-path="url(#cB_2c)">
<path d="M-73.8,19.8 L-74.2,16.2 L-74.4,12.5 L-74.2,8.8 L-73.8,5.1 L-73.1,1.4 L-72.1,-2.3 L-70.8,-5.9 L-69.3,-9.5 L-67.5,-13.0 L-65.4,-16.5 L-63.1,-19.9 L-60.5,-23.1 L-57.8,-26.3 L-54.7,-29.4 L-51.5,-32.3 L-48.1,-35.0 L-44.4,-37.6 L-40.7,-40.1 L-36.7,-42.3 L-32.6,-44.4 L-28.4,-46.3 L-24.1,-48.0 L-19.6,-49.5 L-15.1,-50.7 L-10.5,-51.8 L-5.9,-52.6 L-1.3,-53.2 L3.4,-53.6 L-2.9,-28.0 L-5.3,-27.6 L-7.6,-27.1 L-10.0,-26.5 L-12.3,-25.8 L-14.6,-25.0 L-16.8,-24.1 L-19.0,-23.1 L-21.1,-22.1 L-23.2,-20.9 L-25.2,-19.7 L-27.1,-18.5 L-28.9,-17.1 L-30.7,-15.7 L-32.4,-14.3 L-33.9,-12.7 L-35.4,-11.2 L-36.8,-9.5 L-38.1,-7.9 L-39.2,-6.1 L-40.3,-4.4 L-41.2,-2.6 L-42.0,-0.8 L-42.7,1.0 L-43.3,2.8 L-43.8,4.7 L-44.1,6.5 L-44.3,8.4 L-44.4,10.2Z" fill="rgb(10,120,10)"/>
<path d="M-73.8,19.8 L-74.2,16.2 L-72.4,25.0 L-71.9,28.6Z" fill="rgb(8,47,8)" stroke="rgb(8,47,8)" stroke-width=".5"/>
<path d="M-74.2,16.2 L-74.4,12.5 L-72.5,21.3 L-72.4,25.0Z" fill="rgb(8,55,8)" stroke="rgb(8,55,8)" stroke-width=".5"/>
<path d="M-74.4,12.5 L-74.2,8.8 L-72.4,17.6 L-72.5,21.3Z" fill="rgb(8,64,8)" stroke="rgb(8,64,8)" stroke-width=".5"/>
<path d="M-74.2,8.8 L-73.8,5.1 L-72.0,13.9 L-72.4,17.6Z" fill="rgb(8,72,8)" stroke="rgb(8,72,8)" stroke-width=".5"/>
<path d="M-73.8,5.1 L-73.1,1.4 L-71.3,10.2 L-72.0,13.9Z" fill="rgb(8,80,8)" stroke="rgb(8,80,8)" stroke-width=".5"/>
<path d="M-73.1,1.4 L-72.1,-2.3 L-70.3,6.6 L-71.3,10.2Z" fill="rgb(8,88,8)" stroke="rgb(8,88,8)" stroke-width=".5"/>
<path d="M-72.1,-2.3 L-70.8,-5.9 L-69.0,2.9 L-70.3,6.6Z" fill="rgb(9,96,9)" stroke="rgb(9,96,9)" stroke-width=".5"/>
<path d="M-70.8,-5.9 L-69.3,-9.5 L-67.5,-0.7 L-69.0,2.9Z" fill="rgb(9,103,9)" stroke="rgb(9,103,9)" stroke-width=".5"/>
<path d="M-69.3,-9.5 L-67.5,-13.0 L-65.7,-4.2 L-67.5,-0.7Z" fill="rgb(9,110,9)" stroke="rgb(9,110,9)" stroke-width=".5"/>
<path d="M-67.5,-13.0 L-65.4,-16.5 L-63.6,-7.7 L-65.7,-4.2Z" fill="rgb(9,117,9)" stroke="rgb(9,117,9)" stroke-width=".5"/>
<path d="M-65.4,-16.5 L-63.1,-19.9 L-61.3,-11.1 L-63.6,-7.7Z" fill="rgb(9,124,9)" stroke="rgb(9,124,9)" stroke-width=".5"/>
<path d="M-63.1,-19.9 L-60.5,-23.1 L-58.7,-14.3 L-61.3,-11.1Z" fill="rgb(9,131,9)" stroke="rgb(9,131,9)" stroke-width=".5"/>
<path d="M-60.5,-23.1 L-57.8,-26.3 L-55.9,-17.5 L-58.7,-14.3Z" fill="rgb(9,137,9)" stroke="rgb(9,137,9)" stroke-width=".5"/>
<path d="M-57.8,-26.3 L-54.7,-29.4 L-52.9,-20.5 L-55.9,-17.5Z" fill="rgb(9,142,9)" stroke="rgb(9,142,9)" stroke-width=".5"/>
<path d="M-54.7,-29.4 L-51.5,-32.3 L-49.7,-23.5 L-52.9,-20.5Z" fill="rgb(9,147,9)" stroke="rgb(9,147,9)" stroke-width=".5"/>
<path d="M-51.5,-32.3 L-48.1,-35.0 L-46.2,-26.2 L-49.7,-23.5Z" fill="rgb(10,152,10)" stroke="rgb(10,152,10)" stroke-width=".5"/>
<path d="M-48.1,-35.0 L-44.4,-37.6 L-42.6,-28.8 L-46.2,-26.2Z" fill="rgb(10,156,10)" stroke="rgb(10,156,10)" stroke-width=".5"/>
<path d="M-44.4,-37.6 L-40.7,-40.1 L-38.8,-31.3 L-42.6,-28.8Z" fill="rgb(10,160,10)" stroke="rgb(10,160,10)" stroke-width=".5"/>
<path d="M-40.7,-40.1 L-36.7,-42.3 L-34.9,-33.5 L-38.8,-31.3Z" fill="rgb(10,164,10)" stroke="rgb(10,164,10)" stroke-width=".5"/>
<path d="M-36.7,-42.3 L-32.6,-44.4 L-30.8,-35.6 L-34.9,-33.5Z" fill="rgb(10,167,10)" stroke="rgb(10,167,10)" stroke-width=".5"/>
<path d="M-32.6,-44.4 L-28.4,-46.3 L-26.6,-37.5 L-30.8,-35.6Z" fill="rgb(10,169,10)" stroke="rgb(10,169,10)" stroke-width=".5"/>
<path d="M-28.4,-46.3 L-24.1,-48.0 L-22.2,-39.2 L-26.6,-37.5Z" fill="rgb(10,171,10)" stroke="rgb(10,171,10)" stroke-width=".5"/>
<path d="M-24.1,-48.0 L-19.6,-49.5 L-17.8,-40.7 L-22.2,-39.2Z" fill="rgb(10,173,10)" stroke="rgb(10,173,10)" stroke-width=".5"/>
<path d="M-19.6,-49.5 L-15.1,-50.7 L-13.3,-41.9 L-17.8,-40.7Z" fill="rgb(10,174,10)" stroke="rgb(10,174,10)" stroke-width=".5"/>
<path d="M-15.1,-50.7 L-10.5,-51.8 L-8.7,-43.0 L-13.3,-41.9Z" fill="rgb(10,174,10)" stroke="rgb(10,174,10)" stroke-width=".5"/>
<path d="M-10.5,-51.8 L-5.9,-52.6 L-4.1,-43.8 L-8.7,-43.0Z" fill="rgb(10,174,10)" stroke="rgb(10,174,10)" stroke-width=".5"/>
<path d="M-5.9,-52.6 L-1.3,-53.2 L0.6,-44.4 L-4.1,-43.8Z" fill="rgb(10,174,10)" stroke="rgb(10,174,10)" stroke-width=".5"/>
<path d="M-1.3,-53.2 L3.4,-53.6 L5.2,-44.8 L0.6,-44.4Z" fill="rgb(10,173,10)" stroke="rgb(10,173,10)" stroke-width=".5"/>
<path d="M-73.8,19.8 L-74.2,16.2 L-74.4,12.5 L-74.2,8.8 L-73.8,5.1 L-73.1,1.4 L-72.1,-2.3 L-70.8,-5.9 L-69.3,-9.5 L-67.5,-13.0 L-65.4,-16.5 L-63.1,-19.9 L-60.5,-23.1 L-57.8,-26.3 L-54.7,-29.4 L-51.5,-32.3 L-48.1,-35.0 L-44.4,-37.6 L-40.7,-40.1 L-36.7,-42.3 L-32.6,-44.4 L-28.4,-46.3 L-24.1,-48.0 L-19.6,-49.5 L-15.1,-50.7 L-10.5,-51.8 L-5.9,-52.6 L-1.3,-53.2 L3.4,-53.6 L-2.9,-28.0 L-5.3,-27.6 L-7.6,-27.1 L-10.0,-26.5 L-12.3,-25.8 L-14.6,-25.0 L-16.8,-24.1 L-19.0,-23.1 L-21.1,-22.1 L-23.2,-20.9 L-25.2,-19.7 L-27.1,-18.5 L-28.9,-17.1 L-30.7,-15.7 L-32.4,-14.3 L-33.9,-12.7 L-35.4,-11.2 L-36.8,-9.5 L-38.1,-7.9 L-39.2,-6.1 L-40.3,-4.4 L-41.2,-2.6 L-42.0,-0.8 L-42.7,1.0 L-43.3,2.8 L-43.8,4.7 L-44.1,6.5 L-44.3,8.4 L-44.4,10.2Z" fill="none" stroke="#0a1a0a" stroke-width="1.2"/>
<g clip-path="url(#cB_2d)">
<rect x="174" y="49" width="606" height="370" transform="translate(-599,-265.6)" fill="url(#bgfill)"/>
<path d="M-71.9,28.6 L-72.4,25.0 L-72.5,21.3 L-72.4,17.6 L-72.0,13.9 L-71.3,10.2 L-70.3,6.6 L-69.0,2.9 L-67.5,-0.7 L-65.7,-4.2 L-63.6,-7.7 L-61.3,-11.1 L-58.7,-14.3 L-55.9,-17.5 L-52.9,-20.5 L-49.7,-23.5 L-46.2,-26.2 L-42.6,-28.8 L-38.8,-31.3 L-34.9,-33.5 L-30.8,-35.6 L-26.6,-37.5 L-22.2,-39.2 L-17.8,-40.7 L-13.3,-41.9 L-8.7,-43.0 L-4.1,-43.8 L0.6,-44.4 L5.2,-44.8 L-1.1,-19.2 L-3.4,-18.8 L-5.8,-18.3 L-8.2,-17.7 L-10.5,-17.0 L-12.7,-16.2 L-15.0,-15.3 L-17.1,-14.3 L-19.3,-13.3 L-21.3,-12.1 L-23.3,-10.9 L-25.2,-9.7 L-27.1,-8.3 L-28.8,-6.9 L-30.5,-5.4 L-32.1,-3.9 L-33.6,-2.3 L-35.0,-0.7 L-36.2,1.0 L-37.4,2.7 L-38.4,4.4 L-39.4,6.2 L-40.2,8.0 L-40.9,9.8 L-41.5,11.6 L-41.9,13.5 L-42.3,15.3 L-42.5,17.2 L-42.5,19.0Z" fill="none" stroke="#0a1a0a" stroke-width="1.2"/>
</g></g></g>
</g>
<path d="M-73.4,20.4 L-74.5,16.3 L-75.3,12.3 L-75.6,8.1 L-75.6,3.9 L-75.3,-0.3 L-74.5,-4.5 L-73.4,-8.7 L-71.9,-12.9 L-70.1,-16.9 L-67.9,-20.9 L-65.4,-24.8 L-62.6,-28.6 L-59.5,-32.2 L-56.1,-35.7 L-52.4,-39.0 L-48.4,-42.1 L-44.2,-45.0 L-39.8,-47.7 L-35.2,-50.2 L-30.4,-52.4 L-25.5,-54.3 L-20.4,-56.0 L-15.3,-57.4 L-10.1,-58.5 L-4.8,-59.3 L0.5,-59.9 L5.8,-60.1 L11.1,-60.1 L5.0,-35.2 L1.9,-35.1 L-1.1,-34.8 L-4.2,-34.4 L-7.2,-33.8 L-10.2,-33.1 L-13.2,-32.3 L-16.1,-31.3 L-18.9,-30.1 L-21.7,-28.8 L-24.3,-27.4 L-26.8,-25.9 L-29.2,-24.2 L-31.5,-22.5 L-33.7,-20.6 L-35.7,-18.7 L-37.5,-16.6 L-39.2,-14.5 L-40.7,-12.3 L-42.0,-10.1 L-43.1,-7.8 L-44.0,-5.5 L-44.7,-3.2 L-45.3,-0.8 L-45.6,1.5 L-45.7,3.9 L-45.6,6.2 L-45.3,8.5 L-44.8,10.8Z" fill="none" stroke="#0a1a0a" stroke-width=".8"/>
<clipPath id="hB"><path d="M38.1,-7.9 L38.5,-5.3 L38.6,-2.7 L38.4,-0.1 L37.9,2.6 L37.1,5.2 L36.0,7.8 L34.7,10.3 L33.1,12.8 L31.3,15.1 L29.2,17.4 L26.8,19.5 L24.3,21.4 L21.6,23.2 L18.8,24.9 L15.8,26.3 L12.6,27.5 L9.4,28.5 L6.1,29.3 L2.8,29.9 L-0.6,30.3 L-4.0,30.4 L-7.3,30.3 L-10.6,29.9 L-13.8,29.4 L-16.9,28.6 L-19.8,27.6 L-22.6,26.3 L-25.3,24.9 L-27.7,23.3 L-29.9,21.5 L-31.9,19.6 L-33.7,17.5 L-35.2,15.2 L-36.5,12.9 L-37.4,10.4 L-38.1,7.9 L-38.5,5.3 L-38.6,2.7 L-38.4,0.1 L-37.9,-2.6 L-37.1,-5.2 L-36.0,-7.8 L-34.7,-10.3 L-33.1,-12.8 L-31.3,-15.1 L-29.2,-17.4 L-26.8,-19.5 L-24.3,-21.4 L-21.6,-23.2 L-18.8,-24.9 L-15.8,-26.3 L-12.6,-27.5 L-9.4,-28.5 L-6.1,-29.3 L-2.8,-29.9 L0.6,-30.3 L4.0,-30.4 L7.3,-30.3 L10.6,-29.9 L13.8,-29.4 L16.9,-28.6 L19.8,-27.6 L22.6,-26.3 L25.3,-24.9 L27.7,-23.3 L29.9,-21.5 L31.9,-19.6 L33.7,-17.5 L35.2,-15.2 L36.5,-12.9 L37.4,-10.4Z"/></clipPath>
<g clip-path="url(#hB)">
<path d="M38.1,-7.9 L38.5,-5.3 L38.6,-2.7 L38.4,-0.1 L37.9,2.6 L37.1,5.2 L36.0,7.8 L34.7,10.3 L33.1,12.8 L31.3,15.1 L29.2,17.4 L26.8,19.5 L24.3,21.4 L21.6,23.2 L18.8,24.9 L15.8,26.3 L12.6,27.5 L9.4,28.5 L6.1,29.3 L2.8,29.9 L-0.6,30.3 L-4.0,30.4 L-7.3,30.3 L-10.6,29.9 L-13.8,29.4 L-16.9,28.6 L-19.8,27.6 L-22.6,26.3 L-25.3,24.9 L-27.7,23.3 L-29.9,21.5 L-31.9,19.6 L-33.7,17.5 L-35.2,15.2 L-36.5,12.9 L-37.4,10.4 L-38.1,7.9 L-38.5,5.3 L-38.6,2.7 L-38.4,0.1 L-37.9,-2.6 L-37.1,-5.2 L-36.0,-7.8 L-34.7,-10.3 L-33.1,-12.8 L-31.3,-15.1 L-29.2,-17.4 L-26.8,-19.5 L-24.3,-21.4 L-21.6,-23.2 L-18.8,-24.9 L-15.8,-26.3 L-12.6,-27.5 L-9.4,-28.5 L-6.1,-29.3 L-2.8,-29.9 L0.6,-30.3 L4.0,-30.4 L7.3,-30.3 L10.6,-29.9 L13.8,-29.4 L16.9,-28.6 L19.8,-27.6 L22.6,-26.3 L25.3,-24.9 L27.7,-23.3 L29.9,-21.5 L31.9,-19.6 L33.7,-17.5 L35.2,-15.2 L36.5,-12.9 L37.4,-10.4Z" fill="rgb(10,130,10)"/>
<path d="M-38.1,7.9 L-38.5,5.3 L-37.2,11.5 L-36.8,14.1Z" fill="rgb(8,44,8)" stroke="rgb(8,44,8)" stroke-width=".5"/>
<path d="M-38.5,5.3 L-38.6,2.7 L-37.3,8.9 L-37.2,11.5Z" fill="rgb(8,56,8)" stroke="rgb(8,56,8)" stroke-width=".5"/>
<path d="M-38.6,2.7 L-38.4,0.1 L-37.1,6.2 L-37.3,8.9Z" fill="rgb(8,68,8)" stroke="rgb(8,68,8)" stroke-width=".5"/>
<path d="M-38.4,0.1 L-37.9,-2.6 L-36.6,3.6 L-37.1,6.2Z" fill="rgb(8,79,8)" stroke="rgb(8,79,8)" stroke-width=".5"/>
<path d="M-37.9,-2.6 L-37.1,-5.2 L-35.8,1.0 L-36.6,3.6Z" fill="rgb(8,91,8)" stroke="rgb(8,91,8)" stroke-width=".5"/>
<path d="M-37.1,-5.2 L-36.0,-7.8 L-34.8,-1.6 L-35.8,1.0Z" fill="rgb(9,102,9)" stroke="rgb(9,102,9)" stroke-width=".5"/>
<path d="M-36.0,-7.8 L-34.7,-10.3 L-33.4,-4.2 L-34.8,-1.6Z" fill="rgb(9,112,9)" stroke="rgb(9,112,9)" stroke-width=".5"/>
<path d="M-34.7,-10.3 L-33.1,-12.8 L-31.8,-6.6 L-33.4,-4.2Z" fill="rgb(9,122,9)" stroke="rgb(9,122,9)" stroke-width=".5"/>
<path d="M-33.1,-12.8 L-31.3,-15.1 L-30.0,-9.0 L-31.8,-6.6Z" fill="rgb(9,131,9)" stroke="rgb(9,131,9)" stroke-width=".5"/>
<path d="M-31.3,-15.1 L-29.2,-17.4 L-27.9,-11.2 L-30.0,-9.0Z" fill="rgb(9,139,9)" stroke="rgb(9,139,9)" stroke-width=".5"/>
<path d="M-29.2,-17.4 L-26.8,-19.5 L-25.6,-13.3 L-27.9,-11.2Z" fill="rgb(9,147,9)" stroke="rgb(9,147,9)" stroke-width=".5"/>
<path d="M-26.8,-19.5 L-24.3,-21.4 L-23.0,-15.3 L-25.6,-13.3Z" fill="rgb(10,153,10)" stroke="rgb(10,153,10)" stroke-width=".5"/>
<path d="M-24.3,-21.4 L-21.6,-23.2 L-20.3,-17.1 L-23.0,-15.3Z" fill="rgb(10,159,10)" stroke="rgb(10,159,10)" stroke-width=".5"/>
<path d="M-21.6,-23.2 L-18.8,-24.9 L-17.5,-18.7 L-20.3,-17.1Z" fill="rgb(10,164,10)" stroke="rgb(10,164,10)" stroke-width=".5"/>
<path d="M-18.8,-24.9 L-15.8,-26.3 L-14.5,-20.1 L-17.5,-18.7Z" fill="rgb(10,168,10)" stroke="rgb(10,168,10)" stroke-width=".5"/>
<path d="M-15.8,-26.3 L-12.6,-27.5 L-11.3,-21.3 L-14.5,-20.1Z" fill="rgb(10,171,10)" stroke="rgb(10,171,10)" stroke-width=".5"/>
<path d="M-12.6,-27.5 L-9.4,-28.5 L-8.1,-22.4 L-11.3,-21.3Z" fill="rgb(10,173,10)" stroke="rgb(10,173,10)" stroke-width=".5"/>
<path d="M-9.4,-28.5 L-6.1,-29.3 L-4.8,-23.2 L-8.1,-22.4Z" fill="rgb(10,174,10)" stroke="rgb(10,174,10)" stroke-width=".5"/>
<path d="M-6.1,-29.3 L-2.8,-29.9 L-1.5,-23.7 L-4.8,-23.2Z" fill="rgb(10,174,10)" stroke="rgb(10,174,10)" stroke-width=".5"/>
<path d="M-2.8,-29.9 L0.6,-30.3 L1.9,-24.1 L-1.5,-23.7Z" fill="rgb(10,173,10)" stroke="rgb(10,173,10)" stroke-width=".5"/>
<path d="M0.6,-30.3 L4.0,-30.4 L5.2,-24.2 L1.9,-24.1Z" fill="rgb(10,171,10)" stroke="rgb(10,171,10)" stroke-width=".5"/>
<path d="M4.0,-30.4 L7.3,-30.3 L8.6,-24.1 L5.2,-24.2Z" fill="rgb(10,168,10)" stroke="rgb(10,168,10)" stroke-width=".5"/>
<path d="M7.3,-30.3 L10.6,-29.9 L11.9,-23.8 L8.6,-24.1Z" fill="rgb(10,164,10)" stroke="rgb(10,164,10)" stroke-width=".5"/>
<path d="M10.6,-29.9 L13.8,-29.4 L15.0,-23.2 L11.9,-23.8Z" fill="rgb(10,159,10)" stroke="rgb(10,159,10)" stroke-width=".5"/>
<path d="M13.8,-29.4 L16.9,-28.6 L18.1,-22.4 L15.0,-23.2Z" fill="rgb(10,153,10)" stroke="rgb(10,153,10)" stroke-width=".5"/>
<path d="M16.9,-28.6 L19.8,-27.6 L21.1,-21.4 L18.1,-22.4Z" fill="rgb(9,147,9)" stroke="rgb(9,147,9)" stroke-width=".5"/>
<path d="M19.8,-27.6 L22.6,-26.3 L23.9,-20.2 L21.1,-21.4Z" fill="rgb(9,139,9)" stroke="rgb(9,139,9)" stroke-width=".5"/>
<path d="M22.6,-26.3 L25.3,-24.9 L26.5,-18.8 L23.9,-20.2Z" fill="rgb(9,131,9)" stroke="rgb(9,131,9)" stroke-width=".5"/>
<path d="M25.3,-24.9 L27.7,-23.3 L29.0,-17.1 L26.5,-18.8Z" fill="rgb(9,122,9)" stroke="rgb(9,122,9)" stroke-width=".5"/>
<path d="M27.7,-23.3 L29.9,-21.5 L31.2,-15.4 L29.0,-17.1Z" fill="rgb(9,112,9)" stroke="rgb(9,112,9)" stroke-width=".5"/>
<path d="M29.9,-21.5 L31.9,-19.6 L33.2,-13.4 L31.2,-15.4Z" fill="rgb(9,102,9)" stroke="rgb(9,102,9)" stroke-width=".5"/>
<path d="M31.9,-19.6 L33.7,-17.5 L35.0,-11.3 L33.2,-13.4Z" fill="rgb(8,91,8)" stroke="rgb(8,91,8)" stroke-width=".5"/>
<path d="M33.7,-17.5 L35.2,-15.2 L36.5,-9.1 L35.0,-11.3Z" fill="rgb(8,79,8)" stroke="rgb(8,79,8)" stroke-width=".5"/>
<path d="M35.2,-15.2 L36.5,-12.9 L37.7,-6.7 L36.5,-9.1Z" fill="rgb(8,68,8)" stroke="rgb(8,68,8)" stroke-width=".5"/>
<path d="M36.5,-12.9 L37.4,-10.4 L38.7,-4.3 L37.7,-6.7Z" fill="rgb(8,56,8)" stroke="rgb(8,56,8)" stroke-width=".5"/>
<path d="M37.4,-10.4 L38.1,-7.9 L39.4,-1.8 L38.7,-4.3Z" fill="rgb(8,44,8)" stroke="rgb(8,44,8)" stroke-width=".5"/>
<path d="M39.4,-1.8 L39.8,0.8 L39.9,3.5 L39.7,6.1 L39.2,8.8 L38.4,11.4 L37.3,14.0 L36.0,16.5 L34.4,19.0 L32.5,21.3 L30.4,23.5 L28.1,25.7 L25.6,27.6 L22.9,29.4 L20.0,31.0 L17.0,32.4 L13.9,33.7 L10.7,34.7 L7.4,35.5 L4.0,36.1 L0.7,36.4 L-2.7,36.6 L-6.0,36.4 L-9.3,36.1 L-12.5,35.5 L-15.6,34.7 L-18.5,33.7 L-21.3,32.5 L-24.0,31.1 L-26.4,29.5 L-28.7,27.7 L-30.7,25.7 L-32.4,23.6 L-33.9,21.4 L-35.2,19.1 L-36.1,16.6 L-36.8,14.1 L-37.2,11.5 L-37.3,8.9 L-37.1,6.2 L-36.6,3.6 L-35.8,1.0 L-34.8,-1.6 L-33.4,-4.2 L-31.8,-6.6 L-30.0,-9.0 L-27.9,-11.2 L-25.6,-13.3 L-23.0,-15.3 L-20.3,-17.1 L-17.5,-18.7 L-14.5,-20.1 L-11.3,-21.3 L-8.1,-22.4 L-4.8,-23.2 L-1.5,-23.7 L1.9,-24.1 L5.2,-24.2 L8.6,-24.1 L11.9,-23.8 L15.0,-23.2 L18.1,-22.4 L21.1,-21.4 L23.9,-20.2 L26.5,-18.8 L29.0,-17.1 L31.2,-15.4 L33.2,-13.4 L35.0,-11.3 L36.5,-9.1 L37.7,-6.7 L38.7,-4.3Z" fill="#3b3b3b" stroke="#141414" stroke-width="1"/>
<ellipse cx="-11.2" cy="-17.0" rx="2.8" ry="2.3" transform="rotate(-11.75 -11.2 -17.0)" fill="#424242" stroke="#202020" stroke-width=".9"/>
<ellipse cx="-19.4" cy="-8.7" rx="2.8" ry="2.3" transform="rotate(-11.75 -19.4 -8.7)" fill="#424242" stroke="#202020" stroke-width=".9"/>
<ellipse cx="-28.2" cy="-0.2" rx="2.8" ry="2.3" transform="rotate(-11.75 -28.2 -0.2)" fill="#424242" stroke="#202020" stroke-width=".9"/>
<ellipse cx="30.9" cy="9.3" rx="2.8" ry="2.3" transform="rotate(-11.75 30.9 9.3)" fill="#424242" stroke="#202020" stroke-width=".9"/>
<ellipse cx="21.8" cy="17.6" rx="2.8" ry="2.3" transform="rotate(-11.75 21.8 17.6)" fill="#424242" stroke="#202020" stroke-width=".9"/>
<ellipse cx="13.2" cy="25.5" rx="2.8" ry="2.3" transform="rotate(-11.75 13.2 25.5)" fill="#424242" stroke="#202020" stroke-width=".9"/>
<ellipse cx="10.5" cy="-19.5" rx="2.8" ry="2.3" transform="rotate(-11.75 10.5 -19.5)" fill="#424242" stroke="#202020" stroke-width=".9"/>
<ellipse cx="-8.5" cy="29.5" rx="2.8" ry="2.3" transform="rotate(-11.75 -8.5 29.5)" fill="#424242" stroke="#202020" stroke-width=".9"/>
<ellipse cx="1.0" cy="4.4" rx="15.4" ry="11.9" transform="rotate(-11.75 1.0 3.8)" fill="#2b2b2b" stroke="#151515" stroke-width="1.1"/>
<ellipse cx="1.0" cy="4.0" rx="13.2" ry="10.0" transform="rotate(-11.75 1.0 3.8)" fill="#3a3a3a" stroke="#151515" stroke-width="0.7"/>
<ellipse cx="1.0" cy="3.8" rx="10.6" ry="8.0" transform="rotate(-11.75 1.0 3.8)" fill="#484848" stroke="#151515" stroke-width="0.8"/>
<ellipse cx="1.0" cy="4.0" rx="5.6" ry="4.3" transform="rotate(-11.75 1.0 3.8)" fill="#333333" stroke="#151515" stroke-width="0.9"/>
<ellipse cx="1.0" cy="3.2" rx="3.3" ry="2.2" transform="rotate(-11.75 1.0 3.8)" fill="#444444" stroke="#151515" stroke-width="0.8"/>
</g>
<path d="M38.1,-7.9 L38.5,-5.3 L38.6,-2.7 L38.4,-0.1 L37.9,2.6 L37.1,5.2 L36.0,7.8 L34.7,10.3 L33.1,12.8 L31.3,15.1 L29.2,17.4 L26.8,19.5 L24.3,21.4 L21.6,23.2 L18.8,24.9 L15.8,26.3 L12.6,27.5 L9.4,28.5 L6.1,29.3 L2.8,29.9 L-0.6,30.3 L-4.0,30.4 L-7.3,30.3 L-10.6,29.9 L-13.8,29.4 L-16.9,28.6 L-19.8,27.6 L-22.6,26.3 L-25.3,24.9 L-27.7,23.3 L-29.9,21.5 L-31.9,19.6 L-33.7,17.5 L-35.2,15.2 L-36.5,12.9 L-37.4,10.4 L-38.1,7.9 L-38.5,5.3 L-38.6,2.7 L-38.4,0.1 L-37.9,-2.6 L-37.1,-5.2 L-36.0,-7.8 L-34.7,-10.3 L-33.1,-12.8 L-31.3,-15.1 L-29.2,-17.4 L-26.8,-19.5 L-24.3,-21.4 L-21.6,-23.2 L-18.8,-24.9 L-15.8,-26.3 L-12.6,-27.5 L-9.4,-28.5 L-6.1,-29.3 L-2.8,-29.9 L0.6,-30.3 L4.0,-30.4 L7.3,-30.3 L10.6,-29.9 L13.8,-29.4 L16.9,-28.6 L19.8,-27.6 L22.6,-26.3 L25.3,-24.9 L27.7,-23.3 L29.9,-21.5 L31.9,-19.6 L33.7,-17.5 L35.2,-15.2 L36.5,-12.9 L37.4,-10.4Z" fill="none" stroke="#0a1a0a" stroke-width=".8"/>
<g transform="translate(18.7,-13.5) rotate(-11.75)">
<ellipse cx="0.3" cy="1.7" rx="12.3" ry="8.9" fill="#1c1c1c"/>
<ellipse cx="0" cy="0" rx="12.3" ry="8.6" fill="#c6c6c6" stroke="#3a3a3a" stroke-width=".7"/>
<ellipse cx="0" cy="-0.3" rx="9" ry="6.300" fill="#7c7c7c"/>
<ellipse cx="0" cy="-1.500" rx="7.800" ry="5.500" fill="url(#domeB)" stroke="#5a5a5a" stroke-width=".6"/>
<ellipse cx="0.3" cy="-3.100" rx="4.500" ry="3.300" fill="#505050" stroke="#2a2a2a" stroke-width=".7"/>
<path d="M-2.400 -3.400 L3 -2.800 M0.800 -5.400 L-0.200 -0.900 M-1.600 -4.800 L2.200 -1.400" stroke="#a8a8a8" stroke-width=".7"/>
</g>
<g transform="translate(-17.5,20.0) rotate(-11.75)">
<ellipse cx="0.3" cy="1.7" rx="12.3" ry="8.9" fill="#1c1c1c"/>
<ellipse cx="0" cy="0" rx="12.3" ry="8.6" fill="#c6c6c6" stroke="#3a3a3a" stroke-width=".7"/>
<ellipse cx="0" cy="-0.3" rx="9" ry="6.300" fill="#7c7c7c"/>
<ellipse cx="0" cy="-1.500" rx="7.800" ry="5.500" fill="url(#domeB)" stroke="#5a5a5a" stroke-width=".6"/>
<ellipse cx="0.3" cy="-3.100" rx="4.500" ry="3.300" fill="#505050" stroke="#2a2a2a" stroke-width=".7"/>
<path d="M-2.400 -3.400 L3 -2.800 M0.800 -5.400 L-0.200 -0.900 M-1.600 -4.800 L2.200 -1.400" stroke="#a8a8a8" stroke-width=".7"/>
</g>
</g>
<g stroke-width="1.5" fill="none" stroke-linecap="round"><path d="M762 400 L772.500 402.600" stroke="#b83030"/><path d="M762 400 L765.400 392.600" stroke="#2a9a3a"/><path d="M762 400 L760.600 392" stroke="#2222a0"/></g>
<path d="M759 394.200 L760.200 390.400 L762.400 393.800Z" fill="#2222a0"/><path d="M764 393.600 L766.200 391.200 L766.400 394.200Z" fill="#2a9a3a"/><path d="M770.400 401 L775 403.200 L770 404Z" fill="#b83030"/>
<g font-family="'Liberation Sans',sans-serif" font-size="6.200" font-weight="bold" fill="#1c1c1c"><text x="761.600" y="390.200">Z</text><text x="767" y="392">Y</text><text x="776" y="403.600">X</text></g>
</svg>
<div class="abs" style="left:173.800px;top:419px;width:166.600px;height:19.300px;background:#fbfbfa;border:1px solid #d4d1cc;border-top:none;border-radius:0 0 3px 3px"></div>
<div class="t" style="left:192.4px;top:421.14px;font-size:9.7px;color:#3c3b37;transform-origin:0 0;transform:scaleX(0.9024);">F2-T29-ej1-renacuajo-ruedas : 1</div>
<svg class="abs" style="left:177px;top:423px" width="12" height="11" viewBox="0 0 12 11"><path d="M1 1 L6 1 L6 3 L3.5 3 L3.5 9.5 L1 9.5Z" fill="#e03018"/><circle cx="7" cy="6.5" r="3.2" fill="#1a2e9a"/><circle cx="7" cy="6.5" r="1.2" fill="#fff"/></svg>
<svg class="abs" style="left:325.600px;top:425px" width="8" height="8" viewBox="0 0 8 8"><path d="M1.600 1.600 L6.400 6.400 M6.400 1.600 L1.600 6.400" stroke="#4c4c4a" stroke-width="2" stroke-linecap="round"/></svg>
<div class="vhdl" style="left:786px;top:51px"><i></i><i></i><i></i></div>
<svg class="abs" style="left:780px;top:49px" width="20" height="240" viewBox="780 49 20 240">
<defs><linearGradient id="rbtn" x1="0" y1="0" x2="0" y2="1"><stop offset="0" stop-color="#fbfbfa"/><stop offset="1" stop-color="#e6e4e0"/></linearGradient></defs>
<rect x="782.400" y="57.1" width="14.200" height="13.200" rx="2.200" fill="url(#rbtn)" stroke="#cfccc6" stroke-width=".8"/>
<rect x="782.400" y="73.1" width="14.200" height="13.200" rx="2.200" fill="url(#rbtn)" stroke="#cfccc6" stroke-width=".8"/>
<rect x="782.400" y="89.1" width="14.200" height="13.200" rx="2.200" fill="url(#rbtn)" stroke="#cfccc6" stroke-width=".8"/>
<rect x="782.400" y="105.1" width="14.200" height="13.200" rx="2.200" fill="url(#rbtn)" stroke="#cfccc6" stroke-width=".8"/>
<rect x="782.400" y="121.1" width="14.200" height="13.200" rx="2.200" fill="url(#rbtn)" stroke="#cfccc6" stroke-width=".8"/>
<rect x="782.400" y="137.1" width="14.200" height="13.200" rx="2.200" fill="url(#rbtn)" stroke="#cfccc6" stroke-width=".8"/>
<rect x="782.400" y="153.1" width="14.200" height="13.200" rx="2.200" fill="url(#rbtn)" stroke="#cfccc6" stroke-width=".8"/>
<rect x="782.400" y="169.1" width="14.200" height="13.200" rx="2.200" fill="url(#rbtn)" stroke="#cfccc6" stroke-width=".8"/>
<rect x="782.400" y="185.1" width="14.200" height="13.200" rx="2.200" fill="url(#rbtn)" stroke="#cfccc6" stroke-width=".8"/>
<rect x="782.400" y="201.1" width="14.200" height="13.200" rx="2.200" fill="url(#rbtn)" stroke="#cfccc6" stroke-width=".8"/>
<rect x="782.400" y="217.1" width="14.200" height="13.200" rx="2.200" fill="url(#rbtn)" stroke="#cfccc6" stroke-width=".8"/>
<rect x="782.400" y="233.1" width="14.200" height="13.200" rx="2.200" fill="url(#rbtn)" stroke="#cfccc6" stroke-width=".8"/>
<rect x="782.400" y="249.1" width="14.200" height="13.200" rx="2.200" fill="url(#rbtn)" stroke="#cfccc6" stroke-width=".8"/>
<rect x="782.400" y="265.1" width="14.200" height="13.200" rx="2.200" fill="url(#rbtn)" stroke="#cfccc6" stroke-width=".8"/>
<path d="M787.6 63.1v-1.800a1.900 1.900 0 0 1 3.800 0v1.800" fill="none" stroke="#12906c" stroke-width="1.200"/><rect x="786.3" y="62.9" width="6.400" height="4.800" rx=".6" fill="#12906c" stroke="#0b6a50" stroke-width=".5"/><rect x="787.1" y="63.5" width="2" height="3.400" fill="#7fd0b8" opacity=".7"/>
<path d="M785.1 83.1L793.9 76.3" stroke="#12906c" stroke-width="1.500"/><ellipse cx="789.5" cy="79.7" rx="3" ry="2" transform="rotate(-38 789.5 79.7)" fill="#12906c" stroke="#0b6a50" stroke-width=".5"/>
<path d="M789.5 91.7v7M784.9 99.3h9.200" stroke="#12906c" stroke-width="2"/>
<g stroke="#12906c" stroke-width="1.700"><path d="M787.5 107.5v8.400M791.5 107.5v8.400M785.3 109.7h8.400M785.3 113.7h8.400"/></g><rect x="788.4" y="110.6" width="2.200" height="2.200" fill="#e8f4ee"/>
<path d="M785.9 124.1l7.200 7.200M793.1 124.1l-7.200 7.200" stroke="#12906c" stroke-width="2.200" stroke-linecap="round"/>
<path d="M785.7 141.1l7 4M786.3 144.1l7 4" stroke="#12906c" stroke-width="1.800" transform="translate(0,-1)"/>
<path d="M786.1 162.7L793.5 156.1" stroke="#12906c" stroke-width="1.600"/><circle cx="786.7" cy="162.3" r="2.100" fill="#12906c"/>
<path d="M789.5 171.3l4.400 4.400-4.400 4.400-4.400-4.400z" fill="#12906c"/><circle cx="789.5" cy="175.7" r="1.800" fill="#eef6f2"/>
<circle cx="789.5" cy="191.7" r="3.800" fill="none" stroke="#12906c" stroke-width="1.600"/><circle cx="789.5" cy="191.7" r="1.500" fill="#12906c"/>
<circle cx="786.3" cy="207.7" r="1.300" fill="#12906c"/><circle cx="789.5" cy="207.7" r="1.300" fill="#12906c"/><circle cx="792.7" cy="207.7" r="1.300" fill="#12906c"/>
<path d="M785.7 223.1l7.400 4" stroke="#12906c" stroke-width="1.900"/><circle cx="791.9" cy="220.9" r="1.500" fill="#12906c"/>
<path d="M789.5 235.9v7.600M785.7 239.7h7.600" stroke="#12906c" stroke-width="2.200"/>
<path d="M788.5 252.3h4.600v3.400" fill="none" stroke="#12906c" stroke-width="1.600"/><path d="M785.7 256.1l2.200-1.600 1 1.600 2-.6-.6 2.400 1.600 1.600-3 .6-1.600-1z" fill="#12906c"/>
<rect x="785.3" y="267.5" width="8.400" height="8.400" fill="#12906c" stroke="#0b6a50" stroke-width=".6"/><circle cx="787.9" cy="273.5" r="1" fill="none" stroke="#0a5a44" stroke-width=".5"/>
</svg>
<div class="abs" style="left:172px;top:439.300px;width:628px;height:1px;background:#e9e7e4"></div>
<div class="t" style="left:716.8px;top:441.64px;font-size:9.7px;color:#3c3b37;transform-origin:0 0;transform:scaleX(0.9115);">165.36 x 100.59 mm</div>
<div class="abs" style="left:798.600px;top:0;width:1.400px;height:456px;background:#0c0c0c"></div>
</div></body></html>
